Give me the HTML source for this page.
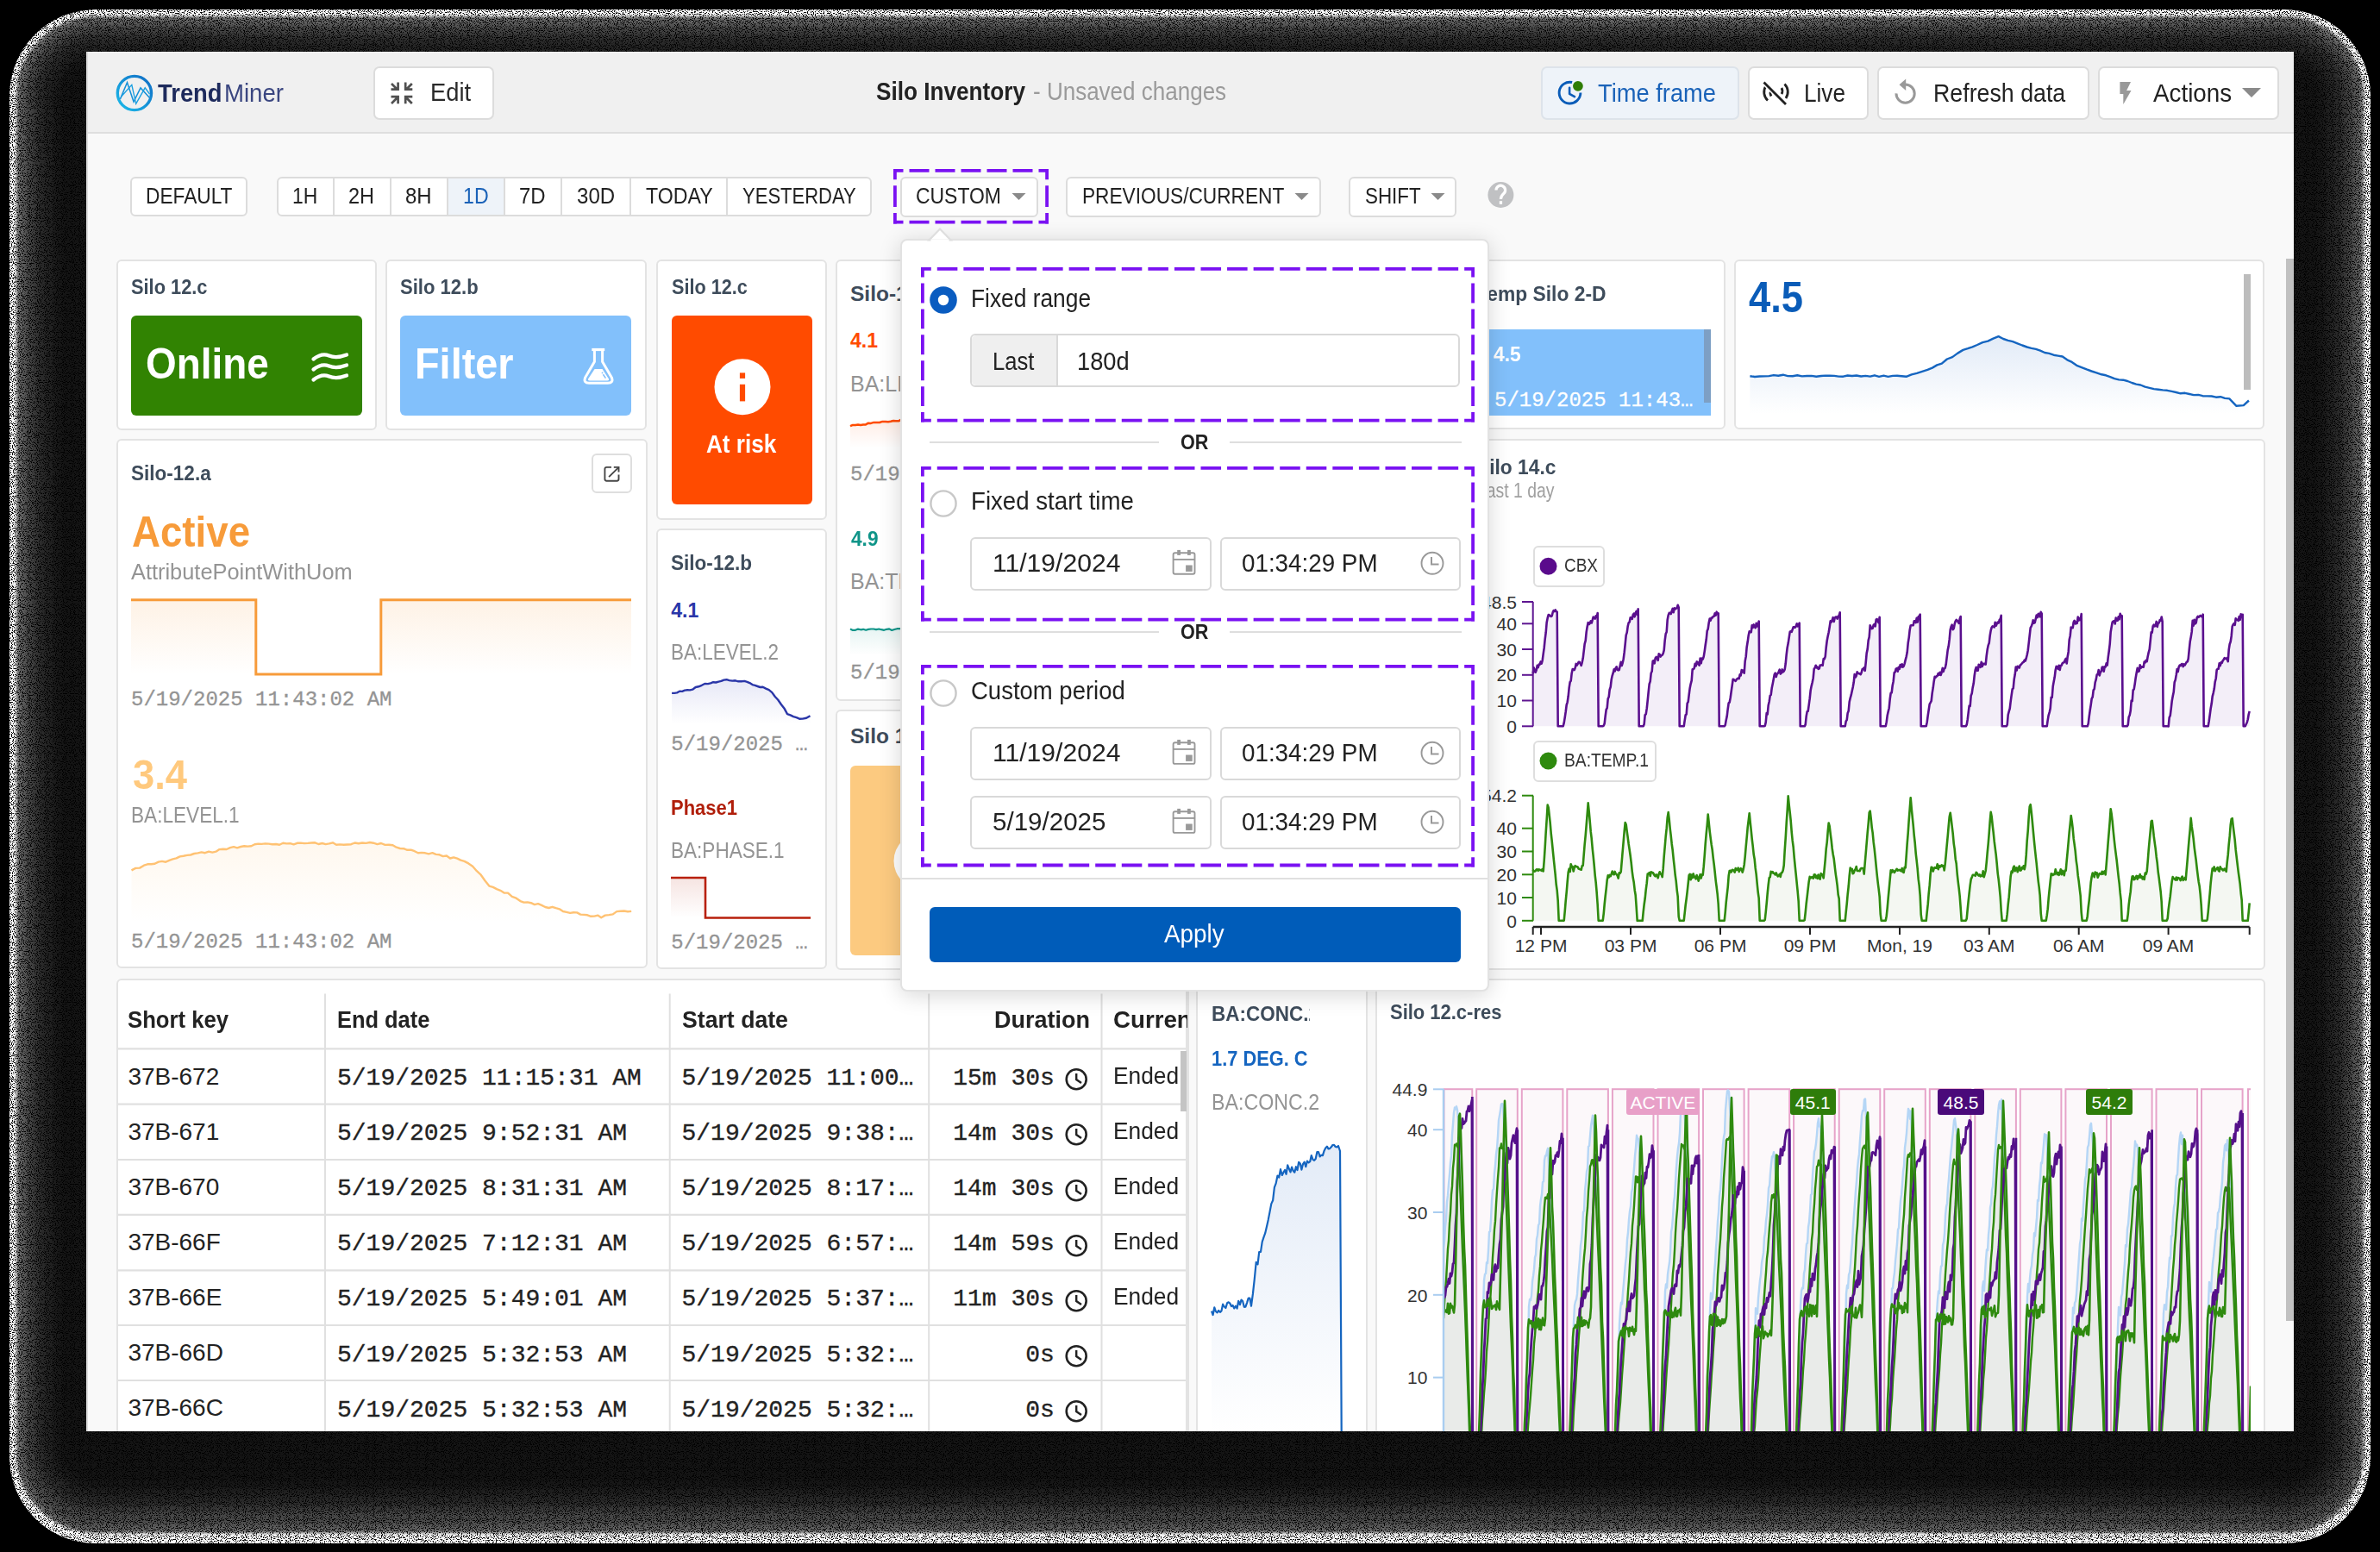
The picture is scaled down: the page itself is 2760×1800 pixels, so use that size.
<!DOCTYPE html>
<html><head><meta charset="utf-8"><title>TrendMiner - Silo Inventory</title>
<style>
html,body{margin:0;padding:0;background:#000;}
body{width:2760px;height:1800px;overflow:hidden;position:relative;font-family:"Liberation Sans",sans-serif;}
.s{position:absolute;}
.win{position:absolute;left:100px;top:60px;width:2560px;height:1600px;overflow:hidden;background:#f9f9f9;}
.t{position:absolute;line-height:1;white-space:nowrap;transform-origin:0 0;}
.b{position:absolute;}
svg.b{overflow:visible;}
</style></head><body>
<div class="s" style="left:11px;top:11px;width:2738px;height:1779px;border-radius:100px;background:rgb(250,250,250);"></div>
<div class="s" style="left:19px;top:19px;width:2722px;height:1759px;border-radius:92px;background:rgb(112,112,112);filter:blur(1.5px);"></div>
<div class="s" style="left:27px;top:27px;width:2706px;height:1744px;border-radius:84px;background:rgb(74,74,74);filter:blur(4px);"></div>
<div class="s" style="left:40px;top:40px;width:2680px;height:1710px;border-radius:71px;background:rgb(44,44,44);filter:blur(6px);"></div>
<div class="s" style="left:60px;top:60px;width:2640px;height:1670px;border-radius:51px;background:rgb(20,20,20);filter:blur(9px);"></div>
<svg class="s" style="left:0;top:0" width="2760" height="1800"><defs><filter id="dn" x="0" y="0" width="100%" height="100%" color-interpolation-filters="sRGB"><feTurbulence type="fractalNoise" baseFrequency="0.9" numOctaves="1" seed="7"/><feColorMatrix type="matrix" values="0 0 0 0 0  0 0 0 0 0  0 0 0 0 0  -14 0 0 0 6.6"/></filter></defs><rect width="2760" height="1800" filter="url(#dn)"/></svg>
<div class="win">
<div class="b" style="left:0.0px;top:0.0px;width:2560.0px;height:95.0px;background:#f0f0f0;border-bottom:2px solid #dedede;box-sizing:border-box;"></div>
<svg class="b" style="left:30.0px;top:22.0px;" width="52.0" height="52.0" viewBox="130.0 82.0 52.0 52.0">
<defs><linearGradient id="lg" x1="1" y1="0" x2="0" y2="1"><stop offset="0" stop-color="#106cc4"/><stop offset="1" stop-color="#1cbbea"/></linearGradient></defs>
<circle cx="155.9" cy="108" r="19.6" fill="none" stroke="url(#lg)" stroke-width="3.4"/>
<polyline points="139.4,114.9 147.5,95.7 155,118 163,101.9 174,114" fill="none" stroke="#1590d8" stroke-width="1.5" stroke-linejoin="miter"/>
<polyline points="140.4,112.2 152.8,98.4 157.7,120.4 168.2,101.9 173.5,109" fill="none" stroke="#1a9fe0" stroke-width="1.4" stroke-linejoin="miter"/>
</svg>
<div class="t" style="left:82.8px;top:33.3px;font-size:30.0px;color:#1d2a5c;font-weight:700;font-family:'Liberation Sans', sans-serif;transform:scaleX(0.913);">Trend</div>
<div class="t" style="left:160.0px;top:33.3px;font-size:30.0px;color:#3a4680;font-weight:400;font-family:'Liberation Sans', sans-serif;transform:scaleX(0.920);">Miner</div>
<div class="b" style="left:333.0px;top:17.0px;width:140.0px;height:62.0px;background:#fff;border:2px solid #dcdcdc;border-radius:7px;box-sizing:border-box;"></div>
<svg class="b" style="left:350.0px;top:33.0px;" width="32.0" height="30.0" viewBox="450.0 93.0 32.0 30.0"><g stroke="#505050" stroke-width="2.7" fill="none">
<path d="M454 97 L461 104 M453.5 103.6 H461.6 V95.6"/>
<path d="M477.8 97 L470.8 104 M478.3 103.6 H470.2 V95.6"/>
<path d="M454 120 L461 113 M453.5 112.2 H461.6 V120.2"/>
<path d="M477.8 120 L470.8 113 M478.3 112.2 H470.2 V120.2"/></g></svg>
<div class="t" style="left:399.0px;top:33.3px;font-size:29.0px;color:#2a2a2a;font-weight:400;font-family:'Liberation Sans', sans-serif;transform:scaleX(0.941);">Edit</div>
<div class="t" style="left:916.0px;top:31.0px;font-size:30.0px;color:#222;font-weight:700;font-family:'Liberation Sans', sans-serif;transform:scaleX(0.872);">Silo Inventory</div>
<div class="t" style="left:1098.0px;top:31.0px;font-size:30.0px;color:#9a9a9a;font-weight:400;font-family:'Liberation Sans', sans-serif;transform:scaleX(0.867);">- Unsaved changes</div>
<div class="b" style="left:1687.0px;top:17.0px;width:230.0px;height:62.0px;background:#eef3f9;border:2px solid #dde3ea;border-radius:7px;box-sizing:border-box;"></div>
<svg class="b" style="left:1705.0px;top:28.0px;" width="35.0" height="38.0" viewBox="1805.0 88.0 35.0 38.0"><path d="M1823.2 95.5 A12.4 12.4 0 1 0 1832.9 107.6" fill="none" stroke="#0a5cb8" stroke-width="2.9"/>
<path d="M1820.1 101.8 V108.8 L1826 112.2" fill="none" stroke="#0a5cb8" stroke-width="2.6" stroke-linecap="round" stroke-linejoin="round"/>
<circle cx="1829.9" cy="99.8" r="7.8" fill="#eef3f9"/><circle cx="1829.9" cy="99.8" r="5.9" fill="#2f7d04"/></svg>
<div class="t" style="left:1753.0px;top:34.2px;font-size:29.0px;color:#1a62b8;font-weight:400;font-family:'Liberation Sans', sans-serif;transform:scaleX(0.941);">Time frame</div>
<div class="b" style="left:1927.0px;top:17.0px;width:140.0px;height:62.0px;background:#fff;border:2px solid #dcdcdc;border-radius:7px;box-sizing:border-box;"></div>
<svg class="b" style="left:1940.0px;top:32.0px;" width="38.0" height="34.0" viewBox="2040.0 92.0 38.0 34.0"><g fill="none" stroke="#222" stroke-width="2.8">
<path d="M2048 99.5 A13 13 0 0 0 2050 116.5"/><path d="M2054.5 104 A7 7 0 0 0 2054 111.5"/>
<path d="M2066 102 A7 7 0 0 1 2066 109"/><path d="M2069.5 97.5 A13 13 0 0 1 2071 114"/></g>
<path d="M2045.5 95.5 L2071 121" stroke="#fff" stroke-width="6"/><path d="M2045.5 95.5 L2071 121" stroke="#222" stroke-width="2.8"/></svg>
<div class="t" style="left:1992.0px;top:34.2px;font-size:29.0px;color:#222;font-weight:400;font-family:'Liberation Sans', sans-serif;transform:scaleX(0.902);">Live</div>
<div class="b" style="left:2077.0px;top:17.0px;width:246.0px;height:62.0px;background:#fff;border:2px solid #dcdcdc;border-radius:7px;box-sizing:border-box;"></div>
<svg class="b" style="left:2093.0px;top:28.0px;" width="35.0" height="38.0" viewBox="2193.0 88.0 35.0 38.0"><path d="M2209.6 98 A10.6 10.6 0 1 1 2199 108.4" fill="none" stroke="#999" stroke-width="3"/>
<path d="M2202.5 98.2 L2210.2 91.5 L2210.2 105 Z" fill="#999"/></svg>
<div class="t" style="left:2142.4px;top:34.2px;font-size:29.0px;color:#222;font-weight:400;font-family:'Liberation Sans', sans-serif;transform:scaleX(0.923);">Refresh data</div>
<div class="b" style="left:2333.0px;top:17.0px;width:210.0px;height:62.0px;background:#fff;border:2px solid #dcdcdc;border-radius:7px;box-sizing:border-box;"></div>
<svg class="b" style="left:2352.0px;top:32.0px;" width="26.0" height="34.0" viewBox="2452.0 92.0 26.0 34.0"><path d="M2458.4 95 H2471 L2466.1 105.1 H2471.5 L2462.3 121 V108.9 H2458.4 Z" fill="#999"/></svg>
<div class="t" style="left:2397.4px;top:34.2px;font-size:29.0px;color:#222;font-weight:400;font-family:'Liberation Sans', sans-serif;transform:scaleX(0.959);">Actions</div>
<svg class="b" style="left:2498.0px;top:40.0px;" width="26.0" height="16.0" viewBox="2598.0 100.0 26.0 16.0"><path d="M2600 102 H2622 L2611 113 Z" fill="#8a8a8a"/></svg>
<div class="b" style="left:50.6px;top:144.7px;width:136.4px;height:46.3px;background:#fff;border:2px solid #dcdcdc;border-radius:6px;box-sizing:border-box;"></div>
<div class="t" style="left:68.5px;top:154.4px;font-size:26.0px;color:#222;font-weight:400;font-family:'Liberation Sans', sans-serif;transform:scaleX(0.873);">DEFAULT</div>
<div class="b" style="left:220.6px;top:144.7px;width:690.4px;height:46.3px;background:#fff;border:2px solid #dcdcdc;border-radius:6px;box-sizing:border-box;"></div>
<div class="b" style="left:420.0px;top:146.7px;width:65.0px;height:42.3px;background:#eef3f9;"></div>
<div class="b" style="left:285.8px;top:146.7px;width:2.0px;height:42.3px;background:#dcdcdc;"></div>
<div class="b" style="left:352.0px;top:146.7px;width:2.0px;height:42.3px;background:#dcdcdc;"></div>
<div class="b" style="left:418.0px;top:146.7px;width:2.0px;height:42.3px;background:#dcdcdc;"></div>
<div class="b" style="left:484.0px;top:146.7px;width:2.0px;height:42.3px;background:#dcdcdc;"></div>
<div class="b" style="left:550.0px;top:146.7px;width:2.0px;height:42.3px;background:#dcdcdc;"></div>
<div class="b" style="left:630.0px;top:146.7px;width:2.0px;height:42.3px;background:#dcdcdc;"></div>
<div class="b" style="left:742.3px;top:146.7px;width:2.0px;height:42.3px;background:#dcdcdc;"></div>
<div class="t" style="left:239.0px;top:154.4px;font-size:26.0px;color:#222;font-weight:400;font-family:'Liberation Sans', sans-serif;transform:scaleX(0.879);">1H</div>
<div class="t" style="left:304.4px;top:154.4px;font-size:26.0px;color:#222;font-weight:400;font-family:'Liberation Sans', sans-serif;transform:scaleX(0.903);">2H</div>
<div class="t" style="left:370.0px;top:154.4px;font-size:26.0px;color:#222;font-weight:400;font-family:'Liberation Sans', sans-serif;transform:scaleX(0.921);">8H</div>
<div class="t" style="left:437.4px;top:154.4px;font-size:26.0px;color:#1a62b8;font-weight:400;font-family:'Liberation Sans', sans-serif;transform:scaleX(0.891);">1D</div>
<div class="t" style="left:502.4px;top:154.4px;font-size:26.0px;color:#222;font-weight:400;font-family:'Liberation Sans', sans-serif;transform:scaleX(0.921);">7D</div>
<div class="t" style="left:568.5px;top:154.4px;font-size:26.0px;color:#222;font-weight:400;font-family:'Liberation Sans', sans-serif;transform:scaleX(0.925);">30D</div>
<div class="t" style="left:648.5px;top:154.4px;font-size:26.0px;color:#222;font-weight:400;font-family:'Liberation Sans', sans-serif;transform:scaleX(0.891);">TODAY</div>
<div class="t" style="left:760.9px;top:154.4px;font-size:26.0px;color:#222;font-weight:400;font-family:'Liberation Sans', sans-serif;transform:scaleX(0.847);">YESTERDAY</div>
<div class="b" style="left:944.0px;top:144.5px;width:160.0px;height:47.1px;background:#fff;border:2px solid #dcdcdc;border-radius:6px;box-sizing:border-box;"></div>
<div class="t" style="left:961.9px;top:154.4px;font-size:26.0px;color:#222;font-weight:400;font-family:'Liberation Sans', sans-serif;transform:scaleX(0.882);">CUSTOM</div>
<svg class="b" style="left:1072.0px;top:162.0px;" width="20.0" height="12.0" viewBox="1172.0 222.0 20.0 12.0"><path d="M1173.5 224 H1189.5 L1181.5 232 Z" fill="#8a8a8a"/></svg>
<div class="b" style="left:1136.0px;top:144.5px;width:296.0px;height:47.1px;background:#fff;border:2px solid #dcdcdc;border-radius:6px;box-sizing:border-box;"></div>
<div class="t" style="left:1154.6px;top:154.4px;font-size:26.0px;color:#222;font-weight:400;font-family:'Liberation Sans', sans-serif;transform:scaleX(0.872);">PREVIOUS/CURRENT</div>
<svg class="b" style="left:1400.0px;top:162.0px;" width="20.0" height="12.0" viewBox="1500.0 222.0 20.0 12.0"><path d="M1501.5 224 H1517.5 L1509.5 232 Z" fill="#8a8a8a"/></svg>
<div class="b" style="left:1464.0px;top:144.5px;width:125.0px;height:47.1px;background:#fff;border:2px solid #dcdcdc;border-radius:6px;box-sizing:border-box;"></div>
<div class="t" style="left:1482.8px;top:154.4px;font-size:26.0px;color:#222;font-weight:400;font-family:'Liberation Sans', sans-serif;transform:scaleX(0.861);">SHIFT</div>
<svg class="b" style="left:1558.0px;top:162.0px;" width="20.0" height="12.0" viewBox="1658.0 222.0 20.0 12.0"><path d="M1659.5 224 H1675.5 L1667.5 232 Z" fill="#8a8a8a"/></svg>
<svg class="b" style="left:1618.0px;top:144.0px;" width="44.0" height="44.0" viewBox="1718.0 204.0 44.0 44.0"><circle cx="1740.4" cy="226" r="15" fill="#c0c1c3"/><path d="M1735 220.5 A5.3 5.3 0 1 1 1743.8 224.5 Q1740.4 227.5 1740.4 231" fill="none" stroke="#fff" stroke-width="3.2"/><rect x="1738.8" y="233.2" width="3.3" height="3.6" fill="#fff"/></svg>
<div class="b" style="left:34.5px;top:240.6px;width:302.5px;height:198.4px;background:#fff;border:2px solid #e3e3e3;border-radius:6px;box-sizing:border-box;"></div>
<div class="t" style="left:51.8px;top:261.2px;font-size:24.5px;color:#3e4c5b;font-weight:700;font-family:'Liberation Sans', sans-serif;transform:scaleX(0.890);">Silo 12.c</div>
<div class="b" style="left:51.8px;top:306.0px;width:268.2px;height:115.7px;background:#318302;border-radius:6px;"></div>
<div class="t" style="left:68.8px;top:336.5px;font-size:50.0px;color:#fff;font-weight:700;font-family:'Liberation Sans', sans-serif;transform:scaleX(0.917);">Online</div>
<svg class="b" style="left:258.0px;top:345.0px;" width="50.0" height="47.0" viewBox="358.0 405.0 50.0 47.0"><g fill="none" stroke="#fff" stroke-width="4.3" stroke-linecap="round">
<path d="M363.5 416.5 Q373 409 381.5 412.5 T402 411.5"/><path d="M363.5 428.5 Q373 421 381.5 424.5 T402 423.5"/><path d="M363.5 440.5 Q373 433 381.5 436.5 T402 435.5"/></g></svg>
<div class="b" style="left:347.0px;top:240.6px;width:302.6px;height:198.4px;background:#fff;border:2px solid #e3e3e3;border-radius:6px;box-sizing:border-box;"></div>
<div class="t" style="left:364.0px;top:261.2px;font-size:24.5px;color:#3e4c5b;font-weight:700;font-family:'Liberation Sans', sans-serif;transform:scaleX(0.900);">Silo 12.b</div>
<div class="b" style="left:364.0px;top:306.0px;width:268.0px;height:115.7px;background:#82c0fb;border-radius:6px;"></div>
<div class="t" style="left:381.4px;top:336.5px;font-size:50.0px;color:#fff;font-weight:700;font-family:'Liberation Sans', sans-serif;transform:scaleX(0.937);">Filter</div>
<svg class="b" style="left:572.0px;top:340.0px;" width="44.0" height="50.0" viewBox="672.0 400.0 44.0 50.0"><path d="M686.3 405.5 H701.2" stroke="#fff" stroke-width="3.2"/>
<path d="M689.4 406 V419.5 L678.6 438 Q676.3 444.2 683 444.2 H705 Q711.7 444.2 709.4 438 L698.6 419.5 V406" fill="none" stroke="#fff" stroke-width="3" stroke-linejoin="round"/>
<path d="M689.6 428 H698.5 L705.8 439.2 Q706.6 441.4 704.3 441.4 H683.7 Q681.4 441.4 682.2 439.2 Z" fill="#fff"/>
<path d="M699.4 434.2 L702.4 438.6" stroke="#82c0fb" stroke-width="1.6"/><circle cx="698.5" cy="432.4" r="0.9" fill="#82c0fb"/></svg>
<div class="b" style="left:660.8px;top:240.6px;width:198.2px;height:302.1px;background:#fff;border:2px solid #e3e3e3;border-radius:6px;box-sizing:border-box;"></div>
<div class="t" style="left:678.5px;top:261.2px;font-size:24.5px;color:#3e4c5b;font-weight:700;font-family:'Liberation Sans', sans-serif;transform:scaleX(0.883);">Silo 12.c</div>
<div class="b" style="left:678.5px;top:306.0px;width:163.5px;height:219.0px;background:#ff4b00;border-radius:6px;"></div>
<svg class="b" style="left:726.0px;top:354.0px;" width="70.0" height="70.0" viewBox="826.0 414.0 70.0 70.0"><circle cx="861" cy="448.8" r="32.5" fill="#fff"/><rect x="857.9" y="432.4" width="6.2" height="6.5" fill="#ff4b00"/><rect x="857.9" y="445.8" width="6.2" height="19.6" fill="#ff4b00"/></svg>
<div class="t" style="left:719.3px;top:441.4px;font-size:29.0px;color:#fff;font-weight:700;font-family:'Liberation Sans', sans-serif;transform:scaleX(0.901);">At risk</div>
<div class="b" style="left:869.3px;top:240.6px;width:270.7px;height:512.2px;background:#fff;border:2px solid #e3e3e3;border-radius:6px;box-sizing:border-box;"></div>
<div class="t" style="left:886.0px;top:268.8px;font-size:24.5px;color:#3e4c5b;font-weight:700;font-family:'Liberation Sans', sans-serif;">Silo-12.c</div>
<div class="t" style="left:886.0px;top:324.1px;font-size:23.0px;color:#ff4b00;font-weight:700;font-family:'Liberation Sans', sans-serif;">4.1</div>
<div class="t" style="left:886.0px;top:372.8px;font-size:25.0px;color:#949494;font-weight:400;font-family:'Liberation Sans', sans-serif;">BA:LEVEL.3</div>
<svg class="b" style="left:886.0px;top:410.0px;" width="214.0" height="50.0" viewBox="986.0 470.0 214.0 50.0"><defs><linearGradient id="g4a" x1="0" y1="0" x2="0" y2="1"><stop offset="0" stop-color="#ff4b00" stop-opacity="0.12"/><stop offset="1" stop-color="#ff4b00" stop-opacity="0"/></linearGradient></defs><path d="M986.0 494.2 L989.0 492.9 L992.0 492.9 L995.0 492.4 L998.0 492.9 L1001.0 492.4 L1004.0 492.4 L1007.0 490.7 L1010.0 490.9 L1013.3 489.9 L1016.7 489.9 L1020.0 490.0 L1023.3 488.9 L1026.7 488.9 L1030.0 489.2 L1033.0 488.8 L1036.0 488.0 L1039.0 488.2 L1042.0 488.3 L1045.0 486.7 L1048.0 487.7 L1051.0 487.2 L1054.0 486.3 L1057.0 485.7 L1060.0 486.7 L1063.0 485.6 L1066.1 485.1 L1069.1 485.0 L1072.2 486.0 L1075.2 485.5 L1078.3 485.7 L1081.3 485.5 L1084.3 485.0 L1087.4 485.6 L1090.4 484.5 L1093.5 484.6 L1096.5 485.0 L1099.6 484.5 L1102.6 484.8 L1105.7 484.2 L1108.7 484.2 L1111.7 483.1 L1114.8 483.2 L1117.8 483.2 L1120.9 482.7 L1123.9 482.8 L1127.0 482.5 L1130.0 482.6 L1133.0 483.1 L1136.1 482.5 L1139.1 482.4 L1142.2 482.0 L1145.2 482.0 L1148.3 482.9 L1151.3 482.3 L1154.3 482.1 L1157.4 481.3 L1160.4 482.1 L1163.5 481.0 L1166.5 481.2 L1169.6 482.1 L1172.6 481.4 L1175.7 481.1 L1178.7 481.2 L1181.7 481.3 L1184.8 481.1 L1187.8 480.1 L1190.9 479.6 L1193.9 480.0 L1197.0 479.8 L1200.0 480.0 L1200.0 520.0 L986.0 520.0 Z" fill="url(#g4a)"/><path d="M986.0 494.2 L989.0 492.9 L992.0 492.9 L995.0 492.4 L998.0 492.9 L1001.0 492.4 L1004.0 492.4 L1007.0 490.7 L1010.0 490.9 L1013.3 489.9 L1016.7 489.9 L1020.0 490.0 L1023.3 488.9 L1026.7 488.9 L1030.0 489.2 L1033.0 488.8 L1036.0 488.0 L1039.0 488.2 L1042.0 488.3 L1045.0 486.7 L1048.0 487.7 L1051.0 487.2 L1054.0 486.3 L1057.0 485.7 L1060.0 486.7 L1063.0 485.6 L1066.1 485.1 L1069.1 485.0 L1072.2 486.0 L1075.2 485.5 L1078.3 485.7 L1081.3 485.5 L1084.3 485.0 L1087.4 485.6 L1090.4 484.5 L1093.5 484.6 L1096.5 485.0 L1099.6 484.5 L1102.6 484.8 L1105.7 484.2 L1108.7 484.2 L1111.7 483.1 L1114.8 483.2 L1117.8 483.2 L1120.9 482.7 L1123.9 482.8 L1127.0 482.5 L1130.0 482.6 L1133.0 483.1 L1136.1 482.5 L1139.1 482.4 L1142.2 482.0 L1145.2 482.0 L1148.3 482.9 L1151.3 482.3 L1154.3 482.1 L1157.4 481.3 L1160.4 482.1 L1163.5 481.0 L1166.5 481.2 L1169.6 482.1 L1172.6 481.4 L1175.7 481.1 L1178.7 481.2 L1181.7 481.3 L1184.8 481.1 L1187.8 480.1 L1190.9 479.6 L1193.9 480.0 L1197.0 479.8 L1200.0 480.0" fill="none" stroke="#ff4b00" stroke-width="2.5" stroke-linejoin="round"/></svg>
<div class="t" style="left:886.0px;top:479.4px;font-size:24.0px;color:#949494;font-weight:400;font-family:'Liberation Mono', monospace;-webkit-text-stroke:0.29px #949494;">5/19/2025 11:43:02 AM</div>
<div class="t" style="left:886.9px;top:553.8px;font-size:23.0px;color:#0e9488;font-weight:700;font-family:'Liberation Sans', sans-serif;transform:scaleX(0.985);">4.9</div>
<div class="t" style="left:886.0px;top:601.8px;font-size:25.0px;color:#949494;font-weight:400;font-family:'Liberation Sans', sans-serif;">BA:TEMP.3</div>
<svg class="b" style="left:886.0px;top:655.0px;" width="214.0" height="45.0" viewBox="986.0 715.0 214.0 45.0"><defs><linearGradient id="g4b" x1="0" y1="0" x2="0" y2="1"><stop offset="0" stop-color="#0e9488" stop-opacity="0.10"/><stop offset="1" stop-color="#0e9488" stop-opacity="0"/></linearGradient></defs><path d="M986.0 729.4 L989.0 730.9 L992.0 730.8 L995.0 729.6 L998.1 730.3 L1001.1 729.8 L1004.1 730.8 L1007.1 729.9 L1010.1 729.5 L1013.1 729.5 L1016.1 730.1 L1019.2 729.5 L1022.2 730.2 L1025.2 730.8 L1028.2 729.8 L1031.2 729.4 L1034.2 731.0 L1037.2 730.0 L1040.3 729.2 L1043.3 729.1 L1046.3 729.2 L1049.3 730.3 L1052.3 730.6 L1055.3 729.8 L1058.3 729.1 L1061.4 729.8 L1064.4 731.0 L1067.4 730.1 L1070.4 730.9 L1073.4 730.7 L1076.4 729.0 L1079.4 730.4 L1082.5 730.4 L1085.5 730.1 L1088.5 729.5 L1091.5 730.3 L1094.5 729.2 L1097.5 729.9 L1100.5 729.9 L1103.5 730.9 L1106.6 730.8 L1109.6 729.5 L1112.6 730.0 L1115.6 729.4 L1118.6 730.8 L1121.6 730.7 L1124.6 729.6 L1127.7 730.3 L1130.7 730.2 L1133.7 729.3 L1136.7 730.5 L1139.7 730.1 L1142.7 730.6 L1145.7 730.1 L1148.8 729.0 L1151.8 729.6 L1154.8 729.0 L1157.8 730.9 L1160.8 730.8 L1163.8 730.7 L1166.8 729.6 L1169.9 729.1 L1172.9 730.8 L1175.9 730.9 L1178.9 729.2 L1181.9 730.0 L1184.9 729.1 L1187.9 730.5 L1191.0 730.5 L1194.0 729.3 L1197.0 730.0 L1200.0 730.0 L1200.0 760.0 L986.0 760.0 Z" fill="url(#g4b)"/><path d="M986.0 729.4 L989.0 730.9 L992.0 730.8 L995.0 729.6 L998.1 730.3 L1001.1 729.8 L1004.1 730.8 L1007.1 729.9 L1010.1 729.5 L1013.1 729.5 L1016.1 730.1 L1019.2 729.5 L1022.2 730.2 L1025.2 730.8 L1028.2 729.8 L1031.2 729.4 L1034.2 731.0 L1037.2 730.0 L1040.3 729.2 L1043.3 729.1 L1046.3 729.2 L1049.3 730.3 L1052.3 730.6 L1055.3 729.8 L1058.3 729.1 L1061.4 729.8 L1064.4 731.0 L1067.4 730.1 L1070.4 730.9 L1073.4 730.7 L1076.4 729.0 L1079.4 730.4 L1082.5 730.4 L1085.5 730.1 L1088.5 729.5 L1091.5 730.3 L1094.5 729.2 L1097.5 729.9 L1100.5 729.9 L1103.5 730.9 L1106.6 730.8 L1109.6 729.5 L1112.6 730.0 L1115.6 729.4 L1118.6 730.8 L1121.6 730.7 L1124.6 729.6 L1127.7 730.3 L1130.7 730.2 L1133.7 729.3 L1136.7 730.5 L1139.7 730.1 L1142.7 730.6 L1145.7 730.1 L1148.8 729.0 L1151.8 729.6 L1154.8 729.0 L1157.8 730.9 L1160.8 730.8 L1163.8 730.7 L1166.8 729.6 L1169.9 729.1 L1172.9 730.8 L1175.9 730.9 L1178.9 729.2 L1181.9 730.0 L1184.9 729.1 L1187.9 730.5 L1191.0 730.5 L1194.0 729.3 L1197.0 730.0 L1200.0 730.0" fill="none" stroke="#0e9488" stroke-width="2.2" stroke-linejoin="round"/></svg>
<div class="t" style="left:886.0px;top:708.6px;font-size:24.0px;color:#949494;font-weight:400;font-family:'Liberation Mono', monospace;-webkit-text-stroke:0.29px #949494;">5/19/2025 11:43:02 AM</div>
<div class="b" style="left:868.8px;top:763.2px;width:271.2px;height:301.8px;background:#fff;border:2px solid #e3e3e3;border-radius:6px;box-sizing:border-box;"></div>
<div class="t" style="left:886.0px;top:782.2px;font-size:24.5px;color:#3e4c5b;font-weight:700;font-family:'Liberation Sans', sans-serif;">Silo 12.d</div>
<div class="b" style="left:886.0px;top:828.2px;width:214.0px;height:219.4px;background:#fcca80;border-radius:6px;"></div>
<svg class="b" style="left:930.0px;top:900.0px;" width="80.0" height="80.0" viewBox="1030.0 960.0 80.0 80.0"><circle cx="1069" cy="998.5" r="32.5" fill="#fff"/></svg>
<div class="b" style="left:34.5px;top:448.8px;width:616.5px;height:614.2px;background:#fff;border:2px solid #e3e3e3;border-radius:6px;box-sizing:border-box;"></div>
<div class="t" style="left:51.8px;top:477.2px;font-size:24.5px;color:#3e4c5b;font-weight:700;font-family:'Liberation Sans', sans-serif;transform:scaleX(0.920);">Silo-12.a</div>
<div class="b" style="left:585.8px;top:465.8px;width:47.1px;height:46.7px;background:#fff;border:2px solid #dedede;border-radius:6px;box-sizing:border-box;"></div>
<svg class="b" style="left:596.0px;top:476.0px;" width="28.0" height="28.0" viewBox="696.0 536.0 28.0 28.0"><g fill="none" stroke="#454545" stroke-width="1.9"><path d="M709 541.9 H703.6 Q701.4 541.9 701.4 544.1 V555.6 Q701.4 557.8 703.6 557.8 H715.3 Q717.5 557.8 717.5 555.6 V550.5"/><path d="M706.1 553.1 L716.8 542.6"/><path d="M711.8 541.9 H717.5 V547.5"/></g></svg>
<div class="t" style="left:52.5px;top:531.5px;font-size:50.0px;color:#f79b3a;font-weight:700;font-family:'Liberation Sans', sans-serif;transform:scaleX(0.913);">Active</div>
<div class="t" style="left:52.0px;top:590.8px;font-size:25.0px;color:#949494;font-weight:400;font-family:'Liberation Sans', sans-serif;transform:scaleX(1.015);">AttributePointWithUom</div>
<svg class="b" style="left:50.0px;top:630.0px;" width="585.0" height="100.0" viewBox="150.0 690.0 585.0 100.0"><defs><linearGradient id="gsa" x1="0" y1="0" x2="0" y2="1"><stop offset="0" stop-color="#f79b3a" stop-opacity="0.13"/><stop offset="1" stop-color="#f79b3a" stop-opacity="0"/></linearGradient></defs><path d="M152 695.8 H296.8 V782 H152 Z M441.8 695.8 H732 V782 H441.8 Z" fill="url(#gsa)"/><path d="M152.0 695.8 L296.8 695.8 L296.8 782.0 L441.8 782.0 L441.8 695.8 L732.0 695.8" fill="none" stroke="#f79b3a" stroke-width="3"/></svg>
<div class="t" style="left:52.0px;top:739.8px;font-size:24.0px;color:#949494;font-weight:400;font-family:'Liberation Mono', monospace;-webkit-text-stroke:0.29px #949494;">5/19/2025 11:43:02 AM</div>
<div class="t" style="left:53.5px;top:814.7px;font-size:48.0px;color:#ffc97d;font-weight:700;font-family:'Liberation Sans', sans-serif;transform:scaleX(0.944);">3.4</div>
<div class="t" style="left:52.0px;top:872.8px;font-size:25.0px;color:#949494;font-weight:400;font-family:'Liberation Sans', sans-serif;transform:scaleX(0.904);">BA:LEVEL.1</div>
<svg class="b" style="left:50.0px;top:905.0px;" width="585.0" height="105.0" viewBox="150.0 965.0 585.0 105.0"><defs><linearGradient id="gl1" x1="0" y1="0" x2="0" y2="1"><stop offset="0" stop-color="#ffc273" stop-opacity="0.12"/><stop offset="1" stop-color="#ffc273" stop-opacity="0"/></linearGradient></defs><path d="M152.5 1009.4 L157.3 1006.9 L162.1 1006.6 L166.9 1003.7 L171.1 1002.3 L175.3 1002.2 L179.5 1001.7 L183.7 999.6 L187.9 998.9 L192.2 999.7 L196.3 997.8 L200.4 996.3 L204.5 995.4 L208.6 993.4 L212.8 992.7 L216.9 991.9 L221.0 991.5 L225.2 990.0 L229.4 989.4 L233.6 988.4 L237.8 989.2 L242.1 987.6 L246.3 988.6 L250.4 987.7 L254.5 985.1 L258.6 984.7 L262.8 985.0 L266.9 983.1 L271.0 982.1 L275.1 983.3 L279.2 982.0 L283.2 981.3 L287.3 981.6 L291.4 981.2 L295.4 979.2 L299.5 978.6 L303.5 978.9 L307.6 978.4 L311.7 978.6 L315.8 979.2 L320.0 979.0 L324.1 979.8 L328.2 977.7 L332.3 978.4 L336.5 978.2 L340.6 979.4 L344.7 977.8 L348.8 977.6 L352.9 978.1 L357.1 977.9 L361.2 977.5 L365.3 977.3 L369.4 979.0 L373.6 978.0 L377.7 979.1 L381.8 978.4 L385.9 977.3 L390.0 979.7 L394.2 979.4 L398.5 979.7 L402.8 979.5 L407.2 979.2 L411.5 977.5 L415.8 978.2 L420.1 977.5 L424.5 977.9 L428.8 977.0 L433.1 977.7 L437.5 979.1 L442.0 978.0 L446.5 979.9 L451.0 979.7 L455.5 980.2 L459.7 982.7 L463.9 984.0 L468.1 984.2 L472.3 985.8 L476.5 985.6 L480.8 987.2 L484.9 989.3 L489.0 988.9 L493.1 989.3 L497.2 990.3 L501.4 989.2 L505.5 990.9 L509.6 991.3 L513.7 993.1 L517.9 992.5 L522.0 995.5 L526.1 994.4 L530.2 995.7 L534.3 997.7 L538.5 998.9 L543.3 1001.4 L548.1 1004.8 L552.9 1010.2 L557.7 1014.7 L562.5 1021.5 L567.3 1027.6 L571.7 1028.9 L576.0 1031.1 L580.3 1032.8 L584.6 1035.6 L589.0 1035.6 L593.8 1039.9 L598.6 1041.7 L603.4 1045.1 L607.5 1046.6 L611.7 1046.4 L615.8 1047.2 L619.9 1049.1 L624.0 1048.2 L628.1 1049.9 L632.3 1052.0 L636.4 1053.0 L640.5 1051.8 L644.6 1053.2 L648.8 1054.3 L652.9 1057.0 L657.0 1057.9 L661.1 1058.9 L665.1 1058.3 L669.1 1058.4 L673.2 1060.6 L677.2 1060.9 L681.2 1061.3 L685.2 1062.8 L689.2 1062.6 L693.2 1061.6 L697.2 1064.2 L701.7 1061.6 L706.2 1061.1 L710.7 1060.4 L715.2 1057.1 L719.5 1056.8 L723.7 1056.5 L728.0 1057.3 L732.2 1056.9 L732.2 1070.0 L152.5 1070.0 Z" fill="url(#gl1)"/><path d="M152.5 1009.4 L157.3 1006.9 L162.1 1006.6 L166.9 1003.7 L171.1 1002.3 L175.3 1002.2 L179.5 1001.7 L183.7 999.6 L187.9 998.9 L192.2 999.7 L196.3 997.8 L200.4 996.3 L204.5 995.4 L208.6 993.4 L212.8 992.7 L216.9 991.9 L221.0 991.5 L225.2 990.0 L229.4 989.4 L233.6 988.4 L237.8 989.2 L242.1 987.6 L246.3 988.6 L250.4 987.7 L254.5 985.1 L258.6 984.7 L262.8 985.0 L266.9 983.1 L271.0 982.1 L275.1 983.3 L279.2 982.0 L283.2 981.3 L287.3 981.6 L291.4 981.2 L295.4 979.2 L299.5 978.6 L303.5 978.9 L307.6 978.4 L311.7 978.6 L315.8 979.2 L320.0 979.0 L324.1 979.8 L328.2 977.7 L332.3 978.4 L336.5 978.2 L340.6 979.4 L344.7 977.8 L348.8 977.6 L352.9 978.1 L357.1 977.9 L361.2 977.5 L365.3 977.3 L369.4 979.0 L373.6 978.0 L377.7 979.1 L381.8 978.4 L385.9 977.3 L390.0 979.7 L394.2 979.4 L398.5 979.7 L402.8 979.5 L407.2 979.2 L411.5 977.5 L415.8 978.2 L420.1 977.5 L424.5 977.9 L428.8 977.0 L433.1 977.7 L437.5 979.1 L442.0 978.0 L446.5 979.9 L451.0 979.7 L455.5 980.2 L459.7 982.7 L463.9 984.0 L468.1 984.2 L472.3 985.8 L476.5 985.6 L480.8 987.2 L484.9 989.3 L489.0 988.9 L493.1 989.3 L497.2 990.3 L501.4 989.2 L505.5 990.9 L509.6 991.3 L513.7 993.1 L517.9 992.5 L522.0 995.5 L526.1 994.4 L530.2 995.7 L534.3 997.7 L538.5 998.9 L543.3 1001.4 L548.1 1004.8 L552.9 1010.2 L557.7 1014.7 L562.5 1021.5 L567.3 1027.6 L571.7 1028.9 L576.0 1031.1 L580.3 1032.8 L584.6 1035.6 L589.0 1035.6 L593.8 1039.9 L598.6 1041.7 L603.4 1045.1 L607.5 1046.6 L611.7 1046.4 L615.8 1047.2 L619.9 1049.1 L624.0 1048.2 L628.1 1049.9 L632.3 1052.0 L636.4 1053.0 L640.5 1051.8 L644.6 1053.2 L648.8 1054.3 L652.9 1057.0 L657.0 1057.9 L661.1 1058.9 L665.1 1058.3 L669.1 1058.4 L673.2 1060.6 L677.2 1060.9 L681.2 1061.3 L685.2 1062.8 L689.2 1062.6 L693.2 1061.6 L697.2 1064.2 L701.7 1061.6 L706.2 1061.1 L710.7 1060.4 L715.2 1057.1 L719.5 1056.8 L723.7 1056.5 L728.0 1057.3 L732.2 1056.9" fill="none" stroke="#ffc273" stroke-width="2.4" stroke-linejoin="round"/></svg>
<div class="t" style="left:52.0px;top:1021.3px;font-size:24.0px;color:#949494;font-weight:400;font-family:'Liberation Mono', monospace;-webkit-text-stroke:0.29px #949494;">5/19/2025 11:43:02 AM</div>
<div class="b" style="left:661.3px;top:553.0px;width:197.7px;height:511.0px;background:#fff;border:2px solid #e3e3e3;border-radius:6px;box-sizing:border-box;"></div>
<div class="t" style="left:678.3px;top:581.2px;font-size:24.5px;color:#3e4c5b;font-weight:700;font-family:'Liberation Sans', sans-serif;transform:scaleX(0.921);">Silo-12.b</div>
<div class="t" style="left:678.3px;top:636.5px;font-size:23.0px;color:#2a36a8;font-weight:700;font-family:'Liberation Sans', sans-serif;">4.1</div>
<div class="t" style="left:678.3px;top:684.2px;font-size:25.0px;color:#949494;font-weight:400;font-family:'Liberation Sans', sans-serif;transform:scaleX(0.899);">BA:LEVEL.2</div>
<svg class="b" style="left:678.0px;top:720.0px;" width="164.0" height="60.0" viewBox="778.0 780.0 164.0 60.0"><defs><linearGradient id="gl2" x1="0" y1="0" x2="0" y2="1"><stop offset="0" stop-color="#7a80d0" stop-opacity="0.18"/><stop offset="1" stop-color="#7a80d0" stop-opacity="0"/></linearGradient></defs><path d="M779.1 803.9 L782.1 803.9 L785.1 803.4 L788.1 801.8 L791.1 801.9 L794.1 800.6 L797.1 800.3 L800.1 800.4 L803.1 799.7 L806.7 797.0 L810.2 796.3 L813.8 794.8 L817.3 793.0 L820.9 793.1 L824.0 792.4 L827.1 791.2 L830.2 791.5 L833.3 790.6 L836.4 789.9 L839.5 788.6 L842.6 788.2 L845.7 789.1 L849.2 789.6 L852.7 789.3 L856.3 790.3 L859.8 790.2 L863.4 789.9 L866.4 790.8 L869.4 792.1 L872.5 794.1 L875.5 794.9 L878.6 796.0 L881.6 797.0 L884.6 796.7 L888.2 798.6 L891.7 800.1 L895.3 803.1 L898.8 808.0 L902.3 811.8 L905.9 817.0 L909.4 821.4 L913.0 828.1 L916.5 829.4 L920.1 831.1 L923.6 832.2 L927.1 833.7 L930.7 833.6 L935.1 832.8 L939.5 830.2 L939.5 840.0 L779.1 840.0 Z" fill="url(#gl2)"/><path d="M779.1 803.9 L782.1 803.9 L785.1 803.4 L788.1 801.8 L791.1 801.9 L794.1 800.6 L797.1 800.3 L800.1 800.4 L803.1 799.7 L806.7 797.0 L810.2 796.3 L813.8 794.8 L817.3 793.0 L820.9 793.1 L824.0 792.4 L827.1 791.2 L830.2 791.5 L833.3 790.6 L836.4 789.9 L839.5 788.6 L842.6 788.2 L845.7 789.1 L849.2 789.6 L852.7 789.3 L856.3 790.3 L859.8 790.2 L863.4 789.9 L866.4 790.8 L869.4 792.1 L872.5 794.1 L875.5 794.9 L878.6 796.0 L881.6 797.0 L884.6 796.7 L888.2 798.6 L891.7 800.1 L895.3 803.1 L898.8 808.0 L902.3 811.8 L905.9 817.0 L909.4 821.4 L913.0 828.1 L916.5 829.4 L920.1 831.1 L923.6 832.2 L927.1 833.7 L930.7 833.6 L935.1 832.8 L939.5 830.2" fill="none" stroke="#2a36a8" stroke-width="2.4" stroke-linejoin="round"/></svg>
<div class="t" style="left:678.3px;top:791.8px;font-size:24.0px;color:#949494;font-weight:400;font-family:'Liberation Mono', monospace;-webkit-text-stroke:0.29px #949494;">5/19/2025 …</div>
<div class="t" style="left:678.3px;top:864.8px;font-size:24.5px;color:#b01e0a;font-weight:700;font-family:'Liberation Sans', sans-serif;transform:scaleX(0.897);">Phase1</div>
<div class="t" style="left:678.3px;top:913.8px;font-size:25.0px;color:#949494;font-weight:400;font-family:'Liberation Sans', sans-serif;transform:scaleX(0.902);">BA:PHASE.1</div>
<svg class="b" style="left:676.0px;top:952.0px;" width="168.0" height="58.0" viewBox="776.0 1012.0 168.0 58.0"><defs><linearGradient id="gph" x1="0" y1="0" x2="0" y2="1"><stop offset="0" stop-color="#b01e0a" stop-opacity="0.12"/><stop offset="1" stop-color="#b01e0a" stop-opacity="0"/></linearGradient></defs><path d="M778 1018 H818 V1064.5 H778 Z" fill="url(#gph)"/><path d="M778 1018 H818 V1064.5 H940" fill="none" stroke="#b8200c" stroke-width="2.6"/></svg>
<div class="t" style="left:678.3px;top:1021.8px;font-size:24.0px;color:#949494;font-weight:400;font-family:'Liberation Mono', monospace;-webkit-text-stroke:0.29px #949494;">5/19/2025 …</div>
<div class="b" style="left:1600.0px;top:240.6px;width:300.6px;height:197.4px;background:#fff;border:2px solid #e3e3e3;border-radius:6px;box-sizing:border-box;"></div>
<div class="t" style="left:1612.0px;top:269.2px;font-size:24.5px;color:#3e4c5b;font-weight:700;font-family:'Liberation Sans', sans-serif;transform:scaleX(0.932);">Temp Silo 2-D</div>
<div class="b" style="left:1590.0px;top:322.0px;width:294.0px;height:99.8px;background:#82c0fb;"></div>
<div class="b" style="left:1876.0px;top:322.0px;width:8.0px;height:85.0px;background:#7d9fc4;"></div>
<div class="t" style="left:1632.0px;top:340.4px;font-size:23.0px;color:#fff;font-weight:700;font-family:'Liberation Sans', sans-serif;transform:scaleX(0.995);">4.5</div>
<div class="t" style="left:1633.0px;top:393.3px;font-size:24.0px;color:#fff;font-weight:400;font-family:'Liberation Mono', monospace;-webkit-text-stroke:0.29px #fff;">5/19/2025 11:43…</div>
<div class="b" style="left:1910.9px;top:240.6px;width:615.6px;height:197.4px;background:#fff;border:2px solid #e3e3e3;border-radius:6px;box-sizing:border-box;"></div>
<div class="t" style="left:1928.0px;top:259.5px;font-size:50.0px;color:#0a5cb8;font-weight:700;font-family:'Liberation Sans', sans-serif;transform:scaleX(0.906);">4.5</div>
<svg class="b" style="left:1926.0px;top:320.0px;" width="586.0" height="100.0" viewBox="2026.0 380.0 586.0 100.0"><defs><linearGradient id="gl3" x1="0" y1="0" x2="0" y2="1"><stop offset="0" stop-color="#6d9ad8" stop-opacity="0.20"/><stop offset="1" stop-color="#6d9ad8" stop-opacity="0"/></linearGradient></defs><path d="M2029.4 436.2 L2034.9 437.0 L2040.4 436.5 L2045.9 436.4 L2051.4 436.1 L2056.9 435.1 L2062.3 435.7 L2067.8 434.7 L2073.3 436.1 L2078.8 436.2 L2084.3 435.3 L2089.8 436.4 L2095.3 436.0 L2100.8 435.9 L2106.3 436.8 L2111.8 436.0 L2116.9 435.6 L2122.1 435.8 L2127.2 435.9 L2132.3 436.6 L2137.5 436.7 L2142.6 435.5 L2147.8 436.0 L2152.9 435.5 L2158.2 436.5 L2163.4 435.9 L2168.7 436.6 L2173.9 435.3 L2179.1 436.8 L2184.4 435.6 L2189.6 436.9 L2194.9 435.9 L2200.1 435.7 L2205.3 436.3 L2210.6 436.8 L2216.8 434.3 L2222.9 432.9 L2229.1 430.9 L2235.3 428.9 L2240.8 426.6 L2246.3 423.4 L2251.8 421.6 L2257.9 416.5 L2264.1 414.1 L2270.3 409.6 L2276.5 405.9 L2282.0 404.2 L2287.4 402.3 L2292.9 400.0 L2299.1 397.1 L2305.3 395.6 L2311.5 392.6 L2317.6 390.1 L2323.1 393.0 L2328.6 394.8 L2334.1 396.2 L2339.6 398.3 L2345.1 400.5 L2350.6 402.5 L2355.7 403.8 L2360.9 404.9 L2366.0 406.7 L2371.2 409.0 L2376.3 409.9 L2381.5 411.7 L2386.6 412.6 L2391.8 413.5 L2397.2 417.3 L2402.7 419.9 L2408.2 423.8 L2414.0 426.1 L2419.8 428.4 L2425.5 430.5 L2431.3 432.3 L2437.1 434.3 L2442.1 435.3 L2447.1 437.1 L2452.1 439.2 L2457.2 440.4 L2462.2 440.7 L2467.2 442.0 L2472.3 444.0 L2477.3 445.6 L2482.3 446.5 L2487.5 448.6 L2492.6 449.8 L2497.8 451.1 L2502.9 451.7 L2508.1 452.4 L2513.2 452.8 L2518.4 453.9 L2523.5 455.0 L2528.7 456.3 L2533.8 455.8 L2539.0 457.0 L2544.1 458.1 L2549.3 457.9 L2554.4 459.2 L2559.5 459.4 L2564.7 459.5 L2569.8 460.7 L2575.0 460.2 L2580.1 461.9 L2585.3 462.4 L2593.5 470.8 L2601.8 470.1 L2607.9 464.5 L2607.9 480.0 L2029.4 480.0 Z" fill="url(#gl3)"/><path d="M2029.4 436.2 L2034.9 437.0 L2040.4 436.5 L2045.9 436.4 L2051.4 436.1 L2056.9 435.1 L2062.3 435.7 L2067.8 434.7 L2073.3 436.1 L2078.8 436.2 L2084.3 435.3 L2089.8 436.4 L2095.3 436.0 L2100.8 435.9 L2106.3 436.8 L2111.8 436.0 L2116.9 435.6 L2122.1 435.8 L2127.2 435.9 L2132.3 436.6 L2137.5 436.7 L2142.6 435.5 L2147.8 436.0 L2152.9 435.5 L2158.2 436.5 L2163.4 435.9 L2168.7 436.6 L2173.9 435.3 L2179.1 436.8 L2184.4 435.6 L2189.6 436.9 L2194.9 435.9 L2200.1 435.7 L2205.3 436.3 L2210.6 436.8 L2216.8 434.3 L2222.9 432.9 L2229.1 430.9 L2235.3 428.9 L2240.8 426.6 L2246.3 423.4 L2251.8 421.6 L2257.9 416.5 L2264.1 414.1 L2270.3 409.6 L2276.5 405.9 L2282.0 404.2 L2287.4 402.3 L2292.9 400.0 L2299.1 397.1 L2305.3 395.6 L2311.5 392.6 L2317.6 390.1 L2323.1 393.0 L2328.6 394.8 L2334.1 396.2 L2339.6 398.3 L2345.1 400.5 L2350.6 402.5 L2355.7 403.8 L2360.9 404.9 L2366.0 406.7 L2371.2 409.0 L2376.3 409.9 L2381.5 411.7 L2386.6 412.6 L2391.8 413.5 L2397.2 417.3 L2402.7 419.9 L2408.2 423.8 L2414.0 426.1 L2419.8 428.4 L2425.5 430.5 L2431.3 432.3 L2437.1 434.3 L2442.1 435.3 L2447.1 437.1 L2452.1 439.2 L2457.2 440.4 L2462.2 440.7 L2467.2 442.0 L2472.3 444.0 L2477.3 445.6 L2482.3 446.5 L2487.5 448.6 L2492.6 449.8 L2497.8 451.1 L2502.9 451.7 L2508.1 452.4 L2513.2 452.8 L2518.4 453.9 L2523.5 455.0 L2528.7 456.3 L2533.8 455.8 L2539.0 457.0 L2544.1 458.1 L2549.3 457.9 L2554.4 459.2 L2559.5 459.4 L2564.7 459.5 L2569.8 460.7 L2575.0 460.2 L2580.1 461.9 L2585.3 462.4 L2593.5 470.8 L2601.8 470.1 L2607.9 464.5" fill="none" stroke="#1565c0" stroke-width="2.4" stroke-linejoin="round"/></svg>
<div class="b" style="left:2501.8px;top:258.0px;width:8.2px;height:133.6px;background:#bdbdbd;"></div>
<div class="b" style="left:2551.0px;top:240.0px;width:9.0px;height:1232.0px;background:#c1c1c1;"></div>
<div class="b" style="left:1600.0px;top:449.0px;width:927.0px;height:615.7px;background:#fff;border:2px solid #e3e3e3;border-radius:6px;box-sizing:border-box;"></div>
<div class="t" style="left:1612.0px;top:469.5px;font-size:24.5px;color:#3e4c5b;font-weight:700;font-family:'Liberation Sans', sans-serif;transform:scaleX(0.930);">Silo 14.c</div>
<div class="t" style="left:1613.0px;top:498.0px;font-size:23.0px;color:#a0a0a0;font-weight:400;font-family:'Liberation Sans', sans-serif;transform:scaleX(0.843);">Last 1 day</div>
<div class="b" style="left:1677.7px;top:572.8px;width:83.7px;height:47.8px;background:#fff;border:2px solid #dedede;border-radius:6px;box-sizing:border-box;"></div>
<svg class="b" style="left:1684.0px;top:586.0px;" width="22.0" height="22.0" viewBox="1784.0 646.0 22.0 22.0"><circle cx="1795.5" cy="656.7" r="10" fill="#5a0b8c"/></svg>
<div class="t" style="left:1714.0px;top:584.8px;font-size:22.0px;color:#333;font-weight:400;font-family:'Liberation Sans', sans-serif;transform:scaleX(0.862);">CBX</div>
<div class="b" style="left:1677.7px;top:798.8px;width:143.3px;height:48.2px;background:#fff;border:2px solid #dedede;border-radius:6px;box-sizing:border-box;"></div>
<svg class="b" style="left:1684.0px;top:812.0px;" width="22.0" height="22.0" viewBox="1784.0 872.0 22.0 22.0"><circle cx="1795.5" cy="882.5" r="10" fill="#2e8a0e"/></svg>
<div class="t" style="left:1714.0px;top:810.8px;font-size:22.0px;color:#333;font-weight:400;font-family:'Liberation Sans', sans-serif;transform:scaleX(0.874);">BA:TEMP.1</div>
<svg class="b" style="left:1660.0px;top:630.0px;" width="852.0" height="156.0" viewBox="1760.0 690.0 852.0 156.0"><path d="M1777.7 781.3 L1778.7 774.4 L1779.7 776.9 L1780.7 779.7 L1781.7 777.3 L1782.7 771.9 L1783.7 774.1 L1784.7 770.6 L1785.7 770.7 L1786.7 767.4 L1787.7 769.6 L1788.7 766.0 L1789.7 758.3 L1790.7 751.2 L1791.7 741.1 L1792.7 733.5 L1793.7 721.7 L1794.7 716.7 L1795.7 713.0 L1796.7 713.3 L1797.7 714.4 L1798.7 715.0 L1799.7 714.2 L1800.7 710.2 L1801.7 708.2 L1802.7 709.1 L1803.7 707.3 L1804.7 709.1 L1805.7 709.6 L1806.7 842.3 L1806.7 842.3 L1807.7 842.3 L1808.7 842.3 L1809.7 842.3 L1810.7 842.3 L1811.7 842.3 L1812.7 842.3 L1813.7 838.4 L1814.7 832.2 L1815.7 825.5 L1816.7 817.5 L1817.7 814.3 L1818.7 807.3 L1819.7 797.4 L1820.7 791.0 L1821.7 789.7 L1822.7 780.7 L1823.7 776.1 L1824.7 776.2 L1825.7 777.0 L1826.7 774.5 L1827.7 769.9 L1828.7 771.6 L1829.7 769.9 L1830.7 767.8 L1831.7 767.7 L1832.7 769.8 L1833.7 771.8 L1834.7 768.3 L1835.7 763.6 L1836.7 755.2 L1837.7 746.7 L1838.7 743.2 L1839.7 732.9 L1840.7 726.8 L1841.7 722.0 L1842.7 724.0 L1843.7 723.0 L1844.7 720.4 L1845.7 722.5 L1846.7 719.2 L1847.7 715.6 L1848.7 716.7 L1849.7 717.6 L1850.7 714.3 L1851.7 715.9 L1852.7 711.1 L1853.7 842.3 L1853.7 842.3 L1854.7 842.3 L1855.7 842.3 L1856.7 842.3 L1857.7 842.3 L1858.7 842.3 L1859.7 841.6 L1860.7 839.2 L1861.7 830.4 L1862.7 823.0 L1863.7 821.2 L1864.7 810.4 L1865.7 808.3 L1866.7 799.7 L1867.7 796.9 L1868.7 788.3 L1869.7 783.6 L1870.7 780.5 L1871.7 776.3 L1872.7 778.5 L1873.7 774.7 L1874.7 773.3 L1875.7 776.9 L1876.7 777.4 L1877.7 777.0 L1878.7 772.2 L1879.7 767.8 L1880.7 772.0 L1881.7 768.8 L1882.7 764.2 L1883.7 756.4 L1884.7 746.9 L1885.7 736.6 L1886.7 733.7 L1887.7 726.3 L1888.7 722.3 L1889.7 721.5 L1890.7 716.3 L1891.7 716.2 L1892.7 717.9 L1893.7 713.2 L1894.7 711.7 L1895.7 715.3 L1896.7 710.9 L1897.7 708.9 L1898.7 712.8 L1899.7 706.4 L1900.7 842.3 L1900.7 842.3 L1901.7 842.3 L1902.7 842.3 L1903.7 842.3 L1904.7 842.3 L1905.7 842.3 L1906.7 839.7 L1907.7 829.0 L1908.7 828.4 L1909.7 821.9 L1910.7 812.5 L1911.7 802.5 L1912.7 793.2 L1913.7 790.4 L1914.7 780.7 L1915.7 778.5 L1916.7 766.6 L1917.7 766.1 L1918.7 769.3 L1919.7 763.3 L1920.7 761.9 L1921.7 763.0 L1922.7 765.8 L1923.7 758.3 L1924.7 759.0 L1925.7 761.6 L1926.7 760.1 L1927.7 759.7 L1928.7 757.8 L1929.7 754.2 L1930.7 742.6 L1931.7 735.1 L1932.7 733.0 L1933.7 718.7 L1934.7 713.5 L1935.7 710.9 L1936.7 710.8 L1937.7 712.0 L1938.7 708.7 L1939.7 705.9 L1940.7 710.3 L1941.7 705.2 L1942.7 706.3 L1943.7 705.7 L1944.7 705.1 L1945.7 701.8 L1946.7 704.4 L1947.7 842.3 L1947.7 842.3 L1948.7 842.3 L1949.7 842.3 L1950.7 842.3 L1951.7 842.3 L1952.7 842.3 L1953.7 835.6 L1954.7 829.2 L1955.7 828.4 L1956.7 815.6 L1957.7 814.0 L1958.7 805.7 L1959.7 797.9 L1960.7 793.1 L1961.7 789.3 L1962.7 776.3 L1963.7 776.2 L1964.7 775.1 L1965.7 769.7 L1966.7 772.4 L1967.7 767.4 L1968.7 767.9 L1969.7 770.4 L1970.7 771.6 L1971.7 763.5 L1972.7 769.3 L1973.7 763.6 L1974.7 764.5 L1975.7 761.6 L1976.7 755.6 L1977.7 748.3 L1978.7 741.8 L1979.7 731.8 L1980.7 729.5 L1981.7 722.3 L1982.7 717.6 L1983.7 719.7 L1984.7 716.5 L1985.7 716.4 L1986.7 715.0 L1987.7 714.8 L1988.7 711.4 L1989.7 713.6 L1990.7 709.7 L1991.7 712.1 L1992.7 711.3 L1993.7 842.3 L1993.7 842.3 L1994.7 842.3 L1995.7 842.3 L1996.7 842.3 L1997.7 842.3 L1998.7 842.3 L1999.7 842.3 L2000.7 840.9 L2001.7 835.2 L2002.7 830.6 L2003.7 822.2 L2004.7 815.3 L2005.7 814.6 L2006.7 809.2 L2007.7 802.0 L2008.7 795.0 L2009.7 787.8 L2010.7 788.2 L2011.7 789.2 L2012.7 789.8 L2013.7 788.2 L2014.7 787.1 L2015.7 786.6 L2016.7 787.1 L2017.7 782.2 L2018.7 783.4 L2019.7 777.1 L2020.7 779.5 L2021.7 777.6 L2022.7 780.7 L2023.7 766.7 L2024.7 761.4 L2025.7 750.2 L2026.7 744.3 L2027.7 736.9 L2028.7 732.2 L2029.7 733.2 L2030.7 733.3 L2031.7 725.4 L2032.7 728.0 L2033.7 724.4 L2034.7 726.7 L2035.7 728.2 L2036.7 722.9 L2037.7 726.4 L2038.7 724.7 L2039.7 720.5 L2040.7 842.3 L2040.7 842.3 L2041.7 842.3 L2042.7 842.3 L2043.7 842.3 L2044.7 842.3 L2045.7 842.3 L2046.7 841.9 L2047.7 837.9 L2048.7 827.1 L2049.7 828.5 L2050.7 818.0 L2051.7 813.8 L2052.7 806.9 L2053.7 805.9 L2054.7 798.1 L2055.7 793.2 L2056.7 787.9 L2057.7 782.4 L2058.7 780.6 L2059.7 785.0 L2060.7 781.7 L2061.7 781.0 L2062.7 779.1 L2063.7 776.7 L2064.7 781.6 L2065.7 780.7 L2066.7 776.4 L2067.7 779.4 L2068.7 778.5 L2069.7 776.4 L2070.7 769.8 L2071.7 759.2 L2072.7 751.0 L2073.7 746.1 L2074.7 739.4 L2075.7 732.9 L2076.7 732.0 L2077.7 732.9 L2078.7 730.1 L2079.7 727.3 L2080.7 727.4 L2081.7 727.7 L2082.7 726.4 L2083.7 723.3 L2084.7 726.3 L2085.7 724.4 L2086.7 722.6 L2087.7 842.3 L2087.7 842.3 L2088.7 842.3 L2089.7 842.3 L2090.7 842.3 L2091.7 842.3 L2092.7 842.3 L2093.7 840.3 L2094.7 830.8 L2095.7 825.1 L2096.7 824.7 L2097.7 817.6 L2098.7 810.2 L2099.7 800.5 L2100.7 795.6 L2101.7 791.5 L2102.7 786.4 L2103.7 775.8 L2104.7 774.5 L2105.7 771.8 L2106.7 774.4 L2107.7 773.6 L2108.7 775.9 L2109.7 775.4 L2110.7 771.5 L2111.7 771.6 L2112.7 771.3 L2113.7 771.7 L2114.7 764.1 L2115.7 764.2 L2116.7 761.6 L2117.7 751.0 L2118.7 743.0 L2119.7 737.8 L2120.7 733.3 L2121.7 727.3 L2122.7 720.4 L2123.7 721.6 L2124.7 719.3 L2125.7 716.2 L2126.7 720.9 L2127.7 716.8 L2128.7 715.5 L2129.7 715.6 L2130.7 717.7 L2131.7 714.7 L2132.7 713.9 L2133.7 710.3 L2134.7 842.3 L2134.7 842.3 L2135.7 842.3 L2136.7 842.3 L2137.7 842.3 L2138.7 842.3 L2139.7 842.3 L2140.7 836.5 L2141.7 835.1 L2142.7 826.9 L2143.7 824.5 L2144.7 814.0 L2145.7 809.6 L2146.7 806.2 L2147.7 801.5 L2148.7 797.1 L2149.7 791.6 L2150.7 782.0 L2151.7 785.5 L2152.7 783.8 L2153.7 779.3 L2154.7 781.0 L2155.7 781.1 L2156.7 781.3 L2157.7 782.2 L2158.7 780.0 L2159.7 776.1 L2160.7 776.3 L2161.7 774.4 L2162.7 777.8 L2163.7 768.5 L2164.7 757.4 L2165.7 752.9 L2166.7 742.7 L2167.7 738.9 L2168.7 725.4 L2169.7 727.3 L2170.7 729.1 L2171.7 728.8 L2172.7 724.8 L2173.7 723.8 L2174.7 726.3 L2175.7 718.4 L2176.7 718.1 L2177.7 720.6 L2178.7 722.2 L2179.7 715.7 L2180.7 842.3 L2180.7 842.3 L2181.7 842.3 L2182.7 842.3 L2183.7 842.3 L2184.7 842.3 L2185.7 842.3 L2186.7 842.3 L2187.7 837.5 L2188.7 829.8 L2189.7 825.4 L2190.7 821.2 L2191.7 810.8 L2192.7 803.7 L2193.7 803.4 L2194.7 795.0 L2195.7 790.2 L2196.7 780.1 L2197.7 779.4 L2198.7 775.7 L2199.7 775.0 L2200.7 778.7 L2201.7 773.9 L2202.7 775.9 L2203.7 771.1 L2204.7 773.5 L2205.7 770.3 L2206.7 773.6 L2207.7 772.6 L2208.7 769.6 L2209.7 765.3 L2210.7 761.6 L2211.7 756.5 L2212.7 745.8 L2213.7 739.6 L2214.7 730.4 L2215.7 725.5 L2216.7 725.2 L2217.7 725.3 L2218.7 725.3 L2219.7 720.4 L2220.7 720.4 L2221.7 722.1 L2222.7 716.9 L2223.7 721.6 L2224.7 715.2 L2225.7 714.5 L2226.7 712.7 L2227.7 842.3 L2227.7 842.3 L2228.7 842.3 L2229.7 842.3 L2230.7 842.3 L2231.7 842.3 L2232.7 842.3 L2233.7 842.1 L2234.7 837.5 L2235.7 829.9 L2236.7 823.3 L2237.7 816.6 L2238.7 814.9 L2239.7 813.0 L2240.7 803.9 L2241.7 797.8 L2242.7 790.2 L2243.7 784.7 L2244.7 785.7 L2245.7 784.2 L2246.7 783.9 L2247.7 781.0 L2248.7 782.6 L2249.7 779.8 L2250.7 782.9 L2251.7 779.6 L2252.7 774.9 L2253.7 778.9 L2254.7 775.3 L2255.7 774.8 L2256.7 770.4 L2257.7 762.2 L2258.7 753.9 L2259.7 749.4 L2260.7 741.7 L2261.7 730.4 L2262.7 726.6 L2263.7 724.7 L2264.7 730.2 L2265.7 729.0 L2266.7 723.7 L2267.7 720.5 L2268.7 718.9 L2269.7 719.8 L2270.7 721.3 L2271.7 722.9 L2272.7 717.8 L2273.7 715.0 L2274.7 842.3 L2274.7 842.3 L2275.7 842.3 L2276.7 842.3 L2277.7 842.3 L2278.7 842.3 L2279.7 842.3 L2280.7 840.5 L2281.7 834.7 L2282.7 826.4 L2283.7 818.5 L2284.7 818.8 L2285.7 806.7 L2286.7 804.3 L2287.7 797.4 L2288.7 792.8 L2289.7 783.5 L2290.7 777.0 L2291.7 773.8 L2292.7 777.8 L2293.7 777.7 L2294.7 770.7 L2295.7 771.8 L2296.7 773.9 L2297.7 767.9 L2298.7 773.0 L2299.7 769.7 L2300.7 770.4 L2301.7 769.6 L2302.7 770.6 L2303.7 760.7 L2304.7 753.3 L2305.7 748.4 L2306.7 745.8 L2307.7 737.0 L2308.7 731.1 L2309.7 727.7 L2310.7 726.3 L2311.7 727.0 L2312.7 727.4 L2313.7 721.8 L2314.7 725.8 L2315.7 723.4 L2316.7 721.6 L2317.7 722.6 L2318.7 719.0 L2319.7 718.0 L2320.7 713.8 L2321.7 842.3 L2321.7 842.3 L2322.7 842.3 L2323.7 842.3 L2324.7 842.3 L2325.7 842.3 L2326.7 842.3 L2327.7 840.6 L2328.7 829.0 L2329.7 825.2 L2330.7 821.8 L2331.7 813.3 L2332.7 806.1 L2333.7 799.3 L2334.7 798.4 L2335.7 787.8 L2336.7 782.3 L2337.7 773.6 L2338.7 777.5 L2339.7 772.7 L2340.7 773.4 L2341.7 774.5 L2342.7 771.5 L2343.7 770.8 L2344.7 769.5 L2345.7 768.3 L2346.7 767.9 L2347.7 765.7 L2348.7 766.5 L2349.7 763.5 L2350.7 759.5 L2351.7 754.5 L2352.7 745.8 L2353.7 737.0 L2354.7 728.1 L2355.7 726.3 L2356.7 723.8 L2357.7 719.3 L2358.7 722.7 L2359.7 722.1 L2360.7 718.0 L2361.7 713.6 L2362.7 716.1 L2363.7 712.1 L2364.7 711.8 L2365.7 715.3 L2366.7 709.9 L2367.7 711.6 L2368.7 842.3 L2368.7 842.3 L2369.7 842.3 L2370.7 842.3 L2371.7 842.3 L2372.7 842.3 L2373.7 842.3 L2374.7 835.1 L2375.7 829.3 L2376.7 826.1 L2377.7 821.6 L2378.7 808.7 L2379.7 808.8 L2380.7 796.1 L2381.7 790.6 L2382.7 785.3 L2383.7 777.0 L2384.7 772.9 L2385.7 773.3 L2386.7 775.9 L2387.7 771.8 L2388.7 776.9 L2389.7 772.0 L2390.7 771.8 L2391.7 769.3 L2392.7 768.5 L2393.7 768.3 L2394.7 765.6 L2395.7 763.9 L2396.7 769.5 L2397.7 761.4 L2398.7 755.9 L2399.7 742.1 L2400.7 737.4 L2401.7 727.5 L2402.7 728.1 L2403.7 728.3 L2404.7 721.4 L2405.7 719.8 L2406.7 723.5 L2407.7 721.7 L2408.7 722.8 L2409.7 715.6 L2410.7 719.6 L2411.7 717.2 L2412.7 719.2 L2413.7 712.1 L2414.7 842.3 L2414.7 842.3 L2415.7 842.3 L2416.7 842.3 L2417.7 842.3 L2418.7 842.3 L2419.7 842.3 L2420.7 842.3 L2421.7 839.4 L2422.7 831.2 L2423.7 823.8 L2424.7 817.5 L2425.7 810.2 L2426.7 808.5 L2427.7 800.3 L2428.7 799.1 L2429.7 791.4 L2430.7 788.1 L2431.7 782.4 L2432.7 782.1 L2433.7 777.1 L2434.7 783.4 L2435.7 779.9 L2436.7 778.5 L2437.7 773.8 L2438.7 773.6 L2439.7 778.7 L2440.7 773.3 L2441.7 773.5 L2442.7 769.3 L2443.7 771.5 L2444.7 762.4 L2445.7 755.3 L2446.7 747.1 L2447.7 732.7 L2448.7 727.0 L2449.7 721.4 L2450.7 720.6 L2451.7 720.0 L2452.7 723.5 L2453.7 716.6 L2454.7 719.8 L2455.7 719.7 L2456.7 715.3 L2457.7 718.2 L2458.7 711.8 L2459.7 715.2 L2460.7 714.1 L2461.7 842.3 L2461.7 842.3 L2462.7 842.3 L2463.7 842.3 L2464.7 842.3 L2465.7 842.3 L2466.7 842.3 L2467.7 840.8 L2468.7 831.6 L2469.7 829.5 L2470.7 824.6 L2471.7 812.5 L2472.7 813.1 L2473.7 800.2 L2474.7 799.4 L2475.7 793.2 L2476.7 786.0 L2477.7 780.2 L2478.7 774.9 L2479.7 779.0 L2480.7 778.2 L2481.7 771.4 L2482.7 774.8 L2483.7 773.3 L2484.7 773.6 L2485.7 773.7 L2486.7 767.5 L2487.7 768.4 L2488.7 765.8 L2489.7 767.1 L2490.7 761.2 L2491.7 756.6 L2492.7 753.1 L2493.7 743.4 L2494.7 733.4 L2495.7 733.7 L2496.7 726.2 L2497.7 724.6 L2498.7 726.3 L2499.7 725.8 L2500.7 720.9 L2501.7 726.9 L2502.7 722.7 L2503.7 722.3 L2504.7 719.1 L2505.7 719.7 L2506.7 715.5 L2507.7 720.9 L2508.7 842.3 L2508.7 842.3 L2509.7 842.3 L2510.7 842.3 L2511.7 842.3 L2512.7 842.3 L2513.7 842.3 L2514.7 842.5 L2515.7 832.1 L2516.7 830.0 L2517.7 822.1 L2518.7 813.0 L2519.7 807.4 L2520.7 802.8 L2521.7 791.3 L2522.7 788.6 L2523.7 782.9 L2524.7 776.0 L2525.7 779.0 L2526.7 773.5 L2527.7 771.5 L2528.7 772.2 L2529.7 770.5 L2530.7 770.0 L2531.7 773.1 L2532.7 770.4 L2533.7 771.3 L2534.7 769.6 L2535.7 767.9 L2536.7 767.3 L2537.7 764.1 L2538.7 753.9 L2539.7 744.3 L2540.7 738.9 L2541.7 732.9 L2542.7 719.9 L2543.7 725.6 L2544.7 718.7 L2545.7 723.4 L2546.7 722.4 L2547.7 716.5 L2548.7 714.9 L2549.7 715.9 L2550.7 714.7 L2551.7 713.9 L2552.7 714.7 L2553.7 715.4 L2554.7 712.6 L2555.7 842.3 L2555.7 842.3 L2556.7 842.3 L2557.7 842.3 L2558.7 842.3 L2559.7 842.3 L2560.7 842.3 L2561.7 836.3 L2562.7 829.0 L2563.7 821.5 L2564.7 816.1 L2565.7 807.6 L2566.7 803.8 L2567.7 799.1 L2568.7 790.8 L2569.7 787.0 L2570.7 777.0 L2571.7 775.7 L2572.7 775.8 L2573.7 769.2 L2574.7 772.1 L2575.7 768.2 L2576.7 768.8 L2577.7 766.2 L2578.7 765.0 L2579.7 763.2 L2580.7 763.6 L2581.7 764.3 L2582.7 763.2 L2583.7 767.2 L2584.7 753.4 L2585.7 747.0 L2586.7 744.2 L2587.7 737.7 L2588.7 726.5 L2589.7 724.4 L2590.7 723.2 L2591.7 724.8 L2592.7 717.2 L2593.7 718.5 L2594.7 718.8 L2595.7 719.9 L2596.7 715.1 L2597.7 718.8 L2598.7 712.3 L2599.7 715.4 L2600.7 712.8 L2601.7 842.3 L2601.7 842.3 L2602.7 842.3 L2603.7 842.3 L2604.7 840.0 L2605.7 838.0 L2606.7 834.5 L2607.7 828.5 L2608.7 824.8 L2608.7 842.3 L1777.7 842.3 Z" fill="#f3eef8"/><path d="M1777.7 781.3 L1778.7 774.4 L1779.7 776.9 L1780.7 779.7 L1781.7 777.3 L1782.7 771.9 L1783.7 774.1 L1784.7 770.6 L1785.7 770.7 L1786.7 767.4 L1787.7 769.6 L1788.7 766.0 L1789.7 758.3 L1790.7 751.2 L1791.7 741.1 L1792.7 733.5 L1793.7 721.7 L1794.7 716.7 L1795.7 713.0 L1796.7 713.3 L1797.7 714.4 L1798.7 715.0 L1799.7 714.2 L1800.7 710.2 L1801.7 708.2 L1802.7 709.1 L1803.7 707.3 L1804.7 709.1 L1805.7 709.6 L1806.7 842.3 L1806.7 842.3 L1807.7 842.3 L1808.7 842.3 L1809.7 842.3 L1810.7 842.3 L1811.7 842.3 L1812.7 842.3 L1813.7 838.4 L1814.7 832.2 L1815.7 825.5 L1816.7 817.5 L1817.7 814.3 L1818.7 807.3 L1819.7 797.4 L1820.7 791.0 L1821.7 789.7 L1822.7 780.7 L1823.7 776.1 L1824.7 776.2 L1825.7 777.0 L1826.7 774.5 L1827.7 769.9 L1828.7 771.6 L1829.7 769.9 L1830.7 767.8 L1831.7 767.7 L1832.7 769.8 L1833.7 771.8 L1834.7 768.3 L1835.7 763.6 L1836.7 755.2 L1837.7 746.7 L1838.7 743.2 L1839.7 732.9 L1840.7 726.8 L1841.7 722.0 L1842.7 724.0 L1843.7 723.0 L1844.7 720.4 L1845.7 722.5 L1846.7 719.2 L1847.7 715.6 L1848.7 716.7 L1849.7 717.6 L1850.7 714.3 L1851.7 715.9 L1852.7 711.1 L1853.7 842.3 L1853.7 842.3 L1854.7 842.3 L1855.7 842.3 L1856.7 842.3 L1857.7 842.3 L1858.7 842.3 L1859.7 841.6 L1860.7 839.2 L1861.7 830.4 L1862.7 823.0 L1863.7 821.2 L1864.7 810.4 L1865.7 808.3 L1866.7 799.7 L1867.7 796.9 L1868.7 788.3 L1869.7 783.6 L1870.7 780.5 L1871.7 776.3 L1872.7 778.5 L1873.7 774.7 L1874.7 773.3 L1875.7 776.9 L1876.7 777.4 L1877.7 777.0 L1878.7 772.2 L1879.7 767.8 L1880.7 772.0 L1881.7 768.8 L1882.7 764.2 L1883.7 756.4 L1884.7 746.9 L1885.7 736.6 L1886.7 733.7 L1887.7 726.3 L1888.7 722.3 L1889.7 721.5 L1890.7 716.3 L1891.7 716.2 L1892.7 717.9 L1893.7 713.2 L1894.7 711.7 L1895.7 715.3 L1896.7 710.9 L1897.7 708.9 L1898.7 712.8 L1899.7 706.4 L1900.7 842.3 L1900.7 842.3 L1901.7 842.3 L1902.7 842.3 L1903.7 842.3 L1904.7 842.3 L1905.7 842.3 L1906.7 839.7 L1907.7 829.0 L1908.7 828.4 L1909.7 821.9 L1910.7 812.5 L1911.7 802.5 L1912.7 793.2 L1913.7 790.4 L1914.7 780.7 L1915.7 778.5 L1916.7 766.6 L1917.7 766.1 L1918.7 769.3 L1919.7 763.3 L1920.7 761.9 L1921.7 763.0 L1922.7 765.8 L1923.7 758.3 L1924.7 759.0 L1925.7 761.6 L1926.7 760.1 L1927.7 759.7 L1928.7 757.8 L1929.7 754.2 L1930.7 742.6 L1931.7 735.1 L1932.7 733.0 L1933.7 718.7 L1934.7 713.5 L1935.7 710.9 L1936.7 710.8 L1937.7 712.0 L1938.7 708.7 L1939.7 705.9 L1940.7 710.3 L1941.7 705.2 L1942.7 706.3 L1943.7 705.7 L1944.7 705.1 L1945.7 701.8 L1946.7 704.4 L1947.7 842.3 L1947.7 842.3 L1948.7 842.3 L1949.7 842.3 L1950.7 842.3 L1951.7 842.3 L1952.7 842.3 L1953.7 835.6 L1954.7 829.2 L1955.7 828.4 L1956.7 815.6 L1957.7 814.0 L1958.7 805.7 L1959.7 797.9 L1960.7 793.1 L1961.7 789.3 L1962.7 776.3 L1963.7 776.2 L1964.7 775.1 L1965.7 769.7 L1966.7 772.4 L1967.7 767.4 L1968.7 767.9 L1969.7 770.4 L1970.7 771.6 L1971.7 763.5 L1972.7 769.3 L1973.7 763.6 L1974.7 764.5 L1975.7 761.6 L1976.7 755.6 L1977.7 748.3 L1978.7 741.8 L1979.7 731.8 L1980.7 729.5 L1981.7 722.3 L1982.7 717.6 L1983.7 719.7 L1984.7 716.5 L1985.7 716.4 L1986.7 715.0 L1987.7 714.8 L1988.7 711.4 L1989.7 713.6 L1990.7 709.7 L1991.7 712.1 L1992.7 711.3 L1993.7 842.3 L1993.7 842.3 L1994.7 842.3 L1995.7 842.3 L1996.7 842.3 L1997.7 842.3 L1998.7 842.3 L1999.7 842.3 L2000.7 840.9 L2001.7 835.2 L2002.7 830.6 L2003.7 822.2 L2004.7 815.3 L2005.7 814.6 L2006.7 809.2 L2007.7 802.0 L2008.7 795.0 L2009.7 787.8 L2010.7 788.2 L2011.7 789.2 L2012.7 789.8 L2013.7 788.2 L2014.7 787.1 L2015.7 786.6 L2016.7 787.1 L2017.7 782.2 L2018.7 783.4 L2019.7 777.1 L2020.7 779.5 L2021.7 777.6 L2022.7 780.7 L2023.7 766.7 L2024.7 761.4 L2025.7 750.2 L2026.7 744.3 L2027.7 736.9 L2028.7 732.2 L2029.7 733.2 L2030.7 733.3 L2031.7 725.4 L2032.7 728.0 L2033.7 724.4 L2034.7 726.7 L2035.7 728.2 L2036.7 722.9 L2037.7 726.4 L2038.7 724.7 L2039.7 720.5 L2040.7 842.3 L2040.7 842.3 L2041.7 842.3 L2042.7 842.3 L2043.7 842.3 L2044.7 842.3 L2045.7 842.3 L2046.7 841.9 L2047.7 837.9 L2048.7 827.1 L2049.7 828.5 L2050.7 818.0 L2051.7 813.8 L2052.7 806.9 L2053.7 805.9 L2054.7 798.1 L2055.7 793.2 L2056.7 787.9 L2057.7 782.4 L2058.7 780.6 L2059.7 785.0 L2060.7 781.7 L2061.7 781.0 L2062.7 779.1 L2063.7 776.7 L2064.7 781.6 L2065.7 780.7 L2066.7 776.4 L2067.7 779.4 L2068.7 778.5 L2069.7 776.4 L2070.7 769.8 L2071.7 759.2 L2072.7 751.0 L2073.7 746.1 L2074.7 739.4 L2075.7 732.9 L2076.7 732.0 L2077.7 732.9 L2078.7 730.1 L2079.7 727.3 L2080.7 727.4 L2081.7 727.7 L2082.7 726.4 L2083.7 723.3 L2084.7 726.3 L2085.7 724.4 L2086.7 722.6 L2087.7 842.3 L2087.7 842.3 L2088.7 842.3 L2089.7 842.3 L2090.7 842.3 L2091.7 842.3 L2092.7 842.3 L2093.7 840.3 L2094.7 830.8 L2095.7 825.1 L2096.7 824.7 L2097.7 817.6 L2098.7 810.2 L2099.7 800.5 L2100.7 795.6 L2101.7 791.5 L2102.7 786.4 L2103.7 775.8 L2104.7 774.5 L2105.7 771.8 L2106.7 774.4 L2107.7 773.6 L2108.7 775.9 L2109.7 775.4 L2110.7 771.5 L2111.7 771.6 L2112.7 771.3 L2113.7 771.7 L2114.7 764.1 L2115.7 764.2 L2116.7 761.6 L2117.7 751.0 L2118.7 743.0 L2119.7 737.8 L2120.7 733.3 L2121.7 727.3 L2122.7 720.4 L2123.7 721.6 L2124.7 719.3 L2125.7 716.2 L2126.7 720.9 L2127.7 716.8 L2128.7 715.5 L2129.7 715.6 L2130.7 717.7 L2131.7 714.7 L2132.7 713.9 L2133.7 710.3 L2134.7 842.3 L2134.7 842.3 L2135.7 842.3 L2136.7 842.3 L2137.7 842.3 L2138.7 842.3 L2139.7 842.3 L2140.7 836.5 L2141.7 835.1 L2142.7 826.9 L2143.7 824.5 L2144.7 814.0 L2145.7 809.6 L2146.7 806.2 L2147.7 801.5 L2148.7 797.1 L2149.7 791.6 L2150.7 782.0 L2151.7 785.5 L2152.7 783.8 L2153.7 779.3 L2154.7 781.0 L2155.7 781.1 L2156.7 781.3 L2157.7 782.2 L2158.7 780.0 L2159.7 776.1 L2160.7 776.3 L2161.7 774.4 L2162.7 777.8 L2163.7 768.5 L2164.7 757.4 L2165.7 752.9 L2166.7 742.7 L2167.7 738.9 L2168.7 725.4 L2169.7 727.3 L2170.7 729.1 L2171.7 728.8 L2172.7 724.8 L2173.7 723.8 L2174.7 726.3 L2175.7 718.4 L2176.7 718.1 L2177.7 720.6 L2178.7 722.2 L2179.7 715.7 L2180.7 842.3 L2180.7 842.3 L2181.7 842.3 L2182.7 842.3 L2183.7 842.3 L2184.7 842.3 L2185.7 842.3 L2186.7 842.3 L2187.7 837.5 L2188.7 829.8 L2189.7 825.4 L2190.7 821.2 L2191.7 810.8 L2192.7 803.7 L2193.7 803.4 L2194.7 795.0 L2195.7 790.2 L2196.7 780.1 L2197.7 779.4 L2198.7 775.7 L2199.7 775.0 L2200.7 778.7 L2201.7 773.9 L2202.7 775.9 L2203.7 771.1 L2204.7 773.5 L2205.7 770.3 L2206.7 773.6 L2207.7 772.6 L2208.7 769.6 L2209.7 765.3 L2210.7 761.6 L2211.7 756.5 L2212.7 745.8 L2213.7 739.6 L2214.7 730.4 L2215.7 725.5 L2216.7 725.2 L2217.7 725.3 L2218.7 725.3 L2219.7 720.4 L2220.7 720.4 L2221.7 722.1 L2222.7 716.9 L2223.7 721.6 L2224.7 715.2 L2225.7 714.5 L2226.7 712.7 L2227.7 842.3 L2227.7 842.3 L2228.7 842.3 L2229.7 842.3 L2230.7 842.3 L2231.7 842.3 L2232.7 842.3 L2233.7 842.1 L2234.7 837.5 L2235.7 829.9 L2236.7 823.3 L2237.7 816.6 L2238.7 814.9 L2239.7 813.0 L2240.7 803.9 L2241.7 797.8 L2242.7 790.2 L2243.7 784.7 L2244.7 785.7 L2245.7 784.2 L2246.7 783.9 L2247.7 781.0 L2248.7 782.6 L2249.7 779.8 L2250.7 782.9 L2251.7 779.6 L2252.7 774.9 L2253.7 778.9 L2254.7 775.3 L2255.7 774.8 L2256.7 770.4 L2257.7 762.2 L2258.7 753.9 L2259.7 749.4 L2260.7 741.7 L2261.7 730.4 L2262.7 726.6 L2263.7 724.7 L2264.7 730.2 L2265.7 729.0 L2266.7 723.7 L2267.7 720.5 L2268.7 718.9 L2269.7 719.8 L2270.7 721.3 L2271.7 722.9 L2272.7 717.8 L2273.7 715.0 L2274.7 842.3 L2274.7 842.3 L2275.7 842.3 L2276.7 842.3 L2277.7 842.3 L2278.7 842.3 L2279.7 842.3 L2280.7 840.5 L2281.7 834.7 L2282.7 826.4 L2283.7 818.5 L2284.7 818.8 L2285.7 806.7 L2286.7 804.3 L2287.7 797.4 L2288.7 792.8 L2289.7 783.5 L2290.7 777.0 L2291.7 773.8 L2292.7 777.8 L2293.7 777.7 L2294.7 770.7 L2295.7 771.8 L2296.7 773.9 L2297.7 767.9 L2298.7 773.0 L2299.7 769.7 L2300.7 770.4 L2301.7 769.6 L2302.7 770.6 L2303.7 760.7 L2304.7 753.3 L2305.7 748.4 L2306.7 745.8 L2307.7 737.0 L2308.7 731.1 L2309.7 727.7 L2310.7 726.3 L2311.7 727.0 L2312.7 727.4 L2313.7 721.8 L2314.7 725.8 L2315.7 723.4 L2316.7 721.6 L2317.7 722.6 L2318.7 719.0 L2319.7 718.0 L2320.7 713.8 L2321.7 842.3 L2321.7 842.3 L2322.7 842.3 L2323.7 842.3 L2324.7 842.3 L2325.7 842.3 L2326.7 842.3 L2327.7 840.6 L2328.7 829.0 L2329.7 825.2 L2330.7 821.8 L2331.7 813.3 L2332.7 806.1 L2333.7 799.3 L2334.7 798.4 L2335.7 787.8 L2336.7 782.3 L2337.7 773.6 L2338.7 777.5 L2339.7 772.7 L2340.7 773.4 L2341.7 774.5 L2342.7 771.5 L2343.7 770.8 L2344.7 769.5 L2345.7 768.3 L2346.7 767.9 L2347.7 765.7 L2348.7 766.5 L2349.7 763.5 L2350.7 759.5 L2351.7 754.5 L2352.7 745.8 L2353.7 737.0 L2354.7 728.1 L2355.7 726.3 L2356.7 723.8 L2357.7 719.3 L2358.7 722.7 L2359.7 722.1 L2360.7 718.0 L2361.7 713.6 L2362.7 716.1 L2363.7 712.1 L2364.7 711.8 L2365.7 715.3 L2366.7 709.9 L2367.7 711.6 L2368.7 842.3 L2368.7 842.3 L2369.7 842.3 L2370.7 842.3 L2371.7 842.3 L2372.7 842.3 L2373.7 842.3 L2374.7 835.1 L2375.7 829.3 L2376.7 826.1 L2377.7 821.6 L2378.7 808.7 L2379.7 808.8 L2380.7 796.1 L2381.7 790.6 L2382.7 785.3 L2383.7 777.0 L2384.7 772.9 L2385.7 773.3 L2386.7 775.9 L2387.7 771.8 L2388.7 776.9 L2389.7 772.0 L2390.7 771.8 L2391.7 769.3 L2392.7 768.5 L2393.7 768.3 L2394.7 765.6 L2395.7 763.9 L2396.7 769.5 L2397.7 761.4 L2398.7 755.9 L2399.7 742.1 L2400.7 737.4 L2401.7 727.5 L2402.7 728.1 L2403.7 728.3 L2404.7 721.4 L2405.7 719.8 L2406.7 723.5 L2407.7 721.7 L2408.7 722.8 L2409.7 715.6 L2410.7 719.6 L2411.7 717.2 L2412.7 719.2 L2413.7 712.1 L2414.7 842.3 L2414.7 842.3 L2415.7 842.3 L2416.7 842.3 L2417.7 842.3 L2418.7 842.3 L2419.7 842.3 L2420.7 842.3 L2421.7 839.4 L2422.7 831.2 L2423.7 823.8 L2424.7 817.5 L2425.7 810.2 L2426.7 808.5 L2427.7 800.3 L2428.7 799.1 L2429.7 791.4 L2430.7 788.1 L2431.7 782.4 L2432.7 782.1 L2433.7 777.1 L2434.7 783.4 L2435.7 779.9 L2436.7 778.5 L2437.7 773.8 L2438.7 773.6 L2439.7 778.7 L2440.7 773.3 L2441.7 773.5 L2442.7 769.3 L2443.7 771.5 L2444.7 762.4 L2445.7 755.3 L2446.7 747.1 L2447.7 732.7 L2448.7 727.0 L2449.7 721.4 L2450.7 720.6 L2451.7 720.0 L2452.7 723.5 L2453.7 716.6 L2454.7 719.8 L2455.7 719.7 L2456.7 715.3 L2457.7 718.2 L2458.7 711.8 L2459.7 715.2 L2460.7 714.1 L2461.7 842.3 L2461.7 842.3 L2462.7 842.3 L2463.7 842.3 L2464.7 842.3 L2465.7 842.3 L2466.7 842.3 L2467.7 840.8 L2468.7 831.6 L2469.7 829.5 L2470.7 824.6 L2471.7 812.5 L2472.7 813.1 L2473.7 800.2 L2474.7 799.4 L2475.7 793.2 L2476.7 786.0 L2477.7 780.2 L2478.7 774.9 L2479.7 779.0 L2480.7 778.2 L2481.7 771.4 L2482.7 774.8 L2483.7 773.3 L2484.7 773.6 L2485.7 773.7 L2486.7 767.5 L2487.7 768.4 L2488.7 765.8 L2489.7 767.1 L2490.7 761.2 L2491.7 756.6 L2492.7 753.1 L2493.7 743.4 L2494.7 733.4 L2495.7 733.7 L2496.7 726.2 L2497.7 724.6 L2498.7 726.3 L2499.7 725.8 L2500.7 720.9 L2501.7 726.9 L2502.7 722.7 L2503.7 722.3 L2504.7 719.1 L2505.7 719.7 L2506.7 715.5 L2507.7 720.9 L2508.7 842.3 L2508.7 842.3 L2509.7 842.3 L2510.7 842.3 L2511.7 842.3 L2512.7 842.3 L2513.7 842.3 L2514.7 842.5 L2515.7 832.1 L2516.7 830.0 L2517.7 822.1 L2518.7 813.0 L2519.7 807.4 L2520.7 802.8 L2521.7 791.3 L2522.7 788.6 L2523.7 782.9 L2524.7 776.0 L2525.7 779.0 L2526.7 773.5 L2527.7 771.5 L2528.7 772.2 L2529.7 770.5 L2530.7 770.0 L2531.7 773.1 L2532.7 770.4 L2533.7 771.3 L2534.7 769.6 L2535.7 767.9 L2536.7 767.3 L2537.7 764.1 L2538.7 753.9 L2539.7 744.3 L2540.7 738.9 L2541.7 732.9 L2542.7 719.9 L2543.7 725.6 L2544.7 718.7 L2545.7 723.4 L2546.7 722.4 L2547.7 716.5 L2548.7 714.9 L2549.7 715.9 L2550.7 714.7 L2551.7 713.9 L2552.7 714.7 L2553.7 715.4 L2554.7 712.6 L2555.7 842.3 L2555.7 842.3 L2556.7 842.3 L2557.7 842.3 L2558.7 842.3 L2559.7 842.3 L2560.7 842.3 L2561.7 836.3 L2562.7 829.0 L2563.7 821.5 L2564.7 816.1 L2565.7 807.6 L2566.7 803.8 L2567.7 799.1 L2568.7 790.8 L2569.7 787.0 L2570.7 777.0 L2571.7 775.7 L2572.7 775.8 L2573.7 769.2 L2574.7 772.1 L2575.7 768.2 L2576.7 768.8 L2577.7 766.2 L2578.7 765.0 L2579.7 763.2 L2580.7 763.6 L2581.7 764.3 L2582.7 763.2 L2583.7 767.2 L2584.7 753.4 L2585.7 747.0 L2586.7 744.2 L2587.7 737.7 L2588.7 726.5 L2589.7 724.4 L2590.7 723.2 L2591.7 724.8 L2592.7 717.2 L2593.7 718.5 L2594.7 718.8 L2595.7 719.9 L2596.7 715.1 L2597.7 718.8 L2598.7 712.3 L2599.7 715.4 L2600.7 712.8 L2601.7 842.3 L2601.7 842.3 L2602.7 842.3 L2603.7 842.3 L2604.7 840.0 L2605.7 838.0 L2606.7 834.5 L2607.7 828.5 L2608.7 824.8" fill="none" stroke="#5a0f8e" stroke-width="2.6" stroke-linejoin="round"/><path d="M1777.7 698 V842.3" stroke="#5e1591" stroke-width="2"/><path d="M1765 698.0 H1778" stroke="#5e1591" stroke-width="2"/><path d="M1765 723.3 H1778" stroke="#5e1591" stroke-width="2"/><path d="M1765 753.0 H1778" stroke="#5e1591" stroke-width="2"/><path d="M1765 782.8 H1778" stroke="#5e1591" stroke-width="2"/><path d="M1765 812.5 H1778" stroke="#5e1591" stroke-width="2"/><path d="M1765 842.3 H1778" stroke="#5e1591" stroke-width="2"/></svg>
<div class="t" style="left:1618.1px;top:627.7px;font-size:21.0px;color:#333;font-weight:400;font-family:'Liberation Sans', sans-serif;">48.5</div>
<div class="t" style="left:1635.6px;top:652.9px;font-size:21.0px;color:#333;font-weight:400;font-family:'Liberation Sans', sans-serif;">40</div>
<div class="t" style="left:1635.6px;top:682.7px;font-size:21.0px;color:#333;font-weight:400;font-family:'Liberation Sans', sans-serif;">30</div>
<div class="t" style="left:1635.6px;top:712.4px;font-size:21.0px;color:#333;font-weight:400;font-family:'Liberation Sans', sans-serif;">20</div>
<div class="t" style="left:1635.6px;top:742.2px;font-size:21.0px;color:#333;font-weight:400;font-family:'Liberation Sans', sans-serif;">10</div>
<div class="t" style="left:1647.3px;top:771.9px;font-size:21.0px;color:#333;font-weight:400;font-family:'Liberation Sans', sans-serif;">0</div>
<svg class="b" style="left:1660.0px;top:855.0px;" width="852.0" height="173.0" viewBox="1760.0 915.0 852.0 173.0"><path d="M1777.7 1008.7 L1778.7 1010.5 L1779.7 1010.6 L1780.7 1010.2 L1781.7 1008.5 L1782.7 1008.3 L1783.7 1009.8 L1784.7 1008.3 L1785.7 1009.0 L1786.7 1009.1 L1787.7 1009.8 L1788.7 1008.0 L1789.7 1010.4 L1790.7 998.0 L1791.7 982.7 L1792.7 965.3 L1793.7 950.1 L1794.7 933.6 L1795.7 936.7 L1796.7 945.3 L1797.7 954.4 L1798.7 966.5 L1799.7 975.3 L1800.7 985.5 L1801.7 995.7 L1802.7 1005.1 L1803.7 1014.7 L1804.7 1025.8 L1805.7 1032.9 L1806.7 1044.9 L1807.7 1067.8 L1808.7 1067.8 L1809.7 1067.8 L1810.7 1067.8 L1811.7 1067.8 L1812.7 1067.8 L1813.7 1067.7 L1814.7 1057.1 L1815.7 1044.9 L1816.7 1034.7 L1817.7 1022.4 L1818.7 1011.5 L1819.7 1007.6 L1820.7 1011.0 L1821.7 1002.2 L1822.7 1005.5 L1823.7 1005.2 L1824.7 1010.5 L1825.7 1006.2 L1826.7 1004.2 L1827.7 1005.1 L1828.7 1005.0 L1829.7 1005.6 L1830.7 1007.6 L1831.7 1007.9 L1832.7 1008.3 L1833.7 1008.7 L1834.7 1004.2 L1835.7 1004.0 L1836.7 991.3 L1837.7 979.0 L1838.7 968.8 L1839.7 956.7 L1840.7 944.2 L1841.7 931.4 L1842.7 941.2 L1843.7 952.0 L1844.7 964.2 L1845.7 972.3 L1846.7 983.8 L1847.7 993.2 L1848.7 1003.5 L1849.7 1015.1 L1850.7 1023.7 L1851.7 1035.4 L1852.7 1049.5 L1853.7 1067.8 L1854.7 1067.8 L1855.7 1067.8 L1856.7 1067.8 L1857.7 1067.8 L1858.7 1067.8 L1859.7 1059.8 L1860.7 1048.6 L1861.7 1039.2 L1862.7 1030.7 L1863.7 1020.7 L1864.7 1015.4 L1865.7 1017.4 L1866.7 1014.9 L1867.7 1016.2 L1868.7 1013.7 L1869.7 1010.6 L1870.7 1013.5 L1871.7 1014.3 L1872.7 1010.9 L1873.7 1013.4 L1874.7 1014.0 L1875.7 1015.7 L1876.7 1018.6 L1877.7 1012.3 L1878.7 1012.9 L1879.7 1011.1 L1880.7 999.4 L1881.7 987.3 L1882.7 975.9 L1883.7 964.2 L1884.7 954.1 L1885.7 956.2 L1886.7 964.1 L1887.7 971.2 L1888.7 979.0 L1889.7 985.6 L1890.7 992.5 L1891.7 1000.6 L1892.7 1010.3 L1893.7 1017.8 L1894.7 1023.2 L1895.7 1032.2 L1896.7 1038.2 L1897.7 1052.4 L1898.7 1067.8 L1899.7 1067.8 L1900.7 1067.8 L1901.7 1067.8 L1902.7 1067.8 L1903.7 1067.8 L1904.7 1067.8 L1905.7 1057.6 L1906.7 1048.7 L1907.7 1041.8 L1908.7 1031.8 L1909.7 1024.4 L1910.7 1013.5 L1911.7 1013.4 L1912.7 1012.0 L1913.7 1015.9 L1914.7 1011.2 L1915.7 1011.9 L1916.7 1012.0 L1917.7 1013.5 L1918.7 1015.3 L1919.7 1016.3 L1920.7 1014.4 L1921.7 1015.4 L1922.7 1018.2 L1923.7 1013.5 L1924.7 1011.3 L1925.7 1013.5 L1926.7 1014.3 L1927.7 1017.1 L1928.7 1007.4 L1929.7 993.2 L1930.7 981.8 L1931.7 970.0 L1932.7 960.7 L1933.7 948.1 L1934.7 942.1 L1935.7 950.1 L1936.7 960.8 L1937.7 969.1 L1938.7 978.7 L1939.7 986.0 L1940.7 996.2 L1941.7 1004.9 L1942.7 1014.8 L1943.7 1021.9 L1944.7 1032.3 L1945.7 1039.9 L1946.7 1063.0 L1947.7 1067.8 L1948.7 1067.8 L1949.7 1067.8 L1950.7 1067.8 L1951.7 1067.8 L1952.7 1067.8 L1953.7 1058.8 L1954.7 1049.5 L1955.7 1042.3 L1956.7 1033.8 L1957.7 1024.3 L1958.7 1015.0 L1959.7 1013.8 L1960.7 1020.2 L1961.7 1014.6 L1962.7 1018.1 L1963.7 1013.4 L1964.7 1017.3 L1965.7 1016.9 L1966.7 1019.4 L1967.7 1015.1 L1968.7 1017.8 L1969.7 1021.7 L1970.7 1017.9 L1971.7 1014.2 L1972.7 1018.4 L1973.7 1014.2 L1974.7 1014.8 L1975.7 1005.2 L1976.7 992.6 L1977.7 978.6 L1978.7 967.0 L1979.7 957.1 L1980.7 944.6 L1981.7 953.8 L1982.7 963.8 L1983.7 971.8 L1984.7 979.4 L1985.7 985.5 L1986.7 994.8 L1987.7 1002.5 L1988.7 1011.5 L1989.7 1021.3 L1990.7 1029.0 L1991.7 1037.2 L1992.7 1048.5 L1993.7 1067.8 L1994.7 1067.8 L1995.7 1067.8 L1996.7 1067.8 L1997.7 1067.8 L1998.7 1067.8 L1999.7 1067.8 L2000.7 1058.4 L2001.7 1046.7 L2002.7 1037.7 L2003.7 1028.8 L2004.7 1015.5 L2005.7 1010.1 L2006.7 1009.8 L2007.7 1011.5 L2008.7 1009.1 L2009.7 1008.8 L2010.7 1009.8 L2011.7 1011.6 L2012.7 1007.0 L2013.7 1009.0 L2014.7 1008.6 L2015.7 1006.7 L2016.7 1010.9 L2017.7 1009.0 L2018.7 1007.1 L2019.7 1008.0 L2020.7 1011.7 L2021.7 1008.1 L2022.7 1002.9 L2023.7 993.3 L2024.7 981.6 L2025.7 971.1 L2026.7 959.7 L2027.7 951.7 L2028.7 943.2 L2029.7 953.3 L2030.7 962.9 L2031.7 972.8 L2032.7 981.2 L2033.7 990.8 L2034.7 996.4 L2035.7 1006.9 L2036.7 1014.1 L2037.7 1024.8 L2038.7 1034.8 L2039.7 1041.9 L2040.7 1067.8 L2041.7 1067.8 L2042.7 1067.8 L2043.7 1067.8 L2044.7 1067.8 L2045.7 1067.8 L2046.7 1066.8 L2047.7 1058.1 L2048.7 1047.7 L2049.7 1036.2 L2050.7 1026.1 L2051.7 1018.2 L2052.7 1017.2 L2053.7 1010.8 L2054.7 1012.1 L2055.7 1011.2 L2056.7 1012.7 L2057.7 1013.0 L2058.7 1014.4 L2059.7 1012.4 L2060.7 1014.6 L2061.7 1016.4 L2062.7 1015.1 L2063.7 1014.0 L2064.7 1016.9 L2065.7 1012.4 L2066.7 1011.9 L2067.7 1009.5 L2068.7 1003.8 L2069.7 986.2 L2070.7 971.8 L2071.7 954.7 L2072.7 939.8 L2073.7 923.3 L2074.7 933.7 L2075.7 942.2 L2076.7 951.8 L2077.7 964.8 L2078.7 974.9 L2079.7 982.5 L2080.7 994.3 L2081.7 1004.5 L2082.7 1014.1 L2083.7 1024.2 L2084.7 1034.1 L2085.7 1045.4 L2086.7 1067.8 L2087.7 1067.8 L2088.7 1067.8 L2089.7 1067.8 L2090.7 1067.8 L2091.7 1067.8 L2092.7 1067.1 L2093.7 1058.5 L2094.7 1048.0 L2095.7 1039.7 L2096.7 1030.9 L2097.7 1022.4 L2098.7 1016.9 L2099.7 1018.5 L2100.7 1017.4 L2101.7 1017.4 L2102.7 1018.7 L2103.7 1014.6 L2104.7 1014.3 L2105.7 1018.0 L2106.7 1015.8 L2107.7 1018.8 L2108.7 1014.5 L2109.7 1018.7 L2110.7 1019.6 L2111.7 1013.1 L2112.7 1014.0 L2113.7 1015.0 L2114.7 1018.3 L2115.7 1007.7 L2116.7 997.4 L2117.7 984.5 L2118.7 976.8 L2119.7 964.3 L2120.7 954.5 L2121.7 958.3 L2122.7 966.9 L2123.7 974.3 L2124.7 984.0 L2125.7 990.8 L2126.7 995.9 L2127.7 1004.7 L2128.7 1013.1 L2129.7 1019.8 L2130.7 1027.3 L2131.7 1037.8 L2132.7 1042.4 L2133.7 1067.8 L2134.7 1067.8 L2135.7 1067.8 L2136.7 1067.8 L2137.7 1067.8 L2138.7 1067.8 L2139.7 1067.8 L2140.7 1057.9 L2141.7 1048.3 L2142.7 1037.0 L2143.7 1028.0 L2144.7 1015.6 L2145.7 1006.6 L2146.7 1009.2 L2147.7 1007.8 L2148.7 1013.2 L2149.7 1012.4 L2150.7 1009.3 L2151.7 1008.2 L2152.7 1005.1 L2153.7 1010.0 L2154.7 1010.0 L2155.7 1010.0 L2156.7 1010.1 L2157.7 1007.4 L2158.7 1007.1 L2159.7 1006.9 L2160.7 1007.3 L2161.7 1013.6 L2162.7 1001.1 L2163.7 989.7 L2164.7 977.7 L2165.7 965.5 L2166.7 955.1 L2167.7 942.5 L2168.7 940.7 L2169.7 949.3 L2170.7 959.6 L2171.7 966.1 L2172.7 976.9 L2173.7 984.7 L2174.7 994.2 L2175.7 1004.7 L2176.7 1014.6 L2177.7 1023.7 L2178.7 1031.3 L2179.7 1040.1 L2180.7 1060.0 L2181.7 1067.8 L2182.7 1067.8 L2183.7 1067.8 L2184.7 1067.8 L2185.7 1067.8 L2186.7 1067.8 L2187.7 1062.4 L2188.7 1053.1 L2189.7 1041.3 L2190.7 1030.9 L2191.7 1020.0 L2192.7 1009.3 L2193.7 1011.8 L2194.7 1009.2 L2195.7 1010.0 L2196.7 1012.0 L2197.7 1010.7 L2198.7 1009.1 L2199.7 1007.8 L2200.7 1009.7 L2201.7 1009.1 L2202.7 1008.9 L2203.7 1009.6 L2204.7 1010.3 L2205.7 1007.1 L2206.7 1011.3 L2207.7 1011.8 L2208.7 1005.9 L2209.7 1006.4 L2210.7 992.7 L2211.7 978.1 L2212.7 966.2 L2213.7 951.0 L2214.7 938.1 L2215.7 925.2 L2216.7 937.0 L2217.7 947.2 L2218.7 956.8 L2219.7 968.5 L2220.7 977.5 L2221.7 989.6 L2222.7 998.3 L2223.7 1007.6 L2224.7 1019.7 L2225.7 1027.3 L2226.7 1038.8 L2227.7 1060.6 L2228.7 1067.8 L2229.7 1067.8 L2230.7 1067.8 L2231.7 1067.8 L2232.7 1067.8 L2233.7 1067.8 L2234.7 1057.9 L2235.7 1048.9 L2236.7 1036.2 L2237.7 1026.7 L2238.7 1013.2 L2239.7 1005.7 L2240.7 1006.2 L2241.7 1010.5 L2242.7 1007.4 L2243.7 1006.1 L2244.7 1006.8 L2245.7 1006.8 L2246.7 1002.2 L2247.7 1008.1 L2248.7 1004.0 L2249.7 1005.6 L2250.7 1004.7 L2251.7 1003.3 L2252.7 1004.6 L2253.7 1004.1 L2254.7 1009.4 L2255.7 1002.1 L2256.7 991.6 L2257.7 980.4 L2258.7 969.9 L2259.7 958.1 L2260.7 947.4 L2261.7 942.8 L2262.7 949.9 L2263.7 958.7 L2264.7 966.7 L2265.7 978.1 L2266.7 984.9 L2267.7 996.2 L2268.7 1001.5 L2269.7 1013.5 L2270.7 1022.6 L2271.7 1030.3 L2272.7 1039.7 L2273.7 1053.2 L2274.7 1067.8 L2275.7 1067.8 L2276.7 1067.8 L2277.7 1067.8 L2278.7 1067.8 L2279.7 1067.8 L2280.7 1065.4 L2281.7 1054.7 L2282.7 1044.7 L2283.7 1035.5 L2284.7 1026.6 L2285.7 1019.7 L2286.7 1017.7 L2287.7 1014.8 L2288.7 1014.8 L2289.7 1014.8 L2290.7 1015.8 L2291.7 1011.7 L2292.7 1012.6 L2293.7 1014.7 L2294.7 1015.7 L2295.7 1014.3 L2296.7 1016.4 L2297.7 1015.4 L2298.7 1016.0 L2299.7 1010.4 L2300.7 1017.1 L2301.7 1013.6 L2302.7 1010.0 L2303.7 1000.4 L2304.7 988.8 L2305.7 978.6 L2306.7 966.4 L2307.7 952.7 L2308.7 941.9 L2309.7 947.2 L2310.7 957.1 L2311.7 965.5 L2312.7 975.7 L2313.7 983.7 L2314.7 991.4 L2315.7 1001.5 L2316.7 1012.8 L2317.7 1020.2 L2318.7 1029.5 L2319.7 1040.0 L2320.7 1056.2 L2321.7 1067.8 L2322.7 1067.8 L2323.7 1067.8 L2324.7 1067.8 L2325.7 1067.8 L2326.7 1067.8 L2327.7 1060.2 L2328.7 1049.0 L2329.7 1040.4 L2330.7 1028.2 L2331.7 1016.2 L2332.7 1010.5 L2333.7 1011.9 L2334.7 1006.5 L2335.7 1004.7 L2336.7 1010.2 L2337.7 1006.6 L2338.7 1006.4 L2339.7 1011.3 L2340.7 1007.8 L2341.7 1004.6 L2342.7 1009.6 L2343.7 1009.4 L2344.7 1006.1 L2345.7 1007.3 L2346.7 1004.3 L2347.7 1008.3 L2348.7 1003.6 L2349.7 991.7 L2350.7 974.8 L2351.7 963.8 L2352.7 947.6 L2353.7 935.6 L2354.7 933.2 L2355.7 941.3 L2356.7 951.3 L2357.7 962.4 L2358.7 973.2 L2359.7 983.2 L2360.7 992.7 L2361.7 1001.3 L2362.7 1011.8 L2363.7 1021.8 L2364.7 1029.4 L2365.7 1038.9 L2366.7 1059.1 L2367.7 1067.8 L2368.7 1067.8 L2369.7 1067.8 L2370.7 1067.8 L2371.7 1067.8 L2372.7 1067.8 L2373.7 1061.9 L2374.7 1054.2 L2375.7 1041.7 L2376.7 1031.7 L2377.7 1022.1 L2378.7 1013.4 L2379.7 1013.6 L2380.7 1015.0 L2381.7 1013.7 L2382.7 1014.1 L2383.7 1008.3 L2384.7 1012.0 L2385.7 1014.1 L2386.7 1012.0 L2387.7 1014.8 L2388.7 1012.2 L2389.7 1008.3 L2390.7 1014.2 L2391.7 1009.7 L2392.7 1011.9 L2393.7 1015.2 L2394.7 1009.6 L2395.7 1009.6 L2396.7 998.2 L2397.7 987.6 L2398.7 976.5 L2399.7 965.2 L2400.7 956.0 L2401.7 946.0 L2402.7 952.7 L2403.7 960.8 L2404.7 972.4 L2405.7 979.6 L2406.7 987.2 L2407.7 998.1 L2408.7 1004.9 L2409.7 1015.4 L2410.7 1022.1 L2411.7 1030.9 L2412.7 1039.2 L2413.7 1058.2 L2414.7 1067.8 L2415.7 1067.8 L2416.7 1067.8 L2417.7 1067.8 L2418.7 1067.8 L2419.7 1067.8 L2420.7 1062.9 L2421.7 1052.5 L2422.7 1044.4 L2423.7 1034.4 L2424.7 1023.3 L2425.7 1016.8 L2426.7 1012.5 L2427.7 1014.3 L2428.7 1017.2 L2429.7 1011.5 L2430.7 1013.7 L2431.7 1012.4 L2432.7 1017.8 L2433.7 1015.2 L2434.7 1013.1 L2435.7 1013.2 L2436.7 1013.8 L2437.7 1010.8 L2438.7 1013.6 L2439.7 1011.5 L2440.7 1010.4 L2441.7 1014.4 L2442.7 1002.4 L2443.7 989.9 L2444.7 976.6 L2445.7 964.8 L2446.7 952.5 L2447.7 938.2 L2448.7 944.3 L2449.7 952.6 L2450.7 963.5 L2451.7 973.4 L2452.7 982.4 L2453.7 990.4 L2454.7 998.0 L2455.7 1007.5 L2456.7 1016.6 L2457.7 1024.5 L2458.7 1035.7 L2459.7 1044.5 L2460.7 1067.8 L2461.7 1067.8 L2462.7 1067.8 L2463.7 1067.8 L2464.7 1067.8 L2465.7 1067.8 L2466.7 1067.8 L2467.7 1060.6 L2468.7 1049.2 L2469.7 1041.1 L2470.7 1034.4 L2471.7 1022.9 L2472.7 1016.5 L2473.7 1016.3 L2474.7 1020.3 L2475.7 1019.6 L2476.7 1017.3 L2477.7 1015.8 L2478.7 1019.7 L2479.7 1016.3 L2480.7 1017.7 L2481.7 1014.0 L2482.7 1017.7 L2483.7 1016.5 L2484.7 1019.5 L2485.7 1017.0 L2486.7 1019.9 L2487.7 1012.6 L2488.7 1013.8 L2489.7 1010.4 L2490.7 998.8 L2491.7 985.7 L2492.7 974.6 L2493.7 964.3 L2494.7 952.6 L2495.7 951.8 L2496.7 959.9 L2497.7 969.4 L2498.7 977.1 L2499.7 984.1 L2500.7 993.7 L2501.7 1000.8 L2502.7 1011.3 L2503.7 1018.3 L2504.7 1026.4 L2505.7 1034.5 L2506.7 1046.2 L2507.7 1067.8 L2508.7 1067.8 L2509.7 1067.8 L2510.7 1067.8 L2511.7 1067.8 L2512.7 1067.8 L2513.7 1065.2 L2514.7 1054.6 L2515.7 1047.2 L2516.7 1040.0 L2517.7 1030.7 L2518.7 1022.0 L2519.7 1017.1 L2520.7 1018.9 L2521.7 1019.3 L2522.7 1020.5 L2523.7 1017.6 L2524.7 1020.6 L2525.7 1018.0 L2526.7 1018.4 L2527.7 1019.0 L2528.7 1021.1 L2529.7 1018.1 L2530.7 1016.5 L2531.7 1020.9 L2532.7 1020.0 L2533.7 1018.2 L2534.7 1020.3 L2535.7 1008.6 L2536.7 997.2 L2537.7 984.4 L2538.7 972.7 L2539.7 962.4 L2540.7 948.9 L2541.7 958.7 L2542.7 965.2 L2543.7 972.8 L2544.7 982.8 L2545.7 990.5 L2546.7 997.8 L2547.7 1007.0 L2548.7 1015.2 L2549.7 1022.7 L2550.7 1028.1 L2551.7 1037.3 L2552.7 1049.8 L2553.7 1067.8 L2554.7 1067.8 L2555.7 1067.8 L2556.7 1067.8 L2557.7 1067.8 L2558.7 1067.8 L2559.7 1066.6 L2560.7 1057.6 L2561.7 1046.6 L2562.7 1036.0 L2563.7 1024.0 L2564.7 1014.9 L2565.7 1007.2 L2566.7 1009.3 L2567.7 1005.4 L2568.7 1010.2 L2569.7 1008.3 L2570.7 1007.5 L2571.7 1006.1 L2572.7 1009.6 L2573.7 1010.6 L2574.7 1005.4 L2575.7 1007.5 L2576.7 1007.7 L2577.7 1009.4 L2578.7 1009.3 L2579.7 1007.5 L2580.7 1008.2 L2581.7 1010.8 L2582.7 1000.1 L2583.7 991.7 L2584.7 979.4 L2585.7 969.9 L2586.7 956.8 L2587.7 950.0 L2588.7 949.1 L2589.7 958.1 L2590.7 966.1 L2591.7 974.2 L2592.7 985.7 L2593.7 994.2 L2594.7 1002.5 L2595.7 1010.8 L2596.7 1018.0 L2597.7 1025.4 L2598.7 1036.0 L2599.7 1044.0 L2600.7 1067.8 L2601.7 1067.8 L2602.7 1067.8 L2603.7 1067.8 L2604.7 1067.8 L2605.7 1067.8 L2606.7 1067.8 L2607.7 1058.0 L2608.7 1047.4 L2608.7 1067.8 L1777.7 1067.8 Z" fill="#f4f7f2"/><path d="M1777.7 1008.7 L1778.7 1010.5 L1779.7 1010.6 L1780.7 1010.2 L1781.7 1008.5 L1782.7 1008.3 L1783.7 1009.8 L1784.7 1008.3 L1785.7 1009.0 L1786.7 1009.1 L1787.7 1009.8 L1788.7 1008.0 L1789.7 1010.4 L1790.7 998.0 L1791.7 982.7 L1792.7 965.3 L1793.7 950.1 L1794.7 933.6 L1795.7 936.7 L1796.7 945.3 L1797.7 954.4 L1798.7 966.5 L1799.7 975.3 L1800.7 985.5 L1801.7 995.7 L1802.7 1005.1 L1803.7 1014.7 L1804.7 1025.8 L1805.7 1032.9 L1806.7 1044.9 L1807.7 1067.8 L1808.7 1067.8 L1809.7 1067.8 L1810.7 1067.8 L1811.7 1067.8 L1812.7 1067.8 L1813.7 1067.7 L1814.7 1057.1 L1815.7 1044.9 L1816.7 1034.7 L1817.7 1022.4 L1818.7 1011.5 L1819.7 1007.6 L1820.7 1011.0 L1821.7 1002.2 L1822.7 1005.5 L1823.7 1005.2 L1824.7 1010.5 L1825.7 1006.2 L1826.7 1004.2 L1827.7 1005.1 L1828.7 1005.0 L1829.7 1005.6 L1830.7 1007.6 L1831.7 1007.9 L1832.7 1008.3 L1833.7 1008.7 L1834.7 1004.2 L1835.7 1004.0 L1836.7 991.3 L1837.7 979.0 L1838.7 968.8 L1839.7 956.7 L1840.7 944.2 L1841.7 931.4 L1842.7 941.2 L1843.7 952.0 L1844.7 964.2 L1845.7 972.3 L1846.7 983.8 L1847.7 993.2 L1848.7 1003.5 L1849.7 1015.1 L1850.7 1023.7 L1851.7 1035.4 L1852.7 1049.5 L1853.7 1067.8 L1854.7 1067.8 L1855.7 1067.8 L1856.7 1067.8 L1857.7 1067.8 L1858.7 1067.8 L1859.7 1059.8 L1860.7 1048.6 L1861.7 1039.2 L1862.7 1030.7 L1863.7 1020.7 L1864.7 1015.4 L1865.7 1017.4 L1866.7 1014.9 L1867.7 1016.2 L1868.7 1013.7 L1869.7 1010.6 L1870.7 1013.5 L1871.7 1014.3 L1872.7 1010.9 L1873.7 1013.4 L1874.7 1014.0 L1875.7 1015.7 L1876.7 1018.6 L1877.7 1012.3 L1878.7 1012.9 L1879.7 1011.1 L1880.7 999.4 L1881.7 987.3 L1882.7 975.9 L1883.7 964.2 L1884.7 954.1 L1885.7 956.2 L1886.7 964.1 L1887.7 971.2 L1888.7 979.0 L1889.7 985.6 L1890.7 992.5 L1891.7 1000.6 L1892.7 1010.3 L1893.7 1017.8 L1894.7 1023.2 L1895.7 1032.2 L1896.7 1038.2 L1897.7 1052.4 L1898.7 1067.8 L1899.7 1067.8 L1900.7 1067.8 L1901.7 1067.8 L1902.7 1067.8 L1903.7 1067.8 L1904.7 1067.8 L1905.7 1057.6 L1906.7 1048.7 L1907.7 1041.8 L1908.7 1031.8 L1909.7 1024.4 L1910.7 1013.5 L1911.7 1013.4 L1912.7 1012.0 L1913.7 1015.9 L1914.7 1011.2 L1915.7 1011.9 L1916.7 1012.0 L1917.7 1013.5 L1918.7 1015.3 L1919.7 1016.3 L1920.7 1014.4 L1921.7 1015.4 L1922.7 1018.2 L1923.7 1013.5 L1924.7 1011.3 L1925.7 1013.5 L1926.7 1014.3 L1927.7 1017.1 L1928.7 1007.4 L1929.7 993.2 L1930.7 981.8 L1931.7 970.0 L1932.7 960.7 L1933.7 948.1 L1934.7 942.1 L1935.7 950.1 L1936.7 960.8 L1937.7 969.1 L1938.7 978.7 L1939.7 986.0 L1940.7 996.2 L1941.7 1004.9 L1942.7 1014.8 L1943.7 1021.9 L1944.7 1032.3 L1945.7 1039.9 L1946.7 1063.0 L1947.7 1067.8 L1948.7 1067.8 L1949.7 1067.8 L1950.7 1067.8 L1951.7 1067.8 L1952.7 1067.8 L1953.7 1058.8 L1954.7 1049.5 L1955.7 1042.3 L1956.7 1033.8 L1957.7 1024.3 L1958.7 1015.0 L1959.7 1013.8 L1960.7 1020.2 L1961.7 1014.6 L1962.7 1018.1 L1963.7 1013.4 L1964.7 1017.3 L1965.7 1016.9 L1966.7 1019.4 L1967.7 1015.1 L1968.7 1017.8 L1969.7 1021.7 L1970.7 1017.9 L1971.7 1014.2 L1972.7 1018.4 L1973.7 1014.2 L1974.7 1014.8 L1975.7 1005.2 L1976.7 992.6 L1977.7 978.6 L1978.7 967.0 L1979.7 957.1 L1980.7 944.6 L1981.7 953.8 L1982.7 963.8 L1983.7 971.8 L1984.7 979.4 L1985.7 985.5 L1986.7 994.8 L1987.7 1002.5 L1988.7 1011.5 L1989.7 1021.3 L1990.7 1029.0 L1991.7 1037.2 L1992.7 1048.5 L1993.7 1067.8 L1994.7 1067.8 L1995.7 1067.8 L1996.7 1067.8 L1997.7 1067.8 L1998.7 1067.8 L1999.7 1067.8 L2000.7 1058.4 L2001.7 1046.7 L2002.7 1037.7 L2003.7 1028.8 L2004.7 1015.5 L2005.7 1010.1 L2006.7 1009.8 L2007.7 1011.5 L2008.7 1009.1 L2009.7 1008.8 L2010.7 1009.8 L2011.7 1011.6 L2012.7 1007.0 L2013.7 1009.0 L2014.7 1008.6 L2015.7 1006.7 L2016.7 1010.9 L2017.7 1009.0 L2018.7 1007.1 L2019.7 1008.0 L2020.7 1011.7 L2021.7 1008.1 L2022.7 1002.9 L2023.7 993.3 L2024.7 981.6 L2025.7 971.1 L2026.7 959.7 L2027.7 951.7 L2028.7 943.2 L2029.7 953.3 L2030.7 962.9 L2031.7 972.8 L2032.7 981.2 L2033.7 990.8 L2034.7 996.4 L2035.7 1006.9 L2036.7 1014.1 L2037.7 1024.8 L2038.7 1034.8 L2039.7 1041.9 L2040.7 1067.8 L2041.7 1067.8 L2042.7 1067.8 L2043.7 1067.8 L2044.7 1067.8 L2045.7 1067.8 L2046.7 1066.8 L2047.7 1058.1 L2048.7 1047.7 L2049.7 1036.2 L2050.7 1026.1 L2051.7 1018.2 L2052.7 1017.2 L2053.7 1010.8 L2054.7 1012.1 L2055.7 1011.2 L2056.7 1012.7 L2057.7 1013.0 L2058.7 1014.4 L2059.7 1012.4 L2060.7 1014.6 L2061.7 1016.4 L2062.7 1015.1 L2063.7 1014.0 L2064.7 1016.9 L2065.7 1012.4 L2066.7 1011.9 L2067.7 1009.5 L2068.7 1003.8 L2069.7 986.2 L2070.7 971.8 L2071.7 954.7 L2072.7 939.8 L2073.7 923.3 L2074.7 933.7 L2075.7 942.2 L2076.7 951.8 L2077.7 964.8 L2078.7 974.9 L2079.7 982.5 L2080.7 994.3 L2081.7 1004.5 L2082.7 1014.1 L2083.7 1024.2 L2084.7 1034.1 L2085.7 1045.4 L2086.7 1067.8 L2087.7 1067.8 L2088.7 1067.8 L2089.7 1067.8 L2090.7 1067.8 L2091.7 1067.8 L2092.7 1067.1 L2093.7 1058.5 L2094.7 1048.0 L2095.7 1039.7 L2096.7 1030.9 L2097.7 1022.4 L2098.7 1016.9 L2099.7 1018.5 L2100.7 1017.4 L2101.7 1017.4 L2102.7 1018.7 L2103.7 1014.6 L2104.7 1014.3 L2105.7 1018.0 L2106.7 1015.8 L2107.7 1018.8 L2108.7 1014.5 L2109.7 1018.7 L2110.7 1019.6 L2111.7 1013.1 L2112.7 1014.0 L2113.7 1015.0 L2114.7 1018.3 L2115.7 1007.7 L2116.7 997.4 L2117.7 984.5 L2118.7 976.8 L2119.7 964.3 L2120.7 954.5 L2121.7 958.3 L2122.7 966.9 L2123.7 974.3 L2124.7 984.0 L2125.7 990.8 L2126.7 995.9 L2127.7 1004.7 L2128.7 1013.1 L2129.7 1019.8 L2130.7 1027.3 L2131.7 1037.8 L2132.7 1042.4 L2133.7 1067.8 L2134.7 1067.8 L2135.7 1067.8 L2136.7 1067.8 L2137.7 1067.8 L2138.7 1067.8 L2139.7 1067.8 L2140.7 1057.9 L2141.7 1048.3 L2142.7 1037.0 L2143.7 1028.0 L2144.7 1015.6 L2145.7 1006.6 L2146.7 1009.2 L2147.7 1007.8 L2148.7 1013.2 L2149.7 1012.4 L2150.7 1009.3 L2151.7 1008.2 L2152.7 1005.1 L2153.7 1010.0 L2154.7 1010.0 L2155.7 1010.0 L2156.7 1010.1 L2157.7 1007.4 L2158.7 1007.1 L2159.7 1006.9 L2160.7 1007.3 L2161.7 1013.6 L2162.7 1001.1 L2163.7 989.7 L2164.7 977.7 L2165.7 965.5 L2166.7 955.1 L2167.7 942.5 L2168.7 940.7 L2169.7 949.3 L2170.7 959.6 L2171.7 966.1 L2172.7 976.9 L2173.7 984.7 L2174.7 994.2 L2175.7 1004.7 L2176.7 1014.6 L2177.7 1023.7 L2178.7 1031.3 L2179.7 1040.1 L2180.7 1060.0 L2181.7 1067.8 L2182.7 1067.8 L2183.7 1067.8 L2184.7 1067.8 L2185.7 1067.8 L2186.7 1067.8 L2187.7 1062.4 L2188.7 1053.1 L2189.7 1041.3 L2190.7 1030.9 L2191.7 1020.0 L2192.7 1009.3 L2193.7 1011.8 L2194.7 1009.2 L2195.7 1010.0 L2196.7 1012.0 L2197.7 1010.7 L2198.7 1009.1 L2199.7 1007.8 L2200.7 1009.7 L2201.7 1009.1 L2202.7 1008.9 L2203.7 1009.6 L2204.7 1010.3 L2205.7 1007.1 L2206.7 1011.3 L2207.7 1011.8 L2208.7 1005.9 L2209.7 1006.4 L2210.7 992.7 L2211.7 978.1 L2212.7 966.2 L2213.7 951.0 L2214.7 938.1 L2215.7 925.2 L2216.7 937.0 L2217.7 947.2 L2218.7 956.8 L2219.7 968.5 L2220.7 977.5 L2221.7 989.6 L2222.7 998.3 L2223.7 1007.6 L2224.7 1019.7 L2225.7 1027.3 L2226.7 1038.8 L2227.7 1060.6 L2228.7 1067.8 L2229.7 1067.8 L2230.7 1067.8 L2231.7 1067.8 L2232.7 1067.8 L2233.7 1067.8 L2234.7 1057.9 L2235.7 1048.9 L2236.7 1036.2 L2237.7 1026.7 L2238.7 1013.2 L2239.7 1005.7 L2240.7 1006.2 L2241.7 1010.5 L2242.7 1007.4 L2243.7 1006.1 L2244.7 1006.8 L2245.7 1006.8 L2246.7 1002.2 L2247.7 1008.1 L2248.7 1004.0 L2249.7 1005.6 L2250.7 1004.7 L2251.7 1003.3 L2252.7 1004.6 L2253.7 1004.1 L2254.7 1009.4 L2255.7 1002.1 L2256.7 991.6 L2257.7 980.4 L2258.7 969.9 L2259.7 958.1 L2260.7 947.4 L2261.7 942.8 L2262.7 949.9 L2263.7 958.7 L2264.7 966.7 L2265.7 978.1 L2266.7 984.9 L2267.7 996.2 L2268.7 1001.5 L2269.7 1013.5 L2270.7 1022.6 L2271.7 1030.3 L2272.7 1039.7 L2273.7 1053.2 L2274.7 1067.8 L2275.7 1067.8 L2276.7 1067.8 L2277.7 1067.8 L2278.7 1067.8 L2279.7 1067.8 L2280.7 1065.4 L2281.7 1054.7 L2282.7 1044.7 L2283.7 1035.5 L2284.7 1026.6 L2285.7 1019.7 L2286.7 1017.7 L2287.7 1014.8 L2288.7 1014.8 L2289.7 1014.8 L2290.7 1015.8 L2291.7 1011.7 L2292.7 1012.6 L2293.7 1014.7 L2294.7 1015.7 L2295.7 1014.3 L2296.7 1016.4 L2297.7 1015.4 L2298.7 1016.0 L2299.7 1010.4 L2300.7 1017.1 L2301.7 1013.6 L2302.7 1010.0 L2303.7 1000.4 L2304.7 988.8 L2305.7 978.6 L2306.7 966.4 L2307.7 952.7 L2308.7 941.9 L2309.7 947.2 L2310.7 957.1 L2311.7 965.5 L2312.7 975.7 L2313.7 983.7 L2314.7 991.4 L2315.7 1001.5 L2316.7 1012.8 L2317.7 1020.2 L2318.7 1029.5 L2319.7 1040.0 L2320.7 1056.2 L2321.7 1067.8 L2322.7 1067.8 L2323.7 1067.8 L2324.7 1067.8 L2325.7 1067.8 L2326.7 1067.8 L2327.7 1060.2 L2328.7 1049.0 L2329.7 1040.4 L2330.7 1028.2 L2331.7 1016.2 L2332.7 1010.5 L2333.7 1011.9 L2334.7 1006.5 L2335.7 1004.7 L2336.7 1010.2 L2337.7 1006.6 L2338.7 1006.4 L2339.7 1011.3 L2340.7 1007.8 L2341.7 1004.6 L2342.7 1009.6 L2343.7 1009.4 L2344.7 1006.1 L2345.7 1007.3 L2346.7 1004.3 L2347.7 1008.3 L2348.7 1003.6 L2349.7 991.7 L2350.7 974.8 L2351.7 963.8 L2352.7 947.6 L2353.7 935.6 L2354.7 933.2 L2355.7 941.3 L2356.7 951.3 L2357.7 962.4 L2358.7 973.2 L2359.7 983.2 L2360.7 992.7 L2361.7 1001.3 L2362.7 1011.8 L2363.7 1021.8 L2364.7 1029.4 L2365.7 1038.9 L2366.7 1059.1 L2367.7 1067.8 L2368.7 1067.8 L2369.7 1067.8 L2370.7 1067.8 L2371.7 1067.8 L2372.7 1067.8 L2373.7 1061.9 L2374.7 1054.2 L2375.7 1041.7 L2376.7 1031.7 L2377.7 1022.1 L2378.7 1013.4 L2379.7 1013.6 L2380.7 1015.0 L2381.7 1013.7 L2382.7 1014.1 L2383.7 1008.3 L2384.7 1012.0 L2385.7 1014.1 L2386.7 1012.0 L2387.7 1014.8 L2388.7 1012.2 L2389.7 1008.3 L2390.7 1014.2 L2391.7 1009.7 L2392.7 1011.9 L2393.7 1015.2 L2394.7 1009.6 L2395.7 1009.6 L2396.7 998.2 L2397.7 987.6 L2398.7 976.5 L2399.7 965.2 L2400.7 956.0 L2401.7 946.0 L2402.7 952.7 L2403.7 960.8 L2404.7 972.4 L2405.7 979.6 L2406.7 987.2 L2407.7 998.1 L2408.7 1004.9 L2409.7 1015.4 L2410.7 1022.1 L2411.7 1030.9 L2412.7 1039.2 L2413.7 1058.2 L2414.7 1067.8 L2415.7 1067.8 L2416.7 1067.8 L2417.7 1067.8 L2418.7 1067.8 L2419.7 1067.8 L2420.7 1062.9 L2421.7 1052.5 L2422.7 1044.4 L2423.7 1034.4 L2424.7 1023.3 L2425.7 1016.8 L2426.7 1012.5 L2427.7 1014.3 L2428.7 1017.2 L2429.7 1011.5 L2430.7 1013.7 L2431.7 1012.4 L2432.7 1017.8 L2433.7 1015.2 L2434.7 1013.1 L2435.7 1013.2 L2436.7 1013.8 L2437.7 1010.8 L2438.7 1013.6 L2439.7 1011.5 L2440.7 1010.4 L2441.7 1014.4 L2442.7 1002.4 L2443.7 989.9 L2444.7 976.6 L2445.7 964.8 L2446.7 952.5 L2447.7 938.2 L2448.7 944.3 L2449.7 952.6 L2450.7 963.5 L2451.7 973.4 L2452.7 982.4 L2453.7 990.4 L2454.7 998.0 L2455.7 1007.5 L2456.7 1016.6 L2457.7 1024.5 L2458.7 1035.7 L2459.7 1044.5 L2460.7 1067.8 L2461.7 1067.8 L2462.7 1067.8 L2463.7 1067.8 L2464.7 1067.8 L2465.7 1067.8 L2466.7 1067.8 L2467.7 1060.6 L2468.7 1049.2 L2469.7 1041.1 L2470.7 1034.4 L2471.7 1022.9 L2472.7 1016.5 L2473.7 1016.3 L2474.7 1020.3 L2475.7 1019.6 L2476.7 1017.3 L2477.7 1015.8 L2478.7 1019.7 L2479.7 1016.3 L2480.7 1017.7 L2481.7 1014.0 L2482.7 1017.7 L2483.7 1016.5 L2484.7 1019.5 L2485.7 1017.0 L2486.7 1019.9 L2487.7 1012.6 L2488.7 1013.8 L2489.7 1010.4 L2490.7 998.8 L2491.7 985.7 L2492.7 974.6 L2493.7 964.3 L2494.7 952.6 L2495.7 951.8 L2496.7 959.9 L2497.7 969.4 L2498.7 977.1 L2499.7 984.1 L2500.7 993.7 L2501.7 1000.8 L2502.7 1011.3 L2503.7 1018.3 L2504.7 1026.4 L2505.7 1034.5 L2506.7 1046.2 L2507.7 1067.8 L2508.7 1067.8 L2509.7 1067.8 L2510.7 1067.8 L2511.7 1067.8 L2512.7 1067.8 L2513.7 1065.2 L2514.7 1054.6 L2515.7 1047.2 L2516.7 1040.0 L2517.7 1030.7 L2518.7 1022.0 L2519.7 1017.1 L2520.7 1018.9 L2521.7 1019.3 L2522.7 1020.5 L2523.7 1017.6 L2524.7 1020.6 L2525.7 1018.0 L2526.7 1018.4 L2527.7 1019.0 L2528.7 1021.1 L2529.7 1018.1 L2530.7 1016.5 L2531.7 1020.9 L2532.7 1020.0 L2533.7 1018.2 L2534.7 1020.3 L2535.7 1008.6 L2536.7 997.2 L2537.7 984.4 L2538.7 972.7 L2539.7 962.4 L2540.7 948.9 L2541.7 958.7 L2542.7 965.2 L2543.7 972.8 L2544.7 982.8 L2545.7 990.5 L2546.7 997.8 L2547.7 1007.0 L2548.7 1015.2 L2549.7 1022.7 L2550.7 1028.1 L2551.7 1037.3 L2552.7 1049.8 L2553.7 1067.8 L2554.7 1067.8 L2555.7 1067.8 L2556.7 1067.8 L2557.7 1067.8 L2558.7 1067.8 L2559.7 1066.6 L2560.7 1057.6 L2561.7 1046.6 L2562.7 1036.0 L2563.7 1024.0 L2564.7 1014.9 L2565.7 1007.2 L2566.7 1009.3 L2567.7 1005.4 L2568.7 1010.2 L2569.7 1008.3 L2570.7 1007.5 L2571.7 1006.1 L2572.7 1009.6 L2573.7 1010.6 L2574.7 1005.4 L2575.7 1007.5 L2576.7 1007.7 L2577.7 1009.4 L2578.7 1009.3 L2579.7 1007.5 L2580.7 1008.2 L2581.7 1010.8 L2582.7 1000.1 L2583.7 991.7 L2584.7 979.4 L2585.7 969.9 L2586.7 956.8 L2587.7 950.0 L2588.7 949.1 L2589.7 958.1 L2590.7 966.1 L2591.7 974.2 L2592.7 985.7 L2593.7 994.2 L2594.7 1002.5 L2595.7 1010.8 L2596.7 1018.0 L2597.7 1025.4 L2598.7 1036.0 L2599.7 1044.0 L2600.7 1067.8 L2601.7 1067.8 L2602.7 1067.8 L2603.7 1067.8 L2604.7 1067.8 L2605.7 1067.8 L2606.7 1067.8 L2607.7 1058.0 L2608.7 1047.4" fill="none" stroke="#2e8a0e" stroke-width="2.6" stroke-linejoin="round"/><path d="M1777.7 922.7 V1067.8" stroke="#2e8a0e" stroke-width="2"/><path d="M1765 922.7 H1778" stroke="#2e8a0e" stroke-width="2"/><path d="M1765 960.7 H1778" stroke="#2e8a0e" stroke-width="2"/><path d="M1765 987.5 H1778" stroke="#2e8a0e" stroke-width="2"/><path d="M1765 1014.3 H1778" stroke="#2e8a0e" stroke-width="2"/><path d="M1765 1041.0 H1778" stroke="#2e8a0e" stroke-width="2"/><path d="M1765 1067.8 H1778" stroke="#2e8a0e" stroke-width="2"/><path d="M1777.7 1075 H2608.7" stroke="#222" stroke-width="2.4"/><path d="M1777.7 1075 V1084" stroke="#222" stroke-width="2"/><path d="M1787.0 1075 V1084" stroke="#222" stroke-width="2"/><path d="M1891.0 1075 V1084" stroke="#222" stroke-width="2"/><path d="M1995.0 1075 V1084" stroke="#222" stroke-width="2"/><path d="M2099.0 1075 V1084" stroke="#222" stroke-width="2"/><path d="M2203.0 1075 V1084" stroke="#222" stroke-width="2"/><path d="M2306.8 1075 V1084" stroke="#222" stroke-width="2"/><path d="M2410.7 1075 V1084" stroke="#222" stroke-width="2"/><path d="M2514.6 1075 V1084" stroke="#222" stroke-width="2"/><path d="M2608.7 1075 V1084" stroke="#222" stroke-width="2"/></svg>
<div class="t" style="left:1618.1px;top:852.4px;font-size:21.0px;color:#333;font-weight:400;font-family:'Liberation Sans', sans-serif;">54.2</div>
<div class="t" style="left:1635.6px;top:890.4px;font-size:21.0px;color:#333;font-weight:400;font-family:'Liberation Sans', sans-serif;">40</div>
<div class="t" style="left:1635.6px;top:917.1px;font-size:21.0px;color:#333;font-weight:400;font-family:'Liberation Sans', sans-serif;">30</div>
<div class="t" style="left:1635.6px;top:943.9px;font-size:21.0px;color:#333;font-weight:400;font-family:'Liberation Sans', sans-serif;">20</div>
<div class="t" style="left:1635.6px;top:970.7px;font-size:21.0px;color:#333;font-weight:400;font-family:'Liberation Sans', sans-serif;">10</div>
<div class="t" style="left:1647.3px;top:997.5px;font-size:21.0px;color:#333;font-weight:400;font-family:'Liberation Sans', sans-serif;">0</div>
<div class="t" style="left:1656.7px;top:1026.2px;font-size:21.0px;color:#333;font-weight:400;font-family:'Liberation Sans', sans-serif;">12 PM</div>
<div class="t" style="left:1760.7px;top:1026.2px;font-size:21.0px;color:#333;font-weight:400;font-family:'Liberation Sans', sans-serif;">03 PM</div>
<div class="t" style="left:1864.7px;top:1026.2px;font-size:21.0px;color:#333;font-weight:400;font-family:'Liberation Sans', sans-serif;">06 PM</div>
<div class="t" style="left:1968.7px;top:1026.2px;font-size:21.0px;color:#333;font-weight:400;font-family:'Liberation Sans', sans-serif;">09 PM</div>
<div class="t" style="left:2065.1px;top:1026.2px;font-size:21.0px;color:#333;font-weight:400;font-family:'Liberation Sans', sans-serif;">Mon, 19</div>
<div class="t" style="left:2177.0px;top:1026.2px;font-size:21.0px;color:#333;font-weight:400;font-family:'Liberation Sans', sans-serif;">03 AM</div>
<div class="t" style="left:2280.9px;top:1026.2px;font-size:21.0px;color:#333;font-weight:400;font-family:'Liberation Sans', sans-serif;">06 AM</div>
<div class="t" style="left:2384.8px;top:1026.2px;font-size:21.0px;color:#333;font-weight:400;font-family:'Liberation Sans', sans-serif;">09 AM</div>
<div class="b" style="left:35.2px;top:1075.2px;width:1241.5px;height:564.8px;background:#fff;border:2px solid #e3e3e3;border-radius:6px;box-sizing:border-box;"></div>
<svg class="b" style="left:35.0px;top:1075.0px;" width="1242.0" height="525.0" viewBox="135.0 1135.0 1242.0 525.0"><path d="M377.0 1152.6 V1700" stroke="#e0e0e0" stroke-width="2"/><path d="M776.7 1152.6 V1700" stroke="#e0e0e0" stroke-width="2"/><path d="M1077.2 1152.6 V1700" stroke="#e0e0e0" stroke-width="2"/><path d="M1277.5 1152.6 V1700" stroke="#e0e0e0" stroke-width="2"/><path d="M137 1216.4 H1375" stroke="#e0e0e0" stroke-width="2.2"/><path d="M137 1280.6 H1375" stroke="#e0e0e0" stroke-width="2.2"/><path d="M137 1345.0 H1375" stroke="#e0e0e0" stroke-width="2.2"/><path d="M137 1408.8 H1375" stroke="#e0e0e0" stroke-width="2.2"/><path d="M137 1473.4 H1375" stroke="#e0e0e0" stroke-width="2.2"/><path d="M137 1537.0 H1375" stroke="#e0e0e0" stroke-width="2.2"/><path d="M137 1601.0 H1375" stroke="#e0e0e0" stroke-width="2.2"/></svg>
<div class="t" style="left:48.4px;top:1108.8px;font-size:28.0px;color:#222;font-weight:700;font-family:'Liberation Sans', sans-serif;transform:scaleX(0.917);">Short key</div>
<div class="t" style="left:291.3px;top:1108.8px;font-size:28.0px;color:#222;font-weight:700;font-family:'Liberation Sans', sans-serif;transform:scaleX(0.908);">End date</div>
<div class="t" style="left:690.5px;top:1108.8px;font-size:28.0px;color:#222;font-weight:700;font-family:'Liberation Sans', sans-serif;transform:scaleX(0.952);">Start date</div>
<div class="t" style="left:1052.5px;top:1108.8px;font-size:28.0px;color:#222;font-weight:700;font-family:'Liberation Sans', sans-serif;transform:scaleX(0.964);">Duration</div>
<div class="t" style="left:1190.8px;top:1108.8px;font-size:28.0px;color:#222;font-weight:700;font-family:'Liberation Sans', sans-serif;transform:scaleX(0.989);">Current</div>
<div class="b" style="left:1278.7px;top:1080.0px;width:9.3px;height:74.0px;background:#f9f9f9;"></div>
<div class="b" style="left:1276.7px;top:1075.0px;width:2.0px;height:525.0px;background:#e3e3e3;"></div>
<div class="b" style="left:1269.0px;top:1158.6px;width:7.0px;height:70.9px;background:#c4c4c4;"></div>
<div class="t" style="left:48.4px;top:1174.5px;font-size:28.0px;color:#222;font-weight:400;font-family:'Liberation Sans', sans-serif;">37B-672</div>
<div class="t" style="left:291.0px;top:1177.0px;font-size:28.0px;color:#222;font-weight:400;font-family:'Liberation Mono', monospace;-webkit-text-stroke:0.34px #222;">5/19/2025 11:15:31 AM</div>
<div class="t" style="left:690.5px;top:1177.0px;font-size:28.0px;color:#222;font-weight:400;font-family:'Liberation Mono', monospace;-webkit-text-stroke:0.34px #222;">5/19/2025 11:00…</div>
<div class="t" style="left:1005.2px;top:1177.0px;font-size:28.0px;color:#222;font-weight:400;font-family:'Liberation Mono', monospace;-webkit-text-stroke:0.34px #222;">15m 30s</div>
<svg class="b" style="left:1133.0px;top:1178.3px;" width="31.0" height="30.0" viewBox="1233.0 1238.3 31.0 30.0"><circle cx="1248.2" cy="1252.0" r="11.5" fill="none" stroke="#222" stroke-width="2.6"/><path d="M1248.2 1245.3 V1252.3 L1254 1256.3" fill="none" stroke="#222" stroke-width="2.4"/></svg>
<div class="t" style="left:1190.8px;top:1173.5px;font-size:28.0px;color:#222;font-weight:400;font-family:'Liberation Sans', sans-serif;transform:scaleX(0.939);">Ended</div>
<div class="t" style="left:48.4px;top:1238.6px;font-size:28.0px;color:#222;font-weight:400;font-family:'Liberation Sans', sans-serif;">37B-671</div>
<div class="t" style="left:291.0px;top:1241.1px;font-size:28.0px;color:#222;font-weight:400;font-family:'Liberation Mono', monospace;-webkit-text-stroke:0.34px #222;">5/19/2025 9:52:31 AM</div>
<div class="t" style="left:690.5px;top:1241.1px;font-size:28.0px;color:#222;font-weight:400;font-family:'Liberation Mono', monospace;-webkit-text-stroke:0.34px #222;">5/19/2025 9:38:…</div>
<div class="t" style="left:1005.2px;top:1241.1px;font-size:28.0px;color:#222;font-weight:400;font-family:'Liberation Mono', monospace;-webkit-text-stroke:0.34px #222;">14m 30s</div>
<svg class="b" style="left:1133.0px;top:1242.4px;" width="31.0" height="30.0" viewBox="1233.0 1302.4 31.0 30.0"><circle cx="1248.2" cy="1316.1" r="11.5" fill="none" stroke="#222" stroke-width="2.6"/><path d="M1248.2 1309.4 V1316.4 L1254 1320.4" fill="none" stroke="#222" stroke-width="2.4"/></svg>
<div class="t" style="left:1190.8px;top:1237.6px;font-size:28.0px;color:#222;font-weight:400;font-family:'Liberation Sans', sans-serif;transform:scaleX(0.939);">Ended</div>
<div class="t" style="left:48.4px;top:1302.7px;font-size:28.0px;color:#222;font-weight:400;font-family:'Liberation Sans', sans-serif;">37B-670</div>
<div class="t" style="left:291.0px;top:1305.2px;font-size:28.0px;color:#222;font-weight:400;font-family:'Liberation Mono', monospace;-webkit-text-stroke:0.34px #222;">5/19/2025 8:31:31 AM</div>
<div class="t" style="left:690.5px;top:1305.2px;font-size:28.0px;color:#222;font-weight:400;font-family:'Liberation Mono', monospace;-webkit-text-stroke:0.34px #222;">5/19/2025 8:17:…</div>
<div class="t" style="left:1005.2px;top:1305.2px;font-size:28.0px;color:#222;font-weight:400;font-family:'Liberation Mono', monospace;-webkit-text-stroke:0.34px #222;">14m 30s</div>
<svg class="b" style="left:1133.0px;top:1306.5px;" width="31.0" height="30.0" viewBox="1233.0 1366.5 31.0 30.0"><circle cx="1248.2" cy="1380.2" r="11.5" fill="none" stroke="#222" stroke-width="2.6"/><path d="M1248.2 1373.5 V1380.5 L1254 1384.5" fill="none" stroke="#222" stroke-width="2.4"/></svg>
<div class="t" style="left:1190.8px;top:1301.7px;font-size:28.0px;color:#222;font-weight:400;font-family:'Liberation Sans', sans-serif;transform:scaleX(0.939);">Ended</div>
<div class="t" style="left:48.4px;top:1366.8px;font-size:28.0px;color:#222;font-weight:400;font-family:'Liberation Sans', sans-serif;">37B-66F</div>
<div class="t" style="left:291.0px;top:1369.3px;font-size:28.0px;color:#222;font-weight:400;font-family:'Liberation Mono', monospace;-webkit-text-stroke:0.34px #222;">5/19/2025 7:12:31 AM</div>
<div class="t" style="left:690.5px;top:1369.3px;font-size:28.0px;color:#222;font-weight:400;font-family:'Liberation Mono', monospace;-webkit-text-stroke:0.34px #222;">5/19/2025 6:57:…</div>
<div class="t" style="left:1005.2px;top:1369.3px;font-size:28.0px;color:#222;font-weight:400;font-family:'Liberation Mono', monospace;-webkit-text-stroke:0.34px #222;">14m 59s</div>
<svg class="b" style="left:1133.0px;top:1370.6px;" width="31.0" height="30.0" viewBox="1233.0 1430.6 31.0 30.0"><circle cx="1248.2" cy="1444.3" r="11.5" fill="none" stroke="#222" stroke-width="2.6"/><path d="M1248.2 1437.6 V1444.6 L1254 1448.6" fill="none" stroke="#222" stroke-width="2.4"/></svg>
<div class="t" style="left:1190.8px;top:1365.8px;font-size:28.0px;color:#222;font-weight:400;font-family:'Liberation Sans', sans-serif;transform:scaleX(0.939);">Ended</div>
<div class="t" style="left:48.4px;top:1430.9px;font-size:28.0px;color:#222;font-weight:400;font-family:'Liberation Sans', sans-serif;">37B-66E</div>
<div class="t" style="left:291.0px;top:1433.4px;font-size:28.0px;color:#222;font-weight:400;font-family:'Liberation Mono', monospace;-webkit-text-stroke:0.34px #222;">5/19/2025 5:49:01 AM</div>
<div class="t" style="left:690.5px;top:1433.4px;font-size:28.0px;color:#222;font-weight:400;font-family:'Liberation Mono', monospace;-webkit-text-stroke:0.34px #222;">5/19/2025 5:37:…</div>
<div class="t" style="left:1005.2px;top:1433.4px;font-size:28.0px;color:#222;font-weight:400;font-family:'Liberation Mono', monospace;-webkit-text-stroke:0.34px #222;">11m 30s</div>
<svg class="b" style="left:1133.0px;top:1434.7px;" width="31.0" height="30.0" viewBox="1233.0 1494.7 31.0 30.0"><circle cx="1248.2" cy="1508.4" r="11.5" fill="none" stroke="#222" stroke-width="2.6"/><path d="M1248.2 1501.7 V1508.7 L1254 1512.7" fill="none" stroke="#222" stroke-width="2.4"/></svg>
<div class="t" style="left:1190.8px;top:1429.9px;font-size:28.0px;color:#222;font-weight:400;font-family:'Liberation Sans', sans-serif;transform:scaleX(0.939);">Ended</div>
<div class="t" style="left:48.4px;top:1495.0px;font-size:28.0px;color:#222;font-weight:400;font-family:'Liberation Sans', sans-serif;">37B-66D</div>
<div class="t" style="left:291.0px;top:1497.5px;font-size:28.0px;color:#222;font-weight:400;font-family:'Liberation Mono', monospace;-webkit-text-stroke:0.34px #222;">5/19/2025 5:32:53 AM</div>
<div class="t" style="left:690.5px;top:1497.5px;font-size:28.0px;color:#222;font-weight:400;font-family:'Liberation Mono', monospace;-webkit-text-stroke:0.34px #222;">5/19/2025 5:32:…</div>
<div class="t" style="left:1089.2px;top:1497.5px;font-size:28.0px;color:#222;font-weight:400;font-family:'Liberation Mono', monospace;-webkit-text-stroke:0.34px #222;">0s</div>
<svg class="b" style="left:1133.0px;top:1498.8px;" width="31.0" height="30.0" viewBox="1233.0 1558.8 31.0 30.0"><circle cx="1248.2" cy="1572.5" r="11.5" fill="none" stroke="#222" stroke-width="2.6"/><path d="M1248.2 1565.8 V1572.8 L1254 1576.8" fill="none" stroke="#222" stroke-width="2.4"/></svg>
<div class="t" style="left:48.4px;top:1559.1px;font-size:28.0px;color:#222;font-weight:400;font-family:'Liberation Sans', sans-serif;">37B-66C</div>
<div class="t" style="left:291.0px;top:1561.6px;font-size:28.0px;color:#222;font-weight:400;font-family:'Liberation Mono', monospace;-webkit-text-stroke:0.34px #222;">5/19/2025 5:32:53 AM</div>
<div class="t" style="left:690.5px;top:1561.6px;font-size:28.0px;color:#222;font-weight:400;font-family:'Liberation Mono', monospace;-webkit-text-stroke:0.34px #222;">5/19/2025 5:32:…</div>
<div class="t" style="left:1089.2px;top:1561.6px;font-size:28.0px;color:#222;font-weight:400;font-family:'Liberation Mono', monospace;-webkit-text-stroke:0.34px #222;">0s</div>
<svg class="b" style="left:1133.0px;top:1562.9px;" width="31.0" height="30.0" viewBox="1233.0 1622.9 31.0 30.0"><circle cx="1248.2" cy="1636.6" r="11.5" fill="none" stroke="#222" stroke-width="2.6"/><path d="M1248.2 1629.9 V1636.9 L1254 1640.9" fill="none" stroke="#222" stroke-width="2.4"/></svg>
<div class="b" style="left:1269.7px;top:1158.6px;width:6.3px;height:70.9px;background:#c4c4c4;"></div>
<div class="b" style="left:1287.3px;top:1075.0px;width:198.7px;height:565.0px;background:#fff;border:2px solid #e3e3e3;border-radius:6px;box-sizing:border-box;"></div>
<div class="t" style="left:1305.4px;top:1103.7px;font-size:24.5px;color:#3e4c5b;font-weight:700;font-family:'Liberation Sans', sans-serif;transform:scaleX(0.918);">BA:CONC.2</div>
<div class="b" style="left:1419.0px;top:1090.0px;width:65.0px;height:50.0px;background:#fff;"></div>
<div class="t" style="left:1305.4px;top:1156.2px;font-size:24.5px;color:#1565c0;font-weight:700;font-family:'Liberation Sans', sans-serif;transform:scaleX(0.891);">1.7 DEG. C</div>
<div class="t" style="left:1305.4px;top:1206.0px;font-size:25.0px;color:#949494;font-weight:400;font-family:'Liberation Sans', sans-serif;transform:scaleX(0.929);">BA:CONC.2</div>
<svg class="b" style="left:1303.0px;top:1260.0px;" width="157.0" height="342.0" viewBox="1403.0 1320.0 157.0 342.0"><defs><linearGradient id="gcc" x1="0" y1="0" x2="0" y2="1"><stop offset="0" stop-color="#8fb0e0" stop-opacity="0.25"/><stop offset="1" stop-color="#8fb0e0" stop-opacity="0"/></linearGradient></defs><path d="M1405.0 1520.7 L1406.6 1525.0 L1408.3 1516.3 L1409.9 1521.0 L1411.6 1522.4 L1413.2 1519.9 L1414.9 1521.8 L1416.5 1520.4 L1418.1 1512.7 L1419.8 1515.5 L1421.4 1517.0 L1423.1 1511.2 L1424.7 1510.3 L1426.4 1511.7 L1428.0 1515.0 L1429.6 1513.9 L1431.3 1517.4 L1432.9 1514.7 L1434.6 1517.5 L1436.2 1508.8 L1437.9 1513.2 L1439.5 1507.5 L1441.1 1509.0 L1442.8 1515.8 L1444.4 1515.7 L1446.1 1510.8 L1447.7 1505.7 L1449.4 1505.7 L1451.0 1514.7 L1452.9 1500.7 L1454.8 1483.4 L1456.7 1463.9 L1458.5 1466.3 L1460.2 1452.2 L1462.0 1451.9 L1463.7 1440.4 L1465.5 1434.8 L1467.2 1430.2 L1469.0 1422.6 L1470.7 1414.9 L1472.5 1405.6 L1474.3 1396.1 L1476.1 1392.3 L1477.9 1377.1 L1479.7 1372.4 L1481.5 1363.5 L1483.2 1365.6 L1485.0 1356.2 L1486.8 1363.0 L1488.4 1359.7 L1490.0 1357.0 L1491.6 1361.8 L1493.2 1351.4 L1494.8 1355.3 L1496.5 1359.4 L1498.1 1353.6 L1499.7 1357.9 L1501.3 1359.7 L1502.9 1353.2 L1504.5 1357.0 L1506.1 1347.9 L1507.8 1349.6 L1509.4 1356.6 L1511.0 1350.1 L1512.7 1347.7 L1514.3 1353.2 L1515.9 1346.6 L1517.6 1348.4 L1519.2 1347.2 L1520.8 1340.0 L1522.5 1344.9 L1524.1 1345.9 L1525.7 1344.0 L1527.4 1336.1 L1529.0 1336.0 L1530.6 1341.4 L1532.3 1339.7 L1533.9 1340.1 L1535.6 1334.7 L1537.2 1331.6 L1538.9 1329.7 L1540.5 1332.3 L1542.1 1332.1 L1543.8 1330.3 L1545.4 1328.0 L1547.1 1327.9 L1548.7 1330.0 L1550.4 1330.4 L1552.0 1329.0 L1554.0 1335.0 L1555.7 1662.0 L1555.7 1662.0 L1405.0 1662.0 Z" fill="url(#gcc)"/><path d="M1405.0 1520.7 L1406.6 1525.0 L1408.3 1516.3 L1409.9 1521.0 L1411.6 1522.4 L1413.2 1519.9 L1414.9 1521.8 L1416.5 1520.4 L1418.1 1512.7 L1419.8 1515.5 L1421.4 1517.0 L1423.1 1511.2 L1424.7 1510.3 L1426.4 1511.7 L1428.0 1515.0 L1429.6 1513.9 L1431.3 1517.4 L1432.9 1514.7 L1434.6 1517.5 L1436.2 1508.8 L1437.9 1513.2 L1439.5 1507.5 L1441.1 1509.0 L1442.8 1515.8 L1444.4 1515.7 L1446.1 1510.8 L1447.7 1505.7 L1449.4 1505.7 L1451.0 1514.7 L1452.9 1500.7 L1454.8 1483.4 L1456.7 1463.9 L1458.5 1466.3 L1460.2 1452.2 L1462.0 1451.9 L1463.7 1440.4 L1465.5 1434.8 L1467.2 1430.2 L1469.0 1422.6 L1470.7 1414.9 L1472.5 1405.6 L1474.3 1396.1 L1476.1 1392.3 L1477.9 1377.1 L1479.7 1372.4 L1481.5 1363.5 L1483.2 1365.6 L1485.0 1356.2 L1486.8 1363.0 L1488.4 1359.7 L1490.0 1357.0 L1491.6 1361.8 L1493.2 1351.4 L1494.8 1355.3 L1496.5 1359.4 L1498.1 1353.6 L1499.7 1357.9 L1501.3 1359.7 L1502.9 1353.2 L1504.5 1357.0 L1506.1 1347.9 L1507.8 1349.6 L1509.4 1356.6 L1511.0 1350.1 L1512.7 1347.7 L1514.3 1353.2 L1515.9 1346.6 L1517.6 1348.4 L1519.2 1347.2 L1520.8 1340.0 L1522.5 1344.9 L1524.1 1345.9 L1525.7 1344.0 L1527.4 1336.1 L1529.0 1336.0 L1530.6 1341.4 L1532.3 1339.7 L1533.9 1340.1 L1535.6 1334.7 L1537.2 1331.6 L1538.9 1329.7 L1540.5 1332.3 L1542.1 1332.1 L1543.8 1330.3 L1545.4 1328.0 L1547.1 1327.9 L1548.7 1330.0 L1550.4 1330.4 L1552.0 1329.0 L1554.0 1335.0 L1555.7 1662.0" fill="none" stroke="#1565c0" stroke-width="2.2" stroke-linejoin="round"/></svg>
<div class="b" style="left:1495.3px;top:1074.6px;width:1031.7px;height:565.4px;background:#fff;border:2px solid #e3e3e3;border-radius:6px;box-sizing:border-box;"></div>
<div class="t" style="left:1512.4px;top:1102.2px;font-size:24.5px;color:#3e4c5b;font-weight:700;font-family:'Liberation Sans', sans-serif;transform:scaleX(0.896);">Silo 12.c-res</div>
<svg class="b" style="left:1555.0px;top:1195.0px;" width="960.0" height="405.0" viewBox="1655.0 1255.0 960.0 405.0"><defs><clipPath id="crc"><rect x="1674" y="1200" width="936" height="500"/></clipPath></defs><g clip-path="url(#crc)"><rect x="1674.5" y="1263.2" width="32.8" height="500" fill="#fcf8fa" stroke="#e6a3c9" stroke-width="2"/><rect x="1712.2" y="1263.2" width="47.6" height="500" fill="#fcf8fa" stroke="#e6a3c9" stroke-width="2"/><rect x="1764.8" y="1263.2" width="47.6" height="500" fill="#fcf8fa" stroke="#e6a3c9" stroke-width="2"/><rect x="1817.3" y="1263.2" width="47.6" height="500" fill="#fcf8fa" stroke="#e6a3c9" stroke-width="2"/><rect x="1869.9" y="1263.2" width="47.6" height="500" fill="#fcf8fa" stroke="#e6a3c9" stroke-width="2"/><rect x="1922.5" y="1263.2" width="47.6" height="500" fill="#fcf8fa" stroke="#e6a3c9" stroke-width="2"/><rect x="1975.0" y="1263.2" width="47.6" height="500" fill="#fcf8fa" stroke="#e6a3c9" stroke-width="2"/><rect x="2027.6" y="1263.2" width="47.6" height="500" fill="#fcf8fa" stroke="#e6a3c9" stroke-width="2"/><rect x="2080.1" y="1263.2" width="47.6" height="500" fill="#fcf8fa" stroke="#e6a3c9" stroke-width="2"/><rect x="2132.7" y="1263.2" width="47.6" height="500" fill="#fcf8fa" stroke="#e6a3c9" stroke-width="2"/><rect x="2185.2" y="1263.2" width="47.6" height="500" fill="#fcf8fa" stroke="#e6a3c9" stroke-width="2"/><rect x="2237.8" y="1263.2" width="47.6" height="500" fill="#fcf8fa" stroke="#e6a3c9" stroke-width="2"/><rect x="2290.3" y="1263.2" width="47.6" height="500" fill="#fcf8fa" stroke="#e6a3c9" stroke-width="2"/><rect x="2342.8" y="1263.2" width="47.6" height="500" fill="#fcf8fa" stroke="#e6a3c9" stroke-width="2"/><rect x="2395.4" y="1263.2" width="47.6" height="500" fill="#fcf8fa" stroke="#e6a3c9" stroke-width="2"/><rect x="2448.0" y="1263.2" width="47.6" height="500" fill="#fcf8fa" stroke="#e6a3c9" stroke-width="2"/><rect x="2500.5" y="1263.2" width="47.6" height="500" fill="#fcf8fa" stroke="#e6a3c9" stroke-width="2"/><rect x="2553.0" y="1263.2" width="47.6" height="500" fill="#fcf8fa" stroke="#e6a3c9" stroke-width="2"/><rect x="2607" y="1263.2" width="40" height="500" fill="#fcf8fa" stroke="#e6a3c9" stroke-width="2"/><path d="M1674.0 1516.2 L1675.0 1514.4 L1676.0 1498.8 L1677.0 1483.1 L1678.0 1467.4 L1679.0 1451.7 L1680.0 1436.1 L1681.0 1420.4 L1682.0 1404.7 L1683.0 1389.0 L1684.0 1373.3 L1685.0 1357.7 L1686.0 1342.0 L1687.0 1329.4 L1688.0 1329.4 L1689.0 1329.4 L1690.0 1329.4 L1691.0 1329.4 L1692.0 1341.5 L1693.0 1367.6 L1694.0 1393.8 L1695.0 1419.9 L1696.0 1446.0 L1697.0 1472.2 L1698.0 1498.3 L1699.0 1524.4 L1700.0 1550.6 L1701.0 1576.7 L1702.0 1602.8 L1703.0 1628.9 L1704.0 1655.1 L1705.0 1681.2 L1706.0 1693.4 L1707.0 1693.4 L1708.0 1683.2 L1709.0 1695.9 L1710.0 1708.7 L1711.0 1721.5 L1712.0 1734.2 L1713.0 1726.9 L1714.0 1694.5 L1715.0 1662.1 L1716.0 1629.6 L1717.0 1597.2 L1718.0 1564.8 L1719.0 1532.4 L1720.0 1511.4 L1721.0 1511.4 L1722.0 1511.4 L1723.0 1511.4 L1724.0 1511.4 L1725.0 1511.4 L1726.0 1511.4 L1727.0 1511.4 L1728.0 1507.4 L1729.0 1491.7 L1730.0 1476.0 L1731.0 1460.4 L1732.0 1444.7 L1733.0 1429.0 L1734.0 1413.3 L1735.0 1397.6 L1736.0 1382.0 L1737.0 1366.3 L1738.0 1350.6 L1739.0 1334.9 L1740.0 1329.4 L1741.0 1329.4 L1742.0 1329.4 L1743.0 1329.4 L1744.0 1329.4 L1745.0 1353.3 L1746.0 1379.4 L1747.0 1405.5 L1748.0 1431.7 L1749.0 1457.8 L1750.0 1483.9 L1751.0 1510.0 L1752.0 1536.2 L1753.0 1562.3 L1754.0 1588.4 L1755.0 1614.6 L1756.0 1640.7 L1757.0 1666.8 L1758.0 1693.0 L1759.0 1693.4 L1760.0 1676.2 L1761.0 1688.9 L1762.0 1701.7 L1763.0 1714.4 L1764.0 1727.2 L1765.0 1740.0 L1766.0 1715.3 L1767.0 1686.3 L1768.0 1657.2 L1769.0 1628.2 L1770.0 1599.2 L1771.0 1570.1 L1772.0 1541.1 L1773.0 1535.3 L1774.0 1535.3 L1775.0 1535.3 L1776.0 1535.3 L1777.0 1535.3 L1778.0 1535.3 L1779.0 1535.3 L1780.0 1535.3 L1781.0 1534.0 L1782.0 1520.5 L1783.0 1507.0 L1784.0 1493.5 L1785.0 1480.0 L1786.0 1466.5 L1787.0 1453.0 L1788.0 1439.5 L1789.0 1426.0 L1790.0 1412.5 L1791.0 1399.1 L1792.0 1386.8 L1793.0 1386.8 L1794.0 1386.8 L1795.0 1386.8 L1796.0 1386.8 L1797.0 1395.0 L1798.0 1417.5 L1799.0 1440.0 L1800.0 1462.5 L1801.0 1485.0 L1802.0 1507.5 L1803.0 1530.0 L1804.0 1552.4 L1805.0 1574.9 L1806.0 1597.4 L1807.0 1619.9 L1808.0 1642.4 L1809.0 1664.9 L1810.0 1687.3 L1811.0 1693.4 L1812.0 1693.4 L1813.0 1681.9 L1814.0 1694.7 L1815.0 1707.4 L1816.0 1720.2 L1817.0 1732.9 L1818.0 1731.3 L1819.0 1702.3 L1820.0 1673.2 L1821.0 1644.2 L1822.0 1615.1 L1823.0 1586.1 L1824.0 1557.1 L1825.0 1535.3 L1826.0 1535.3 L1827.0 1535.3 L1828.0 1535.3 L1829.0 1535.3 L1830.0 1535.3 L1831.0 1535.3 L1832.0 1534.7 L1833.0 1519.8 L1834.0 1504.8 L1835.0 1489.9 L1836.0 1474.9 L1837.0 1460.0 L1838.0 1445.0 L1839.0 1430.1 L1840.0 1415.1 L1841.0 1400.2 L1842.0 1385.2 L1843.0 1370.3 L1844.0 1355.3 L1845.0 1348.5 L1846.0 1348.5 L1847.0 1348.5 L1848.0 1348.5 L1849.0 1348.5 L1850.0 1368.8 L1851.0 1393.7 L1852.0 1418.7 L1853.0 1443.6 L1854.0 1468.5 L1855.0 1493.4 L1856.0 1518.3 L1857.0 1543.2 L1858.0 1568.1 L1859.0 1593.1 L1860.0 1618.0 L1861.0 1642.9 L1862.0 1667.8 L1863.0 1692.7 L1864.0 1693.4 L1865.0 1674.9 L1866.0 1687.6 L1867.0 1700.4 L1868.0 1713.2 L1869.0 1725.9 L1870.0 1738.7 L1871.0 1719.3 L1872.0 1691.6 L1873.0 1663.9 L1874.0 1636.2 L1875.0 1608.6 L1876.0 1580.9 L1877.0 1553.2 L1878.0 1544.9 L1879.0 1544.9 L1880.0 1544.9 L1881.0 1544.9 L1882.0 1544.9 L1883.0 1544.9 L1884.0 1544.9 L1885.0 1538.4 L1886.0 1524.2 L1887.0 1510.0 L1888.0 1495.7 L1889.0 1481.5 L1890.0 1467.3 L1891.0 1453.1 L1892.0 1438.9 L1893.0 1424.6 L1894.0 1410.4 L1895.0 1396.2 L1896.0 1382.0 L1897.0 1367.8 L1898.0 1367.7 L1899.0 1367.7 L1900.0 1367.7 L1901.0 1367.7 L1902.0 1374.0 L1903.0 1397.7 L1904.0 1421.4 L1905.0 1445.1 L1906.0 1468.8 L1907.0 1492.5 L1908.0 1516.2 L1909.0 1539.9 L1910.0 1563.6 L1911.0 1587.3 L1912.0 1611.0 L1913.0 1634.7 L1914.0 1658.4 L1915.0 1682.1 L1916.0 1693.4 L1917.0 1693.4 L1918.0 1680.6 L1919.0 1693.4 L1920.0 1706.1 L1921.0 1718.9 L1922.0 1731.7 L1923.0 1733.7 L1924.0 1702.6 L1925.0 1671.6 L1926.0 1640.5 L1927.0 1609.5 L1928.0 1578.4 L1929.0 1547.3 L1930.0 1521.0 L1931.0 1521.0 L1932.0 1521.0 L1933.0 1521.0 L1934.0 1521.0 L1935.0 1521.0 L1936.0 1521.0 L1937.0 1521.0 L1938.0 1510.5 L1939.0 1494.8 L1940.0 1479.2 L1941.0 1463.5 L1942.0 1447.8 L1943.0 1432.1 L1944.0 1416.5 L1945.0 1400.8 L1946.0 1385.1 L1947.0 1369.4 L1948.0 1353.7 L1949.0 1338.1 L1950.0 1329.4 L1951.0 1329.4 L1952.0 1329.4 L1953.0 1329.4 L1954.0 1329.4 L1955.0 1348.0 L1956.0 1374.2 L1957.0 1400.3 L1958.0 1426.4 L1959.0 1452.6 L1960.0 1478.7 L1961.0 1504.8 L1962.0 1531.0 L1963.0 1557.1 L1964.0 1583.2 L1965.0 1609.3 L1966.0 1635.5 L1967.0 1661.6 L1968.0 1687.7 L1969.0 1693.4 L1970.0 1693.4 L1971.0 1686.4 L1972.0 1699.1 L1973.0 1711.9 L1974.0 1724.6 L1975.0 1737.4 L1976.0 1720.7 L1977.0 1690.9 L1978.0 1661.2 L1979.0 1631.5 L1980.0 1601.8 L1981.0 1572.1 L1982.0 1542.4 L1983.0 1530.5 L1984.0 1530.5 L1985.0 1530.5 L1986.0 1530.5 L1987.0 1530.5 L1988.0 1530.5 L1989.0 1530.0 L1990.0 1514.0 L1991.0 1497.9 L1992.0 1481.9 L1993.0 1465.9 L1994.0 1449.8 L1995.0 1433.8 L1996.0 1417.7 L1997.0 1401.7 L1998.0 1385.6 L1999.0 1369.6 L2000.0 1353.6 L2001.0 1337.5 L2002.0 1321.5 L2003.0 1319.8 L2004.0 1319.8 L2005.0 1319.8 L2006.0 1319.8 L2007.0 1324.2 L2008.0 1350.9 L2009.0 1377.7 L2010.0 1404.4 L2011.0 1431.1 L2012.0 1457.9 L2013.0 1484.6 L2014.0 1511.4 L2015.0 1538.1 L2016.0 1564.8 L2017.0 1591.6 L2018.0 1618.3 L2019.0 1645.0 L2020.0 1671.8 L2021.0 1693.4 L2022.0 1693.4 L2023.0 1679.3 L2024.0 1692.1 L2025.0 1704.9 L2026.0 1717.6 L2027.0 1730.4 L2028.0 1737.3 L2029.0 1709.6 L2030.0 1681.9 L2031.0 1654.2 L2032.0 1626.6 L2033.0 1598.9 L2034.0 1571.2 L2035.0 1544.9 L2036.0 1544.9 L2037.0 1544.9 L2038.0 1544.9 L2039.0 1544.9 L2040.0 1544.9 L2041.0 1544.9 L2042.0 1544.9 L2043.0 1544.1 L2044.0 1530.6 L2045.0 1517.1 L2046.0 1503.6 L2047.0 1490.1 L2048.0 1476.6 L2049.0 1463.1 L2050.0 1449.6 L2051.0 1436.2 L2052.0 1422.7 L2053.0 1409.2 L2054.0 1395.7 L2055.0 1386.8 L2056.0 1386.8 L2057.0 1386.8 L2058.0 1386.8 L2059.0 1386.8 L2060.0 1400.7 L2061.0 1423.2 L2062.0 1445.6 L2063.0 1468.1 L2064.0 1490.6 L2065.0 1513.1 L2066.0 1535.6 L2067.0 1558.1 L2068.0 1580.5 L2069.0 1603.0 L2070.0 1625.5 L2071.0 1648.0 L2072.0 1670.5 L2073.0 1693.0 L2074.0 1693.4 L2075.0 1693.4 L2076.0 1685.1 L2077.0 1697.8 L2078.0 1710.6 L2079.0 1723.4 L2080.0 1736.1 L2081.0 1722.8 L2082.0 1691.8 L2083.0 1660.7 L2084.0 1629.6 L2085.0 1598.6 L2086.0 1567.5 L2087.0 1536.5 L2088.0 1521.0 L2089.0 1521.0 L2090.0 1521.0 L2091.0 1521.0 L2092.0 1521.0 L2093.0 1521.0 L2094.0 1521.0 L2095.0 1521.0 L2096.0 1516.0 L2097.0 1501.1 L2098.0 1486.1 L2099.0 1471.2 L2100.0 1456.2 L2101.0 1441.3 L2102.0 1426.3 L2103.0 1411.4 L2104.0 1396.4 L2105.0 1381.5 L2106.0 1366.5 L2107.0 1351.6 L2108.0 1348.5 L2109.0 1348.5 L2110.0 1348.5 L2111.0 1348.5 L2112.0 1350.1 L2113.0 1375.1 L2114.0 1400.0 L2115.0 1424.9 L2116.0 1449.8 L2117.0 1474.7 L2118.0 1499.6 L2119.0 1524.5 L2120.0 1549.5 L2121.0 1574.4 L2122.0 1599.3 L2123.0 1624.2 L2124.0 1649.1 L2125.0 1674.0 L2126.0 1693.4 L2127.0 1693.4 L2128.0 1678.1 L2129.0 1690.8 L2130.0 1703.6 L2131.0 1716.4 L2132.0 1729.1 L2133.0 1739.9 L2134.0 1708.8 L2135.0 1677.8 L2136.0 1646.7 L2137.0 1615.7 L2138.0 1584.6 L2139.0 1553.5 L2140.0 1522.5 L2141.0 1521.0 L2142.0 1521.0 L2143.0 1521.0 L2144.0 1521.0 L2145.0 1521.0 L2146.0 1521.0 L2147.0 1521.0 L2148.0 1513.7 L2149.0 1498.0 L2150.0 1482.3 L2151.0 1466.6 L2152.0 1451.0 L2153.0 1435.3 L2154.0 1419.6 L2155.0 1403.9 L2156.0 1388.2 L2157.0 1372.6 L2158.0 1356.9 L2159.0 1341.2 L2160.0 1329.4 L2161.0 1329.4 L2162.0 1329.4 L2163.0 1329.4 L2164.0 1329.4 L2165.0 1342.8 L2166.0 1368.9 L2167.0 1395.1 L2168.0 1421.2 L2169.0 1447.3 L2170.0 1473.5 L2171.0 1499.6 L2172.0 1525.7 L2173.0 1551.9 L2174.0 1578.0 L2175.0 1604.1 L2176.0 1630.2 L2177.0 1656.4 L2178.0 1682.5 L2179.0 1693.4 L2180.0 1693.4 L2181.0 1683.8 L2182.0 1696.6 L2183.0 1709.3 L2184.0 1722.1 L2185.0 1734.9 L2186.0 1725.6 L2187.0 1693.9 L2188.0 1662.1 L2189.0 1630.4 L2190.0 1598.7 L2191.0 1566.9 L2192.0 1535.2 L2193.0 1516.2 L2194.0 1516.2 L2195.0 1516.2 L2196.0 1516.2 L2197.0 1516.2 L2198.0 1516.2 L2199.0 1516.2 L2200.0 1516.2 L2201.0 1512.1 L2202.0 1496.8 L2203.0 1481.4 L2204.0 1466.1 L2205.0 1450.8 L2206.0 1435.5 L2207.0 1420.2 L2208.0 1404.9 L2209.0 1389.6 L2210.0 1374.2 L2211.0 1358.9 L2212.0 1343.6 L2213.0 1338.9 L2214.0 1338.9 L2215.0 1338.9 L2216.0 1338.9 L2217.0 1338.9 L2218.0 1363.6 L2219.0 1389.1 L2220.0 1414.6 L2221.0 1440.1 L2222.0 1465.7 L2223.0 1491.2 L2224.0 1516.7 L2225.0 1542.2 L2226.0 1567.7 L2227.0 1593.3 L2228.0 1618.8 L2229.0 1644.3 L2230.0 1669.8 L2231.0 1693.4 L2232.0 1693.4 L2233.0 1676.8 L2234.0 1689.6 L2235.0 1702.3 L2236.0 1715.1 L2237.0 1727.8 L2238.0 1740.6 L2239.0 1713.2 L2240.0 1683.5 L2241.0 1653.8 L2242.0 1624.1 L2243.0 1594.4 L2244.0 1564.7 L2245.0 1535.0 L2246.0 1530.5 L2247.0 1530.5 L2248.0 1530.5 L2249.0 1530.5 L2250.0 1530.5 L2251.0 1530.5 L2252.0 1530.5 L2253.0 1525.7 L2254.0 1510.8 L2255.0 1495.8 L2256.0 1480.9 L2257.0 1466.0 L2258.0 1451.0 L2259.0 1436.1 L2260.0 1421.1 L2261.0 1406.2 L2262.0 1391.2 L2263.0 1376.3 L2264.0 1361.3 L2265.0 1348.5 L2266.0 1348.5 L2267.0 1348.5 L2268.0 1348.5 L2269.0 1348.5 L2270.0 1358.9 L2271.0 1383.8 L2272.0 1408.7 L2273.0 1433.6 L2274.0 1458.5 L2275.0 1483.4 L2276.0 1508.3 L2277.0 1533.3 L2278.0 1558.2 L2279.0 1583.1 L2280.0 1608.0 L2281.0 1632.9 L2282.0 1657.8 L2283.0 1682.8 L2284.0 1693.4 L2285.0 1693.4 L2286.0 1682.5 L2287.0 1695.3 L2288.0 1708.1 L2289.0 1720.8 L2290.0 1733.6 L2291.0 1729.0 L2292.0 1698.0 L2293.0 1666.9 L2294.0 1635.9 L2295.0 1604.8 L2296.0 1573.7 L2297.0 1542.7 L2298.0 1521.0 L2299.0 1521.0 L2300.0 1521.0 L2301.0 1521.0 L2302.0 1521.0 L2303.0 1521.0 L2304.0 1521.0 L2305.0 1521.0 L2306.0 1508.2 L2307.0 1492.5 L2308.0 1476.8 L2309.0 1461.1 L2310.0 1445.5 L2311.0 1429.8 L2312.0 1414.1 L2313.0 1398.4 L2314.0 1382.8 L2315.0 1367.1 L2316.0 1351.4 L2317.0 1335.7 L2318.0 1329.4 L2319.0 1329.4 L2320.0 1329.4 L2321.0 1329.4 L2322.0 1329.4 L2323.0 1352.0 L2324.0 1378.1 L2325.0 1404.2 L2326.0 1430.4 L2327.0 1456.5 L2328.0 1482.6 L2329.0 1508.7 L2330.0 1534.9 L2331.0 1561.0 L2332.0 1587.1 L2333.0 1613.3 L2334.0 1639.4 L2335.0 1665.5 L2336.0 1691.7 L2337.0 1693.4 L2338.0 1675.5 L2339.0 1688.3 L2340.0 1701.0 L2341.0 1713.8 L2342.0 1726.6 L2343.0 1739.3 L2344.0 1715.1 L2345.0 1684.0 L2346.0 1652.9 L2347.0 1621.9 L2348.0 1590.8 L2349.0 1559.8 L2350.0 1528.7 L2351.0 1521.0 L2352.0 1521.0 L2353.0 1521.0 L2354.0 1521.0 L2355.0 1521.0 L2356.0 1521.0 L2357.0 1521.0 L2358.0 1521.0 L2359.0 1521.0 L2360.0 1509.2 L2361.0 1495.0 L2362.0 1480.8 L2363.0 1466.6 L2364.0 1452.4 L2365.0 1438.1 L2366.0 1423.9 L2367.0 1409.7 L2368.0 1395.5 L2369.0 1381.3 L2370.0 1367.7 L2371.0 1367.7 L2372.0 1367.7 L2373.0 1367.7 L2374.0 1367.7 L2375.0 1375.1 L2376.0 1398.8 L2377.0 1422.5 L2378.0 1446.2 L2379.0 1469.9 L2380.0 1493.6 L2381.0 1517.3 L2382.0 1541.0 L2383.0 1564.7 L2384.0 1588.4 L2385.0 1612.1 L2386.0 1635.8 L2387.0 1659.5 L2388.0 1683.2 L2389.0 1693.4 L2390.0 1693.4 L2391.0 1681.3 L2392.0 1694.0 L2393.0 1706.8 L2394.0 1719.5 L2395.0 1732.3 L2396.0 1733.1 L2397.0 1705.5 L2398.0 1677.8 L2399.0 1650.1 L2400.0 1622.4 L2401.0 1594.7 L2402.0 1567.0 L2403.0 1544.9 L2404.0 1544.9 L2405.0 1544.9 L2406.0 1544.9 L2407.0 1544.9 L2408.0 1544.9 L2409.0 1544.9 L2410.0 1540.5 L2411.0 1525.9 L2412.0 1511.3 L2413.0 1496.7 L2414.0 1482.1 L2415.0 1467.6 L2416.0 1453.0 L2417.0 1438.4 L2418.0 1423.8 L2419.0 1409.2 L2420.0 1394.6 L2421.0 1380.1 L2422.0 1365.5 L2423.0 1358.1 L2424.0 1358.1 L2425.0 1358.1 L2426.0 1358.1 L2427.0 1358.1 L2428.0 1376.7 L2429.0 1401.0 L2430.0 1425.3 L2431.0 1449.6 L2432.0 1473.9 L2433.0 1498.2 L2434.0 1522.5 L2435.0 1546.8 L2436.0 1571.2 L2437.0 1595.5 L2438.0 1619.8 L2439.0 1644.1 L2440.0 1668.4 L2441.0 1692.7 L2442.0 1693.4 L2443.0 1674.2 L2444.0 1687.0 L2445.0 1699.8 L2446.0 1712.5 L2447.0 1725.3 L2448.0 1738.0 L2449.0 1721.2 L2450.0 1694.2 L2451.0 1667.2 L2452.0 1640.2 L2453.0 1613.1 L2454.0 1586.1 L2455.0 1559.1 L2456.0 1549.7 L2457.0 1549.7 L2458.0 1549.7 L2459.0 1549.7 L2460.0 1549.7 L2461.0 1549.7 L2462.0 1549.7 L2463.0 1544.3 L2464.0 1530.4 L2465.0 1516.6 L2466.0 1502.7 L2467.0 1488.9 L2468.0 1475.0 L2469.0 1461.2 L2470.0 1447.3 L2471.0 1433.4 L2472.0 1419.6 L2473.0 1405.7 L2474.0 1391.9 L2475.0 1378.0 L2476.0 1377.3 L2477.0 1377.3 L2478.0 1377.3 L2479.0 1377.3 L2480.0 1382.2 L2481.0 1405.3 L2482.0 1428.4 L2483.0 1451.5 L2484.0 1474.6 L2485.0 1497.7 L2486.0 1520.8 L2487.0 1543.9 L2488.0 1567.0 L2489.0 1590.0 L2490.0 1613.1 L2491.0 1636.2 L2492.0 1659.3 L2493.0 1682.4 L2494.0 1693.4 L2495.0 1693.4 L2496.0 1680.0 L2497.0 1692.7 L2498.0 1705.5 L2499.0 1718.3 L2500.0 1731.0 L2501.0 1736.0 L2502.0 1709.0 L2503.0 1682.0 L2504.0 1655.0 L2505.0 1628.0 L2506.0 1601.0 L2507.0 1574.0 L2508.0 1549.7 L2509.0 1549.7 L2510.0 1549.7 L2511.0 1549.7 L2512.0 1549.7 L2513.0 1549.7 L2514.0 1549.7 L2515.0 1546.9 L2516.0 1532.7 L2517.0 1518.5 L2518.0 1504.3 L2519.0 1490.0 L2520.0 1475.8 L2521.0 1461.6 L2522.0 1447.4 L2523.0 1433.2 L2524.0 1418.9 L2525.0 1404.7 L2526.0 1390.5 L2527.0 1376.3 L2528.0 1367.7 L2529.0 1367.7 L2530.0 1367.7 L2531.0 1367.7 L2532.0 1367.7 L2533.0 1383.4 L2534.0 1407.1 L2535.0 1430.8 L2536.0 1454.5 L2537.0 1478.2 L2538.0 1501.9 L2539.0 1525.6 L2540.0 1549.3 L2541.0 1573.0 L2542.0 1596.7 L2543.0 1620.4 L2544.0 1644.1 L2545.0 1667.8 L2546.0 1691.5 L2547.0 1693.4 L2548.0 1693.4 L2549.0 1685.7 L2550.0 1698.5 L2551.0 1711.2 L2552.0 1724.0 L2553.0 1736.8 L2554.0 1721.3 L2555.0 1690.2 L2556.0 1659.1 L2557.0 1628.1 L2558.0 1597.0 L2559.0 1566.0 L2560.0 1534.9 L2561.0 1521.0 L2562.0 1521.0 L2563.0 1521.0 L2564.0 1521.0 L2565.0 1521.0 L2566.0 1521.0 L2567.0 1521.0 L2568.0 1521.0 L2569.0 1521.0 L2570.0 1518.0 L2571.0 1504.1 L2572.0 1490.3 L2573.0 1476.4 L2574.0 1462.5 L2575.0 1448.7 L2576.0 1434.8 L2577.0 1421.0 L2578.0 1407.1 L2579.0 1393.3 L2580.0 1379.4 L2581.0 1377.3 L2582.0 1377.3 L2583.0 1377.3 L2584.0 1377.3 L2585.0 1379.9 L2586.0 1403.0 L2587.0 1426.1 L2588.0 1449.2 L2589.0 1472.3 L2590.0 1495.4 L2591.0 1518.5 L2592.0 1541.6 L2593.0 1564.6 L2594.0 1587.7 L2595.0 1610.8 L2596.0 1633.9 L2597.0 1657.0 L2598.0 1680.1 L2599.0 1693.4 L2600.0 1693.4 L2601.0 1678.7 L2602.0 1691.5 L2603.0 1704.2 L2604.0 1717.0 L2605.0 1729.8 L2606.0 1738.3 L2607.0 1707.3 L2608.0 1676.2 L2609.0 1645.2 L2610.0 1614.1 L2610 1700 L1674 1700 Z" fill="#e2e4e2"/><path d="M1674.0 1444.7 L1675.0 1432.5 L1676.0 1420.2 L1677.0 1408.0 L1678.0 1395.8 L1679.0 1383.5 L1680.0 1371.3 L1681.0 1359.0 L1682.0 1346.8 L1683.0 1334.5 L1684.0 1322.3 L1685.0 1310.0 L1686.0 1297.8 L1687.0 1285.5 L1688.0 1281.5 L1689.0 1281.5 L1690.0 1281.5 L1691.0 1295.6 L1692.0 1322.9 L1693.0 1350.3 L1694.0 1377.6 L1695.0 1405.0 L1696.0 1432.3 L1697.0 1459.6 L1698.0 1487.0 L1699.0 1514.3 L1700.0 1541.7 L1701.0 1569.0 L1702.0 1596.4 L1703.0 1623.7 L1704.0 1651.1 L1705.0 1678.4 L1706.0 1705.8 L1707.0 1733.1 L1708.0 1741.3 L1709.0 1741.3 L1710.0 1741.3 L1711.0 1741.3 L1712.0 1741.3 L1713.0 1741.3 L1714.0 1726.9 L1715.0 1692.3 L1716.0 1657.1 L1717.0 1622.0 L1718.0 1586.8 L1719.0 1551.7 L1720.0 1516.5 L1721.0 1482.6 L1722.0 1482.6 L1723.0 1482.6 L1724.0 1471.5 L1725.0 1459.5 L1726.0 1447.5 L1727.0 1435.6 L1728.0 1423.6 L1729.0 1411.6 L1730.0 1399.7 L1731.0 1387.7 L1732.0 1375.7 L1733.0 1363.8 L1734.0 1351.8 L1735.0 1339.9 L1736.0 1327.9 L1737.0 1315.9 L1738.0 1304.0 L1739.0 1292.0 L1740.0 1281.5 L1741.0 1281.5 L1742.0 1281.5 L1743.0 1281.5 L1744.0 1307.9 L1745.0 1335.2 L1746.0 1362.6 L1747.0 1389.9 L1748.0 1417.3 L1749.0 1444.6 L1750.0 1471.9 L1751.0 1499.3 L1752.0 1526.6 L1753.0 1554.0 L1754.0 1581.3 L1755.0 1608.7 L1756.0 1636.0 L1757.0 1663.4 L1758.0 1690.7 L1759.0 1718.1 L1760.0 1741.3 L1761.0 1741.3 L1762.0 1741.3 L1763.0 1741.3 L1764.0 1741.3 L1765.0 1741.3 L1766.0 1736.3 L1767.0 1714.4 L1768.0 1682.5 L1769.0 1650.6 L1770.0 1618.7 L1771.0 1586.8 L1772.0 1554.9 L1773.0 1523.0 L1774.0 1506.6 L1775.0 1506.6 L1776.0 1502.8 L1777.0 1492.8 L1778.0 1482.8 L1779.0 1472.8 L1780.0 1462.9 L1781.0 1452.9 L1782.0 1442.9 L1783.0 1433.0 L1784.0 1423.0 L1785.0 1413.0 L1786.0 1403.1 L1787.0 1393.1 L1788.0 1383.1 L1789.0 1373.1 L1790.0 1363.2 L1791.0 1353.2 L1792.0 1343.2 L1793.0 1338.9 L1794.0 1338.9 L1795.0 1338.9 L1796.0 1348.9 L1797.0 1372.8 L1798.0 1396.7 L1799.0 1420.7 L1800.0 1444.6 L1801.0 1468.5 L1802.0 1492.5 L1803.0 1516.4 L1804.0 1540.3 L1805.0 1564.2 L1806.0 1588.2 L1807.0 1612.1 L1808.0 1636.0 L1809.0 1659.9 L1810.0 1683.9 L1811.0 1707.8 L1812.0 1731.7 L1813.0 1741.3 L1814.0 1741.3 L1815.0 1741.3 L1816.0 1741.3 L1817.0 1741.3 L1818.0 1741.3 L1819.0 1729.0 L1820.0 1700.0 L1821.0 1668.1 L1822.0 1636.2 L1823.0 1604.3 L1824.0 1572.4 L1825.0 1540.5 L1826.0 1508.6 L1827.0 1506.6 L1828.0 1506.6 L1829.0 1496.4 L1830.0 1484.1 L1831.0 1471.9 L1832.0 1459.6 L1833.0 1447.4 L1834.0 1435.1 L1835.0 1422.9 L1836.0 1410.6 L1837.0 1398.4 L1838.0 1386.1 L1839.0 1373.9 L1840.0 1361.6 L1841.0 1349.4 L1842.0 1337.1 L1843.0 1324.9 L1844.0 1312.6 L1845.0 1300.6 L1846.0 1300.6 L1847.0 1300.6 L1848.0 1300.6 L1849.0 1323.3 L1850.0 1349.5 L1851.0 1375.7 L1852.0 1401.9 L1853.0 1428.1 L1854.0 1454.3 L1855.0 1480.6 L1856.0 1506.8 L1857.0 1533.0 L1858.0 1559.2 L1859.0 1585.4 L1860.0 1611.6 L1861.0 1637.8 L1862.0 1664.0 L1863.0 1690.2 L1864.0 1716.4 L1865.0 1741.3 L1866.0 1741.3 L1867.0 1741.3 L1868.0 1741.3 L1869.0 1741.3 L1870.0 1741.3 L1871.0 1737.5 L1872.0 1718.5 L1873.0 1687.9 L1874.0 1657.3 L1875.0 1626.7 L1876.0 1596.1 L1877.0 1565.5 L1878.0 1534.9 L1879.0 1516.2 L1880.0 1516.2 L1881.0 1512.8 L1882.0 1501.2 L1883.0 1489.5 L1884.0 1477.8 L1885.0 1466.1 L1886.0 1454.4 L1887.0 1442.8 L1888.0 1431.1 L1889.0 1419.4 L1890.0 1407.7 L1891.0 1396.1 L1892.0 1384.4 L1893.0 1372.7 L1894.0 1361.0 L1895.0 1349.3 L1896.0 1337.7 L1897.0 1326.0 L1898.0 1319.8 L1899.0 1319.8 L1900.0 1319.8 L1901.0 1327.7 L1902.0 1352.8 L1903.0 1377.8 L1904.0 1402.9 L1905.0 1428.0 L1906.0 1453.0 L1907.0 1478.1 L1908.0 1503.2 L1909.0 1528.2 L1910.0 1553.3 L1911.0 1578.4 L1912.0 1603.4 L1913.0 1628.5 L1914.0 1653.6 L1915.0 1678.6 L1916.0 1703.7 L1917.0 1728.8 L1918.0 1741.3 L1919.0 1741.3 L1920.0 1741.3 L1921.0 1741.3 L1922.0 1741.3 L1923.0 1741.3 L1924.0 1730.0 L1925.0 1700.9 L1926.0 1667.0 L1927.0 1633.2 L1928.0 1599.3 L1929.0 1565.5 L1930.0 1531.6 L1931.0 1497.7 L1932.0 1492.2 L1933.0 1492.2 L1934.0 1483.0 L1935.0 1470.5 L1936.0 1457.9 L1937.0 1445.4 L1938.0 1432.9 L1939.0 1420.3 L1940.0 1407.8 L1941.0 1395.3 L1942.0 1382.7 L1943.0 1370.2 L1944.0 1357.7 L1945.0 1345.1 L1946.0 1332.6 L1947.0 1320.1 L1948.0 1307.5 L1949.0 1295.0 L1950.0 1282.5 L1951.0 1281.5 L1952.0 1281.5 L1953.0 1281.5 L1954.0 1302.4 L1955.0 1329.8 L1956.0 1357.1 L1957.0 1384.4 L1958.0 1411.8 L1959.0 1439.1 L1960.0 1466.5 L1961.0 1493.8 L1962.0 1521.2 L1963.0 1548.5 L1964.0 1575.9 L1965.0 1603.2 L1966.0 1630.6 L1967.0 1657.9 L1968.0 1685.2 L1969.0 1712.6 L1970.0 1739.9 L1971.0 1741.3 L1972.0 1741.3 L1973.0 1741.3 L1974.0 1741.3 L1975.0 1741.3 L1976.0 1738.6 L1977.0 1720.3 L1978.0 1687.8 L1979.0 1655.2 L1980.0 1622.7 L1981.0 1590.1 L1982.0 1557.6 L1983.0 1525.0 L1984.0 1501.8 L1985.0 1501.8 L1986.0 1499.3 L1987.0 1485.6 L1988.0 1471.9 L1989.0 1458.3 L1990.0 1444.6 L1991.0 1430.9 L1992.0 1417.2 L1993.0 1403.6 L1994.0 1389.9 L1995.0 1376.2 L1996.0 1362.5 L1997.0 1348.9 L1998.0 1335.2 L1999.0 1321.5 L2000.0 1307.9 L2001.0 1294.2 L2002.0 1280.5 L2003.0 1271.9 L2004.0 1271.9 L2005.0 1271.9 L2006.0 1277.9 L2007.0 1305.8 L2008.0 1333.7 L2009.0 1361.7 L2010.0 1389.6 L2011.0 1417.5 L2012.0 1445.4 L2013.0 1473.3 L2014.0 1501.2 L2015.0 1529.1 L2016.0 1557.1 L2017.0 1585.0 L2018.0 1612.9 L2019.0 1640.8 L2020.0 1668.7 L2021.0 1696.6 L2022.0 1724.6 L2023.0 1741.3 L2024.0 1741.3 L2025.0 1741.3 L2026.0 1741.3 L2027.0 1741.3 L2028.0 1741.3 L2029.0 1732.9 L2030.0 1707.8 L2031.0 1677.2 L2032.0 1646.6 L2033.0 1616.0 L2034.0 1585.4 L2035.0 1554.8 L2036.0 1524.2 L2037.0 1516.2 L2038.0 1516.2 L2039.0 1509.5 L2040.0 1498.9 L2041.0 1488.4 L2042.0 1477.9 L2043.0 1467.3 L2044.0 1456.8 L2045.0 1446.2 L2046.0 1435.7 L2047.0 1425.2 L2048.0 1414.6 L2049.0 1404.1 L2050.0 1393.5 L2051.0 1383.0 L2052.0 1372.5 L2053.0 1361.9 L2054.0 1351.4 L2055.0 1340.8 L2056.0 1338.9 L2057.0 1338.9 L2058.0 1338.9 L2059.0 1354.9 L2060.0 1378.8 L2061.0 1402.7 L2062.0 1426.7 L2063.0 1450.6 L2064.0 1474.5 L2065.0 1498.4 L2066.0 1522.4 L2067.0 1546.3 L2068.0 1570.2 L2069.0 1594.1 L2070.0 1618.1 L2071.0 1642.0 L2072.0 1665.9 L2073.0 1689.9 L2074.0 1713.8 L2075.0 1737.7 L2076.0 1741.3 L2077.0 1741.3 L2078.0 1741.3 L2079.0 1741.3 L2080.0 1741.3 L2081.0 1740.3 L2082.0 1722.9 L2083.0 1689.0 L2084.0 1655.2 L2085.0 1621.3 L2086.0 1587.5 L2087.0 1553.6 L2088.0 1519.7 L2089.0 1492.2 L2090.0 1492.2 L2091.0 1491.3 L2092.0 1479.9 L2093.0 1468.5 L2094.0 1457.1 L2095.0 1445.7 L2096.0 1434.3 L2097.0 1422.9 L2098.0 1411.5 L2099.0 1400.1 L2100.0 1388.7 L2101.0 1377.3 L2102.0 1365.9 L2103.0 1354.5 L2104.0 1343.1 L2105.0 1331.7 L2106.0 1320.3 L2107.0 1308.9 L2108.0 1300.6 L2109.0 1300.6 L2110.0 1300.6 L2111.0 1303.7 L2112.0 1329.9 L2113.0 1356.1 L2114.0 1382.3 L2115.0 1408.5 L2116.0 1434.7 L2117.0 1460.9 L2118.0 1487.1 L2119.0 1513.3 L2120.0 1539.5 L2121.0 1565.7 L2122.0 1591.9 L2123.0 1618.1 L2124.0 1644.3 L2125.0 1670.5 L2126.0 1696.7 L2127.0 1723.0 L2128.0 1741.3 L2129.0 1741.3 L2130.0 1741.3 L2131.0 1741.3 L2132.0 1741.3 L2133.0 1741.3 L2134.0 1733.2 L2135.0 1707.6 L2136.0 1673.8 L2137.0 1639.9 L2138.0 1606.1 L2139.0 1572.2 L2140.0 1538.4 L2141.0 1504.5 L2142.0 1492.2 L2143.0 1492.2 L2144.0 1485.5 L2145.0 1473.0 L2146.0 1460.4 L2147.0 1447.9 L2148.0 1435.4 L2149.0 1422.8 L2150.0 1410.3 L2151.0 1397.8 L2152.0 1385.2 L2153.0 1372.7 L2154.0 1360.2 L2155.0 1347.6 L2156.0 1335.1 L2157.0 1322.6 L2158.0 1310.0 L2159.0 1297.5 L2160.0 1285.0 L2161.0 1281.5 L2162.0 1281.5 L2163.0 1281.5 L2164.0 1296.9 L2165.0 1324.3 L2166.0 1351.6 L2167.0 1379.0 L2168.0 1406.3 L2169.0 1433.7 L2170.0 1461.0 L2171.0 1488.4 L2172.0 1515.7 L2173.0 1543.0 L2174.0 1570.4 L2175.0 1597.7 L2176.0 1625.1 L2177.0 1652.4 L2178.0 1679.8 L2179.0 1707.1 L2180.0 1734.5 L2181.0 1741.3 L2182.0 1741.3 L2183.0 1741.3 L2184.0 1741.3 L2185.0 1741.3 L2186.0 1741.3 L2187.0 1726.0 L2188.0 1691.5 L2189.0 1657.0 L2190.0 1622.5 L2191.0 1587.9 L2192.0 1553.4 L2193.0 1518.9 L2194.0 1487.4 L2195.0 1487.4 L2196.0 1487.4 L2197.0 1475.9 L2198.0 1464.2 L2199.0 1452.6 L2200.0 1440.9 L2201.0 1429.2 L2202.0 1417.5 L2203.0 1405.9 L2204.0 1394.2 L2205.0 1382.5 L2206.0 1370.8 L2207.0 1359.1 L2208.0 1347.5 L2209.0 1335.8 L2210.0 1324.1 L2211.0 1312.4 L2212.0 1300.7 L2213.0 1291.0 L2214.0 1291.0 L2215.0 1291.0 L2216.0 1291.5 L2217.0 1318.2 L2218.0 1345.0 L2219.0 1371.8 L2220.0 1398.6 L2221.0 1425.3 L2222.0 1452.1 L2223.0 1478.9 L2224.0 1505.7 L2225.0 1532.4 L2226.0 1559.2 L2227.0 1586.0 L2228.0 1612.8 L2229.0 1639.6 L2230.0 1666.3 L2231.0 1693.1 L2232.0 1719.9 L2233.0 1741.3 L2234.0 1741.3 L2235.0 1741.3 L2236.0 1741.3 L2237.0 1741.3 L2238.0 1741.3 L2239.0 1735.0 L2240.0 1712.2 L2241.0 1679.6 L2242.0 1647.1 L2243.0 1614.5 L2244.0 1582.0 L2245.0 1549.4 L2246.0 1516.9 L2247.0 1501.8 L2248.0 1501.8 L2249.0 1496.6 L2250.0 1484.6 L2251.0 1472.7 L2252.0 1460.7 L2253.0 1448.7 L2254.0 1436.8 L2255.0 1424.8 L2256.0 1412.9 L2257.0 1400.9 L2258.0 1388.9 L2259.0 1377.0 L2260.0 1365.0 L2261.0 1353.0 L2262.0 1341.1 L2263.0 1329.1 L2264.0 1317.1 L2265.0 1305.2 L2266.0 1300.6 L2267.0 1300.6 L2268.0 1300.6 L2269.0 1312.8 L2270.0 1339.0 L2271.0 1365.2 L2272.0 1391.4 L2273.0 1417.7 L2274.0 1443.9 L2275.0 1470.1 L2276.0 1496.3 L2277.0 1522.5 L2278.0 1548.7 L2279.0 1574.9 L2280.0 1601.1 L2281.0 1627.3 L2282.0 1653.5 L2283.0 1679.7 L2284.0 1705.9 L2285.0 1732.1 L2286.0 1741.3 L2287.0 1741.3 L2288.0 1741.3 L2289.0 1741.3 L2290.0 1741.3 L2291.0 1741.3 L2292.0 1727.7 L2293.0 1695.8 L2294.0 1661.9 L2295.0 1628.1 L2296.0 1594.2 L2297.0 1560.4 L2298.0 1526.5 L2299.0 1492.7 L2300.0 1492.2 L2301.0 1492.2 L2302.0 1481.1 L2303.0 1468.6 L2304.0 1456.1 L2305.0 1443.5 L2306.0 1431.0 L2307.0 1418.5 L2308.0 1405.9 L2309.0 1393.4 L2310.0 1380.9 L2311.0 1368.3 L2312.0 1355.8 L2313.0 1343.3 L2314.0 1330.7 L2315.0 1318.2 L2316.0 1305.7 L2317.0 1293.1 L2318.0 1281.5 L2319.0 1281.5 L2320.0 1281.5 L2321.0 1281.5 L2322.0 1306.5 L2323.0 1333.9 L2324.0 1361.2 L2325.0 1388.5 L2326.0 1415.9 L2327.0 1443.2 L2328.0 1470.6 L2329.0 1497.9 L2330.0 1525.3 L2331.0 1552.6 L2332.0 1580.0 L2333.0 1607.3 L2334.0 1634.7 L2335.0 1662.0 L2336.0 1689.3 L2337.0 1716.7 L2338.0 1741.3 L2339.0 1741.3 L2340.0 1741.3 L2341.0 1741.3 L2342.0 1741.3 L2343.0 1741.3 L2344.0 1736.8 L2345.0 1714.4 L2346.0 1680.6 L2347.0 1646.7 L2348.0 1612.8 L2349.0 1579.0 L2350.0 1545.1 L2351.0 1511.3 L2352.0 1492.2 L2353.0 1492.2 L2354.0 1488.8 L2355.0 1478.5 L2356.0 1468.3 L2357.0 1458.0 L2358.0 1447.8 L2359.0 1437.5 L2360.0 1427.3 L2361.0 1417.0 L2362.0 1406.7 L2363.0 1396.5 L2364.0 1386.2 L2365.0 1376.0 L2366.0 1365.7 L2367.0 1355.5 L2368.0 1345.2 L2369.0 1335.0 L2370.0 1324.7 L2371.0 1319.8 L2372.0 1319.8 L2373.0 1319.8 L2374.0 1329.0 L2375.0 1354.0 L2376.0 1379.1 L2377.0 1404.2 L2378.0 1429.2 L2379.0 1454.3 L2380.0 1479.4 L2381.0 1504.4 L2382.0 1529.5 L2383.0 1554.6 L2384.0 1579.6 L2385.0 1604.7 L2386.0 1629.8 L2387.0 1654.8 L2388.0 1679.9 L2389.0 1705.0 L2390.0 1730.0 L2391.0 1741.3 L2392.0 1741.3 L2393.0 1741.3 L2394.0 1741.3 L2395.0 1741.3 L2396.0 1741.3 L2397.0 1730.1 L2398.0 1703.2 L2399.0 1672.6 L2400.0 1642.0 L2401.0 1611.4 L2402.0 1580.8 L2403.0 1550.2 L2404.0 1519.6 L2405.0 1516.2 L2406.0 1516.2 L2407.0 1506.6 L2408.0 1494.3 L2409.0 1482.1 L2410.0 1469.8 L2411.0 1457.6 L2412.0 1445.3 L2413.0 1433.1 L2414.0 1420.8 L2415.0 1408.6 L2416.0 1396.3 L2417.0 1384.1 L2418.0 1371.8 L2419.0 1359.6 L2420.0 1347.3 L2421.0 1335.1 L2422.0 1322.8 L2423.0 1310.6 L2424.0 1310.2 L2425.0 1310.2 L2426.0 1310.2 L2427.0 1331.1 L2428.0 1356.8 L2429.0 1382.4 L2430.0 1408.0 L2431.0 1433.7 L2432.0 1459.3 L2433.0 1484.9 L2434.0 1510.6 L2435.0 1536.2 L2436.0 1561.8 L2437.0 1587.5 L2438.0 1613.1 L2439.0 1638.8 L2440.0 1664.4 L2441.0 1690.0 L2442.0 1715.7 L2443.0 1741.3 L2444.0 1741.3 L2445.0 1741.3 L2446.0 1741.3 L2447.0 1741.3 L2448.0 1741.3 L2449.0 1738.3 L2450.0 1720.5 L2451.0 1690.6 L2452.0 1660.6 L2453.0 1630.7 L2454.0 1600.7 L2455.0 1570.8 L2456.0 1540.8 L2457.0 1521.0 L2458.0 1521.0 L2459.0 1518.3 L2460.0 1506.9 L2461.0 1495.5 L2462.0 1484.1 L2463.0 1472.7 L2464.0 1461.3 L2465.0 1449.9 L2466.0 1438.5 L2467.0 1427.1 L2468.0 1415.7 L2469.0 1404.3 L2470.0 1392.9 L2471.0 1381.6 L2472.0 1370.2 L2473.0 1358.8 L2474.0 1347.4 L2475.0 1336.0 L2476.0 1329.4 L2477.0 1329.4 L2478.0 1329.4 L2479.0 1335.9 L2480.0 1360.4 L2481.0 1384.9 L2482.0 1409.4 L2483.0 1433.9 L2484.0 1458.4 L2485.0 1482.9 L2486.0 1507.4 L2487.0 1531.9 L2488.0 1556.3 L2489.0 1580.8 L2490.0 1605.3 L2491.0 1629.8 L2492.0 1654.3 L2493.0 1678.8 L2494.0 1703.3 L2495.0 1727.8 L2496.0 1741.3 L2497.0 1741.3 L2498.0 1741.3 L2499.0 1741.3 L2500.0 1741.3 L2501.0 1741.3 L2502.0 1731.8 L2503.0 1707.0 L2504.0 1677.1 L2505.0 1647.1 L2506.0 1617.2 L2507.0 1587.2 L2508.0 1557.3 L2509.0 1527.3 L2510.0 1521.0 L2511.0 1521.0 L2512.0 1512.8 L2513.0 1500.8 L2514.0 1488.8 L2515.0 1476.9 L2516.0 1464.9 L2517.0 1452.9 L2518.0 1441.0 L2519.0 1429.0 L2520.0 1417.1 L2521.0 1405.1 L2522.0 1393.1 L2523.0 1381.2 L2524.0 1369.2 L2525.0 1357.2 L2526.0 1345.3 L2527.0 1333.3 L2528.0 1321.3 L2529.0 1319.8 L2530.0 1319.8 L2531.0 1319.8 L2532.0 1337.7 L2533.0 1362.8 L2534.0 1387.9 L2535.0 1412.9 L2536.0 1438.0 L2537.0 1463.1 L2538.0 1488.1 L2539.0 1513.2 L2540.0 1538.3 L2541.0 1563.3 L2542.0 1588.4 L2543.0 1613.5 L2544.0 1638.5 L2545.0 1663.6 L2546.0 1688.7 L2547.0 1713.7 L2548.0 1738.8 L2549.0 1741.3 L2550.0 1741.3 L2551.0 1741.3 L2552.0 1741.3 L2553.0 1741.3 L2554.0 1739.6 L2555.0 1721.2 L2556.0 1687.3 L2557.0 1653.5 L2558.0 1619.6 L2559.0 1585.8 L2560.0 1551.9 L2561.0 1518.1 L2562.0 1492.2 L2563.0 1492.2 L2564.0 1490.9 L2565.0 1481.2 L2566.0 1471.5 L2567.0 1461.9 L2568.0 1452.2 L2569.0 1442.5 L2570.0 1432.8 L2571.0 1423.1 L2572.0 1413.4 L2573.0 1403.7 L2574.0 1394.1 L2575.0 1384.4 L2576.0 1374.7 L2577.0 1365.0 L2578.0 1355.3 L2579.0 1345.6 L2580.0 1336.0 L2581.0 1329.4 L2582.0 1329.4 L2583.0 1329.4 L2584.0 1333.4 L2585.0 1357.9 L2586.0 1382.4 L2587.0 1406.9 L2588.0 1431.4 L2589.0 1455.9 L2590.0 1480.4 L2591.0 1504.9 L2592.0 1529.4 L2593.0 1553.9 L2594.0 1578.4 L2595.0 1602.9 L2596.0 1627.4 L2597.0 1651.9 L2598.0 1676.4 L2599.0 1700.9 L2600.0 1725.4 L2601.0 1741.3 L2602.0 1741.3 L2603.0 1741.3 L2604.0 1741.3 L2605.0 1741.3 L2606.0 1741.3 L2607.0 1733.2 L2608.0 1706.0 L2609.0 1672.1 L2610.0 1638.2 L2610 1700 L1674 1700 Z" fill="#eceeec" fill-opacity="0.7"/><path d="M1674.0 1446.2 L1675.0 1439.8 L1676.0 1422.5 L1677.0 1414.2 L1678.0 1394.2 L1679.0 1386.2 L1680.0 1373.0 L1681.0 1362.2 L1682.0 1348.5 L1683.0 1340.9 L1684.0 1316.1 L1685.0 1303.8 L1686.0 1290.4 L1687.0 1284.4 L1688.0 1286.5 L1689.0 1283.3 L1690.0 1287.0 L1691.0 1298.6 L1692.0 1323.0 L1693.0 1357.0 L1694.0 1378.6 L1695.0 1406.2 L1696.0 1432.5 L1697.0 1466.1 L1698.0 1490.8 L1699.0 1518.2 L1700.0 1539.8 L1701.0 1567.6 L1702.0 1601.0 L1703.0 1629.7 L1704.0 1654.1 L1705.0 1678.4 L1706.0 1705.8 L1707.0 1733.1 L1708.0 1741.3 L1709.0 1741.3 L1710.0 1741.3 L1711.0 1741.3 L1712.0 1741.3 L1713.0 1741.3 L1714.0 1727.4 L1715.0 1692.3 L1716.0 1650.3 L1717.0 1624.5 L1718.0 1585.0 L1719.0 1547.0 L1720.0 1519.1 L1721.0 1485.2 L1722.0 1477.8 L1723.0 1477.1 L1724.0 1464.2 L1725.0 1465.1 L1726.0 1450.3 L1727.0 1428.7 L1728.0 1428.2 L1729.0 1414.5 L1730.0 1392.6 L1731.0 1380.5 L1732.0 1378.9 L1733.0 1360.8 L1734.0 1352.0 L1735.0 1338.7 L1736.0 1331.8 L1737.0 1317.8 L1738.0 1299.1 L1739.0 1293.6 L1740.0 1287.4 L1741.0 1280.5 L1742.0 1280.0 L1743.0 1280.8 L1744.0 1305.1 L1745.0 1334.5 L1746.0 1355.6 L1747.0 1390.5 L1748.0 1414.1 L1749.0 1445.5 L1750.0 1475.1 L1751.0 1496.3 L1752.0 1521.7 L1753.0 1549.5 L1754.0 1582.7 L1755.0 1608.7 L1756.0 1634.0 L1757.0 1667.3 L1758.0 1690.7 L1759.0 1718.1 L1760.0 1741.3 L1761.0 1741.3 L1762.0 1741.3 L1763.0 1741.3 L1764.0 1741.3 L1765.0 1741.3 L1766.0 1741.3 L1767.0 1714.4 L1768.0 1682.5 L1769.0 1648.1 L1770.0 1615.4 L1771.0 1582.3 L1772.0 1561.4 L1773.0 1515.4 L1774.0 1506.9 L1775.0 1508.1 L1776.0 1502.7 L1777.0 1486.3 L1778.0 1479.9 L1779.0 1472.2 L1780.0 1458.4 L1781.0 1455.1 L1782.0 1436.9 L1783.0 1432.4 L1784.0 1420.9 L1785.0 1419.4 L1786.0 1398.9 L1787.0 1390.7 L1788.0 1385.3 L1789.0 1370.9 L1790.0 1370.2 L1791.0 1345.8 L1792.0 1340.5 L1793.0 1340.5 L1794.0 1335.1 L1795.0 1331.8 L1796.0 1350.0 L1797.0 1380.3 L1798.0 1400.4 L1799.0 1420.5 L1800.0 1444.3 L1801.0 1467.3 L1802.0 1491.3 L1803.0 1517.2 L1804.0 1542.0 L1805.0 1560.1 L1806.0 1586.8 L1807.0 1612.1 L1808.0 1638.4 L1809.0 1667.2 L1810.0 1683.9 L1811.0 1707.8 L1812.0 1731.7 L1813.0 1741.3 L1814.0 1741.3 L1815.0 1741.3 L1816.0 1741.3 L1817.0 1741.3 L1818.0 1741.3 L1819.0 1731.9 L1820.0 1700.0 L1821.0 1674.2 L1822.0 1637.5 L1823.0 1597.2 L1824.0 1578.3 L1825.0 1533.7 L1826.0 1514.1 L1827.0 1509.5 L1828.0 1507.3 L1829.0 1500.9 L1830.0 1484.4 L1831.0 1472.2 L1832.0 1460.6 L1833.0 1444.4 L1834.0 1437.9 L1835.0 1425.9 L1836.0 1405.9 L1837.0 1404.3 L1838.0 1380.8 L1839.0 1371.6 L1840.0 1358.9 L1841.0 1354.5 L1842.0 1329.7 L1843.0 1328.8 L1844.0 1317.6 L1845.0 1305.8 L1846.0 1299.7 L1847.0 1293.6 L1848.0 1304.7 L1849.0 1324.8 L1850.0 1354.4 L1851.0 1373.6 L1852.0 1403.0 L1853.0 1435.4 L1854.0 1452.6 L1855.0 1485.2 L1856.0 1505.3 L1857.0 1534.7 L1858.0 1556.0 L1859.0 1589.9 L1860.0 1607.7 L1861.0 1633.1 L1862.0 1670.7 L1863.0 1690.2 L1864.0 1716.4 L1865.0 1741.3 L1866.0 1741.3 L1867.0 1741.3 L1868.0 1741.3 L1869.0 1741.3 L1870.0 1741.3 L1871.0 1741.3 L1872.0 1718.5 L1873.0 1687.9 L1874.0 1663.4 L1875.0 1621.0 L1876.0 1600.9 L1877.0 1568.2 L1878.0 1535.6 L1879.0 1519.8 L1880.0 1510.6 L1881.0 1512.4 L1882.0 1499.0 L1883.0 1488.0 L1884.0 1476.1 L1885.0 1464.8 L1886.0 1456.8 L1887.0 1437.5 L1888.0 1429.3 L1889.0 1414.6 L1890.0 1404.6 L1891.0 1399.2 L1892.0 1382.6 L1893.0 1379.1 L1894.0 1366.6 L1895.0 1355.2 L1896.0 1340.6 L1897.0 1330.8 L1898.0 1316.8 L1899.0 1319.6 L1900.0 1321.0 L1901.0 1333.3 L1902.0 1354.6 L1903.0 1382.7 L1904.0 1400.8 L1905.0 1425.0 L1906.0 1450.8 L1907.0 1470.4 L1908.0 1502.3 L1909.0 1528.4 L1910.0 1558.8 L1911.0 1581.2 L1912.0 1604.2 L1913.0 1635.3 L1914.0 1655.7 L1915.0 1678.6 L1916.0 1703.7 L1917.0 1728.8 L1918.0 1741.3 L1919.0 1741.3 L1920.0 1741.3 L1921.0 1741.3 L1922.0 1741.3 L1923.0 1741.3 L1924.0 1734.7 L1925.0 1700.9 L1926.0 1674.5 L1927.0 1638.7 L1928.0 1594.5 L1929.0 1558.3 L1930.0 1531.5 L1931.0 1497.8 L1932.0 1489.4 L1933.0 1493.5 L1934.0 1477.8 L1935.0 1470.6 L1936.0 1464.3 L1937.0 1452.6 L1938.0 1428.9 L1939.0 1423.5 L1940.0 1411.3 L1941.0 1394.7 L1942.0 1387.8 L1943.0 1370.9 L1944.0 1354.0 L1945.0 1341.1 L1946.0 1331.8 L1947.0 1326.0 L1948.0 1313.5 L1949.0 1290.8 L1950.0 1277.5 L1951.0 1283.5 L1952.0 1276.5 L1953.0 1288.5 L1954.0 1299.1 L1955.0 1329.0 L1956.0 1349.6 L1957.0 1390.5 L1958.0 1406.7 L1959.0 1435.3 L1960.0 1469.6 L1961.0 1486.2 L1962.0 1521.9 L1963.0 1550.8 L1964.0 1571.0 L1965.0 1604.1 L1966.0 1623.0 L1967.0 1653.7 L1968.0 1685.2 L1969.0 1712.6 L1970.0 1739.9 L1971.0 1741.3 L1972.0 1741.3 L1973.0 1741.3 L1974.0 1741.3 L1975.0 1741.3 L1976.0 1741.3 L1977.0 1720.3 L1978.0 1687.8 L1979.0 1659.3 L1980.0 1617.9 L1981.0 1588.8 L1982.0 1559.9 L1983.0 1521.8 L1984.0 1499.8 L1985.0 1506.9 L1986.0 1504.8 L1987.0 1490.1 L1988.0 1476.4 L1989.0 1465.0 L1990.0 1446.9 L1991.0 1434.3 L1992.0 1416.6 L1993.0 1406.3 L1994.0 1386.8 L1995.0 1379.4 L1996.0 1366.1 L1997.0 1343.4 L1998.0 1327.8 L1999.0 1318.8 L2000.0 1314.1 L2001.0 1287.1 L2002.0 1276.1 L2003.0 1265.5 L2004.0 1264.3 L2005.0 1266.3 L2006.0 1283.6 L2007.0 1300.2 L2008.0 1337.6 L2009.0 1358.4 L2010.0 1384.5 L2011.0 1413.5 L2012.0 1442.7 L2013.0 1473.5 L2014.0 1500.0 L2015.0 1532.7 L2016.0 1558.4 L2017.0 1585.7 L2018.0 1610.8 L2019.0 1635.0 L2020.0 1675.0 L2021.0 1696.6 L2022.0 1724.6 L2023.0 1741.3 L2024.0 1741.3 L2025.0 1741.3 L2026.0 1741.3 L2027.0 1741.3 L2028.0 1741.3 L2029.0 1738.4 L2030.0 1707.8 L2031.0 1677.2 L2032.0 1646.4 L2033.0 1619.4 L2034.0 1578.7 L2035.0 1556.8 L2036.0 1517.3 L2037.0 1518.8 L2038.0 1523.8 L2039.0 1505.3 L2040.0 1495.4 L2041.0 1484.9 L2042.0 1478.5 L2043.0 1464.8 L2044.0 1459.0 L2045.0 1452.9 L2046.0 1435.2 L2047.0 1429.5 L2048.0 1415.7 L2049.0 1408.5 L2050.0 1397.1 L2051.0 1378.0 L2052.0 1375.0 L2053.0 1360.7 L2054.0 1350.4 L2055.0 1341.1 L2056.0 1341.3 L2057.0 1336.1 L2058.0 1345.9 L2059.0 1361.0 L2060.0 1374.5 L2061.0 1403.3 L2062.0 1432.4 L2063.0 1445.1 L2064.0 1475.4 L2065.0 1506.1 L2066.0 1515.3 L2067.0 1550.9 L2068.0 1567.3 L2069.0 1599.8 L2070.0 1615.8 L2071.0 1647.2 L2072.0 1659.3 L2073.0 1689.9 L2074.0 1713.8 L2075.0 1737.7 L2076.0 1741.3 L2077.0 1741.3 L2078.0 1741.3 L2079.0 1741.3 L2080.0 1741.3 L2081.0 1741.3 L2082.0 1722.9 L2083.0 1689.0 L2084.0 1658.6 L2085.0 1618.9 L2086.0 1591.3 L2087.0 1555.6 L2088.0 1513.6 L2089.0 1497.3 L2090.0 1493.8 L2091.0 1494.2 L2092.0 1476.8 L2093.0 1472.5 L2094.0 1454.7 L2095.0 1442.6 L2096.0 1441.9 L2097.0 1423.2 L2098.0 1417.1 L2099.0 1404.3 L2100.0 1385.9 L2101.0 1384.8 L2102.0 1362.9 L2103.0 1349.7 L2104.0 1335.6 L2105.0 1332.9 L2106.0 1326.0 L2107.0 1315.5 L2108.0 1302.4 L2109.0 1297.1 L2110.0 1306.7 L2111.0 1306.5 L2112.0 1324.0 L2113.0 1361.6 L2114.0 1378.1 L2115.0 1404.6 L2116.0 1440.3 L2117.0 1453.3 L2118.0 1492.6 L2119.0 1512.8 L2120.0 1547.0 L2121.0 1563.4 L2122.0 1592.8 L2123.0 1614.7 L2124.0 1642.4 L2125.0 1675.9 L2126.0 1696.7 L2127.0 1723.0 L2128.0 1741.3 L2129.0 1741.3 L2130.0 1741.3 L2131.0 1741.3 L2132.0 1741.3 L2133.0 1741.3 L2134.0 1741.3 L2135.0 1707.6 L2136.0 1675.1 L2137.0 1637.1 L2138.0 1600.6 L2139.0 1578.6 L2140.0 1544.5 L2141.0 1500.6 L2142.0 1490.8 L2143.0 1494.0 L2144.0 1478.4 L2145.0 1475.8 L2146.0 1466.0 L2147.0 1451.3 L2148.0 1441.8 L2149.0 1422.0 L2150.0 1408.8 L2151.0 1396.1 L2152.0 1381.0 L2153.0 1369.8 L2154.0 1354.8 L2155.0 1345.2 L2156.0 1338.2 L2157.0 1322.3 L2158.0 1309.9 L2159.0 1293.7 L2160.0 1288.1 L2161.0 1288.3 L2162.0 1275.4 L2163.0 1274.5 L2164.0 1297.0 L2165.0 1330.2 L2166.0 1351.6 L2167.0 1377.5 L2168.0 1405.9 L2169.0 1426.3 L2170.0 1453.5 L2171.0 1481.7 L2172.0 1521.3 L2173.0 1537.5 L2174.0 1569.3 L2175.0 1599.8 L2176.0 1622.3 L2177.0 1648.4 L2178.0 1679.8 L2179.0 1707.1 L2180.0 1734.5 L2181.0 1741.3 L2182.0 1741.3 L2183.0 1741.3 L2184.0 1741.3 L2185.0 1741.3 L2186.0 1741.3 L2187.0 1726.0 L2188.0 1691.5 L2189.0 1650.0 L2190.0 1618.3 L2191.0 1595.4 L2192.0 1560.1 L2193.0 1522.6 L2194.0 1494.5 L2195.0 1494.2 L2196.0 1483.0 L2197.0 1475.8 L2198.0 1462.3 L2199.0 1452.6 L2200.0 1442.2 L2201.0 1426.1 L2202.0 1423.9 L2203.0 1405.3 L2204.0 1392.4 L2205.0 1385.9 L2206.0 1373.7 L2207.0 1359.0 L2208.0 1352.0 L2209.0 1331.1 L2210.0 1323.5 L2211.0 1314.1 L2212.0 1298.7 L2213.0 1285.9 L2214.0 1288.3 L2215.0 1297.7 L2216.0 1288.4 L2217.0 1314.7 L2218.0 1339.7 L2219.0 1378.6 L2220.0 1404.9 L2221.0 1426.4 L2222.0 1452.8 L2223.0 1477.2 L2224.0 1508.6 L2225.0 1528.7 L2226.0 1555.5 L2227.0 1591.8 L2228.0 1609.6 L2229.0 1636.5 L2230.0 1671.5 L2231.0 1693.1 L2232.0 1719.9 L2233.0 1741.3 L2234.0 1741.3 L2235.0 1741.3 L2236.0 1741.3 L2237.0 1741.3 L2238.0 1741.3 L2239.0 1741.3 L2240.0 1712.2 L2241.0 1679.6 L2242.0 1640.1 L2243.0 1614.2 L2244.0 1577.6 L2245.0 1546.0 L2246.0 1522.0 L2247.0 1507.5 L2248.0 1497.5 L2249.0 1500.1 L2250.0 1478.7 L2251.0 1468.5 L2252.0 1467.9 L2253.0 1444.0 L2254.0 1440.3 L2255.0 1431.5 L2256.0 1409.6 L2257.0 1399.7 L2258.0 1395.4 L2259.0 1377.6 L2260.0 1367.1 L2261.0 1353.0 L2262.0 1340.0 L2263.0 1331.1 L2264.0 1320.9 L2265.0 1311.3 L2266.0 1299.5 L2267.0 1297.2 L2268.0 1304.8 L2269.0 1312.7 L2270.0 1346.0 L2271.0 1359.7 L2272.0 1395.4 L2273.0 1418.1 L2274.0 1445.7 L2275.0 1475.4 L2276.0 1489.7 L2277.0 1517.0 L2278.0 1547.9 L2279.0 1568.5 L2280.0 1597.4 L2281.0 1628.5 L2282.0 1656.2 L2283.0 1679.7 L2284.0 1705.9 L2285.0 1732.1 L2286.0 1741.3 L2287.0 1741.3 L2288.0 1741.3 L2289.0 1741.3 L2290.0 1741.3 L2291.0 1741.3 L2292.0 1729.7 L2293.0 1695.8 L2294.0 1663.2 L2295.0 1624.7 L2296.0 1597.7 L2297.0 1566.8 L2298.0 1528.5 L2299.0 1492.6 L2300.0 1486.1 L2301.0 1497.1 L2302.0 1476.5 L2303.0 1461.2 L2304.0 1449.1 L2305.0 1450.1 L2306.0 1431.5 L2307.0 1421.8 L2308.0 1400.6 L2309.0 1396.0 L2310.0 1380.0 L2311.0 1375.9 L2312.0 1360.4 L2313.0 1342.3 L2314.0 1333.7 L2315.0 1316.3 L2316.0 1306.2 L2317.0 1291.7 L2318.0 1281.6 L2319.0 1277.3 L2320.0 1286.1 L2321.0 1275.3 L2322.0 1302.5 L2323.0 1337.8 L2324.0 1368.8 L2325.0 1389.9 L2326.0 1420.0 L2327.0 1445.6 L2328.0 1465.4 L2329.0 1492.1 L2330.0 1518.4 L2331.0 1560.3 L2332.0 1577.6 L2333.0 1602.0 L2334.0 1631.2 L2335.0 1668.1 L2336.0 1689.3 L2337.0 1716.7 L2338.0 1741.3 L2339.0 1741.3 L2340.0 1741.3 L2341.0 1741.3 L2342.0 1741.3 L2343.0 1741.3 L2344.0 1741.3 L2345.0 1714.4 L2346.0 1680.6 L2347.0 1646.2 L2348.0 1616.9 L2349.0 1579.1 L2350.0 1551.9 L2351.0 1503.7 L2352.0 1489.0 L2353.0 1498.5 L2354.0 1482.3 L2355.0 1472.4 L2356.0 1468.0 L2357.0 1454.9 L2358.0 1449.7 L2359.0 1430.2 L2360.0 1433.6 L2361.0 1423.2 L2362.0 1412.4 L2363.0 1391.6 L2364.0 1392.8 L2365.0 1374.9 L2366.0 1366.7 L2367.0 1348.4 L2368.0 1349.3 L2369.0 1338.6 L2370.0 1327.5 L2371.0 1315.2 L2372.0 1316.7 L2373.0 1316.2 L2374.0 1331.7 L2375.0 1357.5 L2376.0 1385.6 L2377.0 1408.7 L2378.0 1424.9 L2379.0 1453.0 L2380.0 1484.6 L2381.0 1509.6 L2382.0 1530.0 L2383.0 1556.0 L2384.0 1579.1 L2385.0 1597.6 L2386.0 1634.2 L2387.0 1657.8 L2388.0 1679.9 L2389.0 1705.0 L2390.0 1730.0 L2391.0 1741.3 L2392.0 1741.3 L2393.0 1741.3 L2394.0 1741.3 L2395.0 1741.3 L2396.0 1741.3 L2397.0 1733.8 L2398.0 1703.2 L2399.0 1676.2 L2400.0 1647.9 L2401.0 1616.7 L2402.0 1578.0 L2403.0 1545.2 L2404.0 1516.6 L2405.0 1523.2 L2406.0 1511.0 L2407.0 1509.2 L2408.0 1500.6 L2409.0 1485.9 L2410.0 1472.0 L2411.0 1457.4 L2412.0 1442.6 L2413.0 1436.7 L2414.0 1413.3 L2415.0 1415.8 L2416.0 1397.8 L2417.0 1384.8 L2418.0 1368.0 L2419.0 1363.4 L2420.0 1347.9 L2421.0 1330.4 L2422.0 1328.3 L2423.0 1318.1 L2424.0 1305.1 L2425.0 1302.8 L2426.0 1315.9 L2427.0 1326.2 L2428.0 1358.7 L2429.0 1380.4 L2430.0 1405.8 L2431.0 1432.4 L2432.0 1463.0 L2433.0 1480.1 L2434.0 1517.9 L2435.0 1542.9 L2436.0 1555.7 L2437.0 1588.3 L2438.0 1618.8 L2439.0 1632.5 L2440.0 1659.3 L2441.0 1690.0 L2442.0 1715.7 L2443.0 1741.3 L2444.0 1741.3 L2445.0 1741.3 L2446.0 1741.3 L2447.0 1741.3 L2448.0 1741.3 L2449.0 1741.3 L2450.0 1720.5 L2451.0 1690.6 L2452.0 1663.2 L2453.0 1637.7 L2454.0 1601.3 L2455.0 1575.9 L2456.0 1539.7 L2457.0 1516.0 L2458.0 1522.6 L2459.0 1525.5 L2460.0 1504.1 L2461.0 1500.5 L2462.0 1488.5 L2463.0 1477.5 L2464.0 1464.7 L2465.0 1444.0 L2466.0 1445.7 L2467.0 1425.3 L2468.0 1419.6 L2469.0 1407.5 L2470.0 1394.3 L2471.0 1380.8 L2472.0 1376.9 L2473.0 1362.1 L2474.0 1352.9 L2475.0 1340.6 L2476.0 1323.5 L2477.0 1329.0 L2478.0 1327.4 L2479.0 1331.2 L2480.0 1355.9 L2481.0 1377.4 L2482.0 1405.0 L2483.0 1436.0 L2484.0 1457.7 L2485.0 1483.1 L2486.0 1501.0 L2487.0 1531.8 L2488.0 1558.1 L2489.0 1585.8 L2490.0 1608.1 L2491.0 1634.1 L2492.0 1648.3 L2493.0 1678.8 L2494.0 1703.3 L2495.0 1727.8 L2496.0 1741.3 L2497.0 1741.3 L2498.0 1741.3 L2499.0 1741.3 L2500.0 1741.3 L2501.0 1741.3 L2502.0 1737.0 L2503.0 1707.0 L2504.0 1677.1 L2505.0 1642.9 L2506.0 1624.0 L2507.0 1579.7 L2508.0 1556.8 L2509.0 1523.2 L2510.0 1513.3 L2511.0 1513.7 L2512.0 1518.9 L2513.0 1498.4 L2514.0 1492.4 L2515.0 1472.0 L2516.0 1458.5 L2517.0 1459.8 L2518.0 1433.4 L2519.0 1433.3 L2520.0 1411.7 L2521.0 1400.5 L2522.0 1395.4 L2523.0 1376.0 L2524.0 1363.9 L2525.0 1362.2 L2526.0 1343.9 L2527.0 1328.6 L2528.0 1318.3 L2529.0 1313.4 L2530.0 1327.0 L2531.0 1316.7 L2532.0 1330.9 L2533.0 1361.8 L2534.0 1386.9 L2535.0 1417.7 L2536.0 1430.5 L2537.0 1457.2 L2538.0 1488.2 L2539.0 1516.1 L2540.0 1538.4 L2541.0 1569.6 L2542.0 1592.5 L2543.0 1617.8 L2544.0 1638.1 L2545.0 1671.2 L2546.0 1688.7 L2547.0 1713.7 L2548.0 1738.8 L2549.0 1741.3 L2550.0 1741.3 L2551.0 1741.3 L2552.0 1741.3 L2553.0 1741.3 L2554.0 1741.3 L2555.0 1721.2 L2556.0 1687.3 L2557.0 1647.1 L2558.0 1624.2 L2559.0 1591.4 L2560.0 1548.6 L2561.0 1511.6 L2562.0 1486.9 L2563.0 1494.9 L2564.0 1498.2 L2565.0 1479.9 L2566.0 1465.1 L2567.0 1457.7 L2568.0 1446.9 L2569.0 1437.0 L2570.0 1425.7 L2571.0 1425.1 L2572.0 1406.7 L2573.0 1405.3 L2574.0 1400.2 L2575.0 1387.4 L2576.0 1380.3 L2577.0 1370.3 L2578.0 1348.4 L2579.0 1341.2 L2580.0 1328.9 L2581.0 1327.1 L2582.0 1334.4 L2583.0 1322.2 L2584.0 1330.5 L2585.0 1351.4 L2586.0 1378.0 L2587.0 1411.2 L2588.0 1430.1 L2589.0 1460.9 L2590.0 1483.4 L2591.0 1502.0 L2592.0 1535.1 L2593.0 1550.4 L2594.0 1571.5 L2595.0 1596.0 L2596.0 1629.1 L2597.0 1644.3 L2598.0 1676.4 L2599.0 1700.9 L2600.0 1725.4 L2601.0 1741.3 L2602.0 1741.3 L2603.0 1741.3 L2604.0 1741.3 L2605.0 1741.3 L2606.0 1741.3 L2607.0 1739.8 L2608.0 1706.0 L2609.0 1665.0 L2610.0 1645.4" fill="none" stroke="#b5d6f6" stroke-width="2.4" stroke-linejoin="round"/><path d="M1674.0 1529.3 L1675.0 1511.2 L1676.0 1495.2 L1677.0 1485.2 L1678.0 1466.9 L1679.0 1448.4 L1680.0 1438.8 L1681.0 1418.5 L1682.0 1406.7 L1683.0 1385.3 L1684.0 1375.9 L1685.0 1354.7 L1686.0 1345.1 L1687.0 1327.8 L1688.0 1328.3 L1689.0 1326.4 L1690.0 1329.8 L1691.0 1331.2 L1692.0 1343.4 L1693.0 1371.0 L1694.0 1395.6 L1695.0 1422.9 L1696.0 1449.9 L1697.0 1473.0 L1698.0 1496.5 L1699.0 1520.8 L1700.0 1547.6 L1701.0 1576.7 L1702.0 1603.7 L1703.0 1628.6 L1704.0 1658.1 L1705.0 1681.2 L1706.0 1707.3 L1707.0 1733.5 L1708.0 1741.3 L1709.0 1741.3 L1710.0 1741.3 L1711.0 1741.3 L1712.0 1741.3 L1713.0 1741.3 L1714.0 1726.9 L1715.0 1711.2 L1716.0 1695.5 L1717.0 1679.8 L1718.0 1664.3 L1719.0 1645.7 L1720.0 1631.7 L1721.0 1615.7 L1722.0 1604.0 L1723.0 1589.0 L1724.0 1567.5 L1725.0 1556.0 L1726.0 1540.1 L1727.0 1519.6 L1728.0 1510.7 L1729.0 1494.2 L1730.0 1477.0 L1731.0 1458.6 L1732.0 1444.3 L1733.0 1426.0 L1734.0 1416.4 L1735.0 1396.9 L1736.0 1381.1 L1737.0 1366.4 L1738.0 1354.2 L1739.0 1331.5 L1740.0 1331.9 L1741.0 1326.4 L1742.0 1332.0 L1743.0 1332.4 L1744.0 1331.6 L1745.0 1355.6 L1746.0 1377.9 L1747.0 1403.8 L1748.0 1429.9 L1749.0 1459.6 L1750.0 1485.6 L1751.0 1512.1 L1752.0 1539.6 L1753.0 1561.8 L1754.0 1585.8 L1755.0 1617.2 L1756.0 1641.8 L1757.0 1667.4 L1758.0 1693.0 L1759.0 1719.1 L1760.0 1741.3 L1761.0 1741.3 L1762.0 1741.3 L1763.0 1741.3 L1764.0 1741.3 L1765.0 1741.3 L1766.0 1736.3 L1767.0 1722.8 L1768.0 1709.3 L1769.0 1695.8 L1770.0 1682.4 L1771.0 1670.4 L1772.0 1654.1 L1773.0 1641.1 L1774.0 1630.7 L1775.0 1618.5 L1776.0 1603.9 L1777.0 1589.5 L1778.0 1577.6 L1779.0 1558.3 L1780.0 1548.9 L1781.0 1534.7 L1782.0 1520.6 L1783.0 1505.7 L1784.0 1496.6 L1785.0 1479.7 L1786.0 1468.9 L1787.0 1450.1 L1788.0 1440.5 L1789.0 1426.5 L1790.0 1414.4 L1791.0 1399.3 L1792.0 1388.9 L1793.0 1388.6 L1794.0 1390.2 L1795.0 1384.9 L1796.0 1385.6 L1797.0 1398.2 L1798.0 1418.7 L1799.0 1439.7 L1800.0 1458.9 L1801.0 1484.3 L1802.0 1507.1 L1803.0 1527.3 L1804.0 1550.0 L1805.0 1575.5 L1806.0 1597.1 L1807.0 1617.1 L1808.0 1642.6 L1809.0 1661.9 L1810.0 1687.3 L1811.0 1709.8 L1812.0 1732.3 L1813.0 1741.3 L1814.0 1741.3 L1815.0 1741.3 L1816.0 1741.3 L1817.0 1741.3 L1818.0 1741.3 L1819.0 1729.0 L1820.0 1714.1 L1821.0 1699.2 L1822.0 1684.2 L1823.0 1669.4 L1824.0 1657.5 L1825.0 1636.3 L1826.0 1622.8 L1827.0 1609.4 L1828.0 1591.4 L1829.0 1577.3 L1830.0 1563.3 L1831.0 1548.7 L1832.0 1537.6 L1833.0 1517.8 L1834.0 1507.3 L1835.0 1486.2 L1836.0 1471.3 L1837.0 1457.6 L1838.0 1447.9 L1839.0 1430.7 L1840.0 1411.4 L1841.0 1400.7 L1842.0 1381.4 L1843.0 1369.3 L1844.0 1352.8 L1845.0 1350.4 L1846.0 1345.4 L1847.0 1345.3 L1848.0 1351.8 L1849.0 1349.4 L1850.0 1369.6 L1851.0 1395.1 L1852.0 1420.4 L1853.0 1443.9 L1854.0 1465.6 L1855.0 1491.2 L1856.0 1517.4 L1857.0 1543.1 L1858.0 1568.8 L1859.0 1593.7 L1860.0 1620.7 L1861.0 1642.2 L1862.0 1665.8 L1863.0 1692.7 L1864.0 1717.6 L1865.0 1741.3 L1866.0 1741.3 L1867.0 1741.3 L1868.0 1741.3 L1869.0 1741.3 L1870.0 1741.3 L1871.0 1737.5 L1872.0 1723.2 L1873.0 1709.0 L1874.0 1694.8 L1875.0 1680.6 L1876.0 1663.0 L1877.0 1648.9 L1878.0 1637.5 L1879.0 1626.8 L1880.0 1611.1 L1881.0 1595.0 L1882.0 1582.2 L1883.0 1567.5 L1884.0 1553.5 L1885.0 1538.5 L1886.0 1523.3 L1887.0 1513.5 L1888.0 1497.5 L1889.0 1484.2 L1890.0 1466.5 L1891.0 1451.6 L1892.0 1442.4 L1893.0 1421.7 L1894.0 1411.7 L1895.0 1398.2 L1896.0 1380.1 L1897.0 1364.5 L1898.0 1364.6 L1899.0 1371.4 L1900.0 1365.2 L1901.0 1369.2 L1902.0 1375.6 L1903.0 1397.7 L1904.0 1419.9 L1905.0 1448.1 L1906.0 1465.9 L1907.0 1495.3 L1908.0 1512.5 L1909.0 1540.3 L1910.0 1561.1 L1911.0 1589.0 L1912.0 1611.6 L1913.0 1633.5 L1914.0 1660.7 L1915.0 1682.1 L1916.0 1705.8 L1917.0 1729.5 L1918.0 1741.3 L1919.0 1741.3 L1920.0 1741.3 L1921.0 1741.3 L1922.0 1741.3 L1923.0 1741.3 L1924.0 1730.0 L1925.0 1714.3 L1926.0 1698.7 L1927.0 1683.0 L1928.0 1669.5 L1929.0 1649.1 L1930.0 1634.1 L1931.0 1618.3 L1932.0 1601.8 L1933.0 1586.5 L1934.0 1573.1 L1935.0 1560.2 L1936.0 1543.3 L1937.0 1526.2 L1938.0 1513.3 L1939.0 1492.2 L1940.0 1476.3 L1941.0 1467.1 L1942.0 1450.2 L1943.0 1429.6 L1944.0 1413.9 L1945.0 1402.7 L1946.0 1385.4 L1947.0 1366.2 L1948.0 1352.2 L1949.0 1339.8 L1950.0 1326.9 L1951.0 1329.3 L1952.0 1328.3 L1953.0 1332.2 L1954.0 1333.0 L1955.0 1349.0 L1956.0 1373.5 L1957.0 1402.8 L1958.0 1423.6 L1959.0 1451.9 L1960.0 1479.8 L1961.0 1507.4 L1962.0 1527.9 L1963.0 1555.2 L1964.0 1581.8 L1965.0 1611.0 L1966.0 1636.3 L1967.0 1664.2 L1968.0 1687.7 L1969.0 1713.9 L1970.0 1740.0 L1971.0 1741.3 L1972.0 1741.3 L1973.0 1741.3 L1974.0 1741.3 L1975.0 1741.3 L1976.0 1738.6 L1977.0 1722.5 L1978.0 1706.5 L1979.0 1690.5 L1980.0 1674.4 L1981.0 1657.8 L1982.0 1638.8 L1983.0 1623.5 L1984.0 1609.1 L1985.0 1592.8 L1986.0 1579.9 L1987.0 1562.8 L1988.0 1549.7 L1989.0 1527.9 L1990.0 1511.9 L1991.0 1501.7 L1992.0 1478.7 L1993.0 1464.7 L1994.0 1449.0 L1995.0 1437.5 L1996.0 1419.6 L1997.0 1399.3 L1998.0 1387.1 L1999.0 1366.0 L2000.0 1352.5 L2001.0 1338.1 L2002.0 1322.4 L2003.0 1320.9 L2004.0 1321.7 L2005.0 1320.0 L2006.0 1318.4 L2007.0 1321.7 L2008.0 1351.7 L2009.0 1380.7 L2010.0 1404.3 L2011.0 1429.9 L2012.0 1455.2 L2013.0 1485.6 L2014.0 1510.2 L2015.0 1537.3 L2016.0 1566.4 L2017.0 1594.6 L2018.0 1621.6 L2019.0 1641.3 L2020.0 1670.7 L2021.0 1698.5 L2022.0 1725.3 L2023.0 1741.3 L2024.0 1741.3 L2025.0 1741.3 L2026.0 1741.3 L2027.0 1741.3 L2028.0 1741.3 L2029.0 1732.9 L2030.0 1719.5 L2031.0 1706.0 L2032.0 1692.5 L2033.0 1679.0 L2034.0 1662.7 L2035.0 1653.8 L2036.0 1636.9 L2037.0 1622.0 L2038.0 1613.1 L2039.0 1600.7 L2040.0 1582.5 L2041.0 1568.0 L2042.0 1555.2 L2043.0 1541.8 L2044.0 1529.8 L2045.0 1515.9 L2046.0 1502.2 L2047.0 1488.4 L2048.0 1475.4 L2049.0 1459.3 L2050.0 1451.5 L2051.0 1436.8 L2052.0 1423.5 L2053.0 1412.7 L2054.0 1394.1 L2055.0 1386.3 L2056.0 1389.2 L2057.0 1385.1 L2058.0 1389.0 L2059.0 1386.6 L2060.0 1398.5 L2061.0 1420.0 L2062.0 1444.3 L2063.0 1468.1 L2064.0 1488.0 L2065.0 1510.5 L2066.0 1532.7 L2067.0 1560.5 L2068.0 1583.6 L2069.0 1605.9 L2070.0 1627.4 L2071.0 1645.6 L2072.0 1668.5 L2073.0 1693.0 L2074.0 1715.4 L2075.0 1737.9 L2076.0 1741.3 L2077.0 1741.3 L2078.0 1741.3 L2079.0 1741.3 L2080.0 1741.3 L2081.0 1740.3 L2082.0 1725.3 L2083.0 1710.4 L2084.0 1695.4 L2085.0 1680.5 L2086.0 1667.9 L2087.0 1649.2 L2088.0 1636.9 L2089.0 1623.8 L2090.0 1606.8 L2091.0 1588.9 L2092.0 1577.3 L2093.0 1558.7 L2094.0 1547.2 L2095.0 1532.8 L2096.0 1517.6 L2097.0 1498.4 L2098.0 1486.4 L2099.0 1468.4 L2100.0 1455.6 L2101.0 1437.9 L2102.0 1429.6 L2103.0 1408.4 L2104.0 1396.4 L2105.0 1378.7 L2106.0 1367.4 L2107.0 1353.1 L2108.0 1351.9 L2109.0 1345.8 L2110.0 1351.3 L2111.0 1350.8 L2112.0 1350.8 L2113.0 1374.5 L2114.0 1396.9 L2115.0 1425.2 L2116.0 1451.2 L2117.0 1473.1 L2118.0 1497.5 L2119.0 1524.6 L2120.0 1548.5 L2121.0 1576.8 L2122.0 1598.3 L2123.0 1628.0 L2124.0 1650.9 L2125.0 1672.0 L2126.0 1698.9 L2127.0 1723.9 L2128.0 1741.3 L2129.0 1741.3 L2130.0 1741.3 L2131.0 1741.3 L2132.0 1741.3 L2133.0 1741.3 L2134.0 1733.2 L2135.0 1717.5 L2136.0 1701.8 L2137.0 1686.1 L2138.0 1673.0 L2139.0 1652.7 L2140.0 1639.2 L2141.0 1621.4 L2142.0 1610.9 L2143.0 1591.2 L2144.0 1575.4 L2145.0 1561.4 L2146.0 1541.5 L2147.0 1530.2 L2148.0 1517.2 L2149.0 1500.3 L2150.0 1483.3 L2151.0 1470.4 L2152.0 1452.3 L2153.0 1432.7 L2154.0 1422.0 L2155.0 1402.6 L2156.0 1387.3 L2157.0 1374.5 L2158.0 1355.4 L2159.0 1342.4 L2160.0 1332.2 L2161.0 1330.3 L2162.0 1328.7 L2163.0 1331.9 L2164.0 1326.9 L2165.0 1344.4 L2166.0 1370.6 L2167.0 1393.3 L2168.0 1420.5 L2169.0 1448.6 L2170.0 1470.5 L2171.0 1495.8 L2172.0 1526.9 L2173.0 1548.8 L2174.0 1579.1 L2175.0 1606.5 L2176.0 1626.8 L2177.0 1653.2 L2178.0 1682.5 L2179.0 1708.6 L2180.0 1734.8 L2181.0 1741.3 L2182.0 1741.3 L2183.0 1741.3 L2184.0 1741.3 L2185.0 1741.3 L2186.0 1741.3 L2187.0 1726.5 L2188.0 1711.1 L2189.0 1695.8 L2190.0 1680.5 L2191.0 1665.9 L2192.0 1652.0 L2193.0 1632.8 L2194.0 1622.1 L2195.0 1602.2 L2196.0 1587.9 L2197.0 1575.9 L2198.0 1559.0 L2199.0 1541.5 L2200.0 1530.9 L2201.0 1509.2 L2202.0 1498.6 L2203.0 1481.2 L2204.0 1469.6 L2205.0 1447.0 L2206.0 1434.3 L2207.0 1419.0 L2208.0 1408.6 L2209.0 1388.1 L2210.0 1374.9 L2211.0 1359.8 L2212.0 1343.3 L2213.0 1339.1 L2214.0 1341.6 L2215.0 1337.4 L2216.0 1337.9 L2217.0 1340.5 L2218.0 1362.3 L2219.0 1387.8 L2220.0 1416.4 L2221.0 1439.3 L2222.0 1468.4 L2223.0 1488.6 L2224.0 1519.7 L2225.0 1540.5 L2226.0 1570.7 L2227.0 1596.2 L2228.0 1621.8 L2229.0 1646.6 L2230.0 1672.1 L2231.0 1695.4 L2232.0 1720.9 L2233.0 1741.3 L2234.0 1741.3 L2235.0 1741.3 L2236.0 1741.3 L2237.0 1741.3 L2238.0 1741.3 L2239.0 1735.0 L2240.0 1720.1 L2241.0 1705.1 L2242.0 1690.2 L2243.0 1675.2 L2244.0 1662.1 L2245.0 1645.2 L2246.0 1632.7 L2247.0 1613.9 L2248.0 1602.1 L2249.0 1589.1 L2250.0 1570.6 L2251.0 1557.9 L2252.0 1537.4 L2253.0 1527.0 L2254.0 1514.6 L2255.0 1494.5 L2256.0 1477.8 L2257.0 1463.4 L2258.0 1449.7 L2259.0 1438.7 L2260.0 1424.2 L2261.0 1406.1 L2262.0 1389.5 L2263.0 1379.3 L2264.0 1363.2 L2265.0 1350.6 L2266.0 1344.8 L2267.0 1350.1 L2268.0 1348.8 L2269.0 1351.6 L2270.0 1361.4 L2271.0 1387.3 L2272.0 1410.3 L2273.0 1431.3 L2274.0 1460.0 L2275.0 1481.6 L2276.0 1511.5 L2277.0 1531.3 L2278.0 1561.7 L2279.0 1580.4 L2280.0 1606.8 L2281.0 1635.4 L2282.0 1658.9 L2283.0 1682.8 L2284.0 1707.7 L2285.0 1732.6 L2286.0 1741.3 L2287.0 1741.3 L2288.0 1741.3 L2289.0 1741.3 L2290.0 1741.3 L2291.0 1741.3 L2292.0 1727.7 L2293.0 1712.0 L2294.0 1696.3 L2295.0 1680.6 L2296.0 1665.4 L2297.0 1648.3 L2298.0 1630.7 L2299.0 1621.0 L2300.0 1599.8 L2301.0 1589.0 L2302.0 1571.6 L2303.0 1551.7 L2304.0 1541.3 L2305.0 1524.7 L2306.0 1505.5 L2307.0 1490.2 L2308.0 1475.7 L2309.0 1458.9 L2310.0 1448.4 L2311.0 1428.3 L2312.0 1417.5 L2313.0 1395.0 L2314.0 1385.4 L2315.0 1367.7 L2316.0 1350.7 L2317.0 1333.4 L2318.0 1328.0 L2319.0 1331.8 L2320.0 1330.3 L2321.0 1330.4 L2322.0 1333.0 L2323.0 1350.5 L2324.0 1375.5 L2325.0 1400.6 L2326.0 1433.2 L2327.0 1453.3 L2328.0 1485.6 L2329.0 1509.4 L2330.0 1538.4 L2331.0 1562.8 L2332.0 1588.6 L2333.0 1611.7 L2334.0 1638.0 L2335.0 1663.5 L2336.0 1691.7 L2337.0 1717.8 L2338.0 1741.3 L2339.0 1741.3 L2340.0 1741.3 L2341.0 1741.3 L2342.0 1741.3 L2343.0 1741.3 L2344.0 1736.8 L2345.0 1722.5 L2346.0 1708.3 L2347.0 1694.1 L2348.0 1679.9 L2349.0 1665.1 L2350.0 1650.9 L2351.0 1633.6 L2352.0 1621.7 L2353.0 1610.0 L2354.0 1594.4 L2355.0 1578.8 L2356.0 1569.2 L2357.0 1550.7 L2358.0 1539.6 L2359.0 1524.6 L2360.0 1507.9 L2361.0 1495.9 L2362.0 1478.2 L2363.0 1466.1 L2364.0 1448.6 L2365.0 1441.6 L2366.0 1422.8 L2367.0 1412.3 L2368.0 1392.8 L2369.0 1378.6 L2370.0 1364.8 L2371.0 1370.9 L2372.0 1367.7 L2373.0 1369.7 L2374.0 1364.1 L2375.0 1378.6 L2376.0 1401.0 L2377.0 1421.4 L2378.0 1447.0 L2379.0 1472.0 L2380.0 1494.0 L2381.0 1515.0 L2382.0 1541.4 L2383.0 1562.0 L2384.0 1588.8 L2385.0 1615.1 L2386.0 1635.9 L2387.0 1658.4 L2388.0 1683.2 L2389.0 1706.9 L2390.0 1730.6 L2391.0 1741.3 L2392.0 1741.3 L2393.0 1741.3 L2394.0 1741.3 L2395.0 1741.3 L2396.0 1741.3 L2397.0 1730.1 L2398.0 1715.5 L2399.0 1700.9 L2400.0 1686.3 L2401.0 1674.8 L2402.0 1657.8 L2403.0 1642.1 L2404.0 1631.8 L2405.0 1616.5 L2406.0 1598.0 L2407.0 1583.3 L2408.0 1571.1 L2409.0 1555.0 L2410.0 1542.7 L2411.0 1524.6 L2412.0 1507.9 L2413.0 1497.8 L2414.0 1485.6 L2415.0 1469.7 L2416.0 1453.3 L2417.0 1437.9 L2418.0 1422.9 L2419.0 1409.4 L2420.0 1393.4 L2421.0 1378.4 L2422.0 1368.4 L2423.0 1356.1 L2424.0 1360.2 L2425.0 1359.3 L2426.0 1355.6 L2427.0 1354.5 L2428.0 1378.3 L2429.0 1400.8 L2430.0 1423.8 L2431.0 1453.1 L2432.0 1476.5 L2433.0 1501.0 L2434.0 1520.9 L2435.0 1545.1 L2436.0 1574.2 L2437.0 1594.6 L2438.0 1622.2 L2439.0 1640.8 L2440.0 1669.2 L2441.0 1692.7 L2442.0 1717.0 L2443.0 1741.3 L2444.0 1741.3 L2445.0 1741.3 L2446.0 1741.3 L2447.0 1741.3 L2448.0 1741.3 L2449.0 1738.3 L2450.0 1724.4 L2451.0 1710.5 L2452.0 1696.7 L2453.0 1682.8 L2454.0 1669.3 L2455.0 1653.0 L2456.0 1639.6 L2457.0 1630.4 L2458.0 1614.2 L2459.0 1596.4 L2460.0 1583.3 L2461.0 1571.3 L2462.0 1556.1 L2463.0 1544.7 L2464.0 1529.2 L2465.0 1513.1 L2466.0 1505.5 L2467.0 1488.9 L2468.0 1474.8 L2469.0 1464.6 L2470.0 1444.0 L2471.0 1430.9 L2472.0 1419.7 L2473.0 1405.7 L2474.0 1388.7 L2475.0 1380.5 L2476.0 1376.7 L2477.0 1375.5 L2478.0 1380.1 L2479.0 1378.1 L2480.0 1381.5 L2481.0 1402.4 L2482.0 1428.4 L2483.0 1452.4 L2484.0 1470.9 L2485.0 1494.5 L2486.0 1518.8 L2487.0 1545.6 L2488.0 1563.4 L2489.0 1586.4 L2490.0 1613.5 L2491.0 1639.0 L2492.0 1660.0 L2493.0 1682.4 L2494.0 1705.5 L2495.0 1728.6 L2496.0 1741.3 L2497.0 1741.3 L2498.0 1741.3 L2499.0 1741.3 L2500.0 1741.3 L2501.0 1741.3 L2502.0 1731.8 L2503.0 1717.6 L2504.0 1703.3 L2505.0 1689.1 L2506.0 1674.9 L2507.0 1659.1 L2508.0 1644.6 L2509.0 1633.8 L2510.0 1616.5 L2511.0 1601.0 L2512.0 1588.0 L2513.0 1572.0 L2514.0 1560.1 L2515.0 1549.2 L2516.0 1531.8 L2517.0 1520.1 L2518.0 1505.5 L2519.0 1488.7 L2520.0 1472.1 L2521.0 1460.5 L2522.0 1443.9 L2523.0 1433.1 L2524.0 1417.5 L2525.0 1406.1 L2526.0 1393.5 L2527.0 1377.4 L2528.0 1367.8 L2529.0 1367.1 L2530.0 1366.4 L2531.0 1368.3 L2532.0 1365.8 L2533.0 1380.8 L2534.0 1408.8 L2535.0 1428.2 L2536.0 1452.2 L2537.0 1478.1 L2538.0 1505.6 L2539.0 1528.4 L2540.0 1548.0 L2541.0 1575.3 L2542.0 1594.8 L2543.0 1623.0 L2544.0 1645.8 L2545.0 1669.7 L2546.0 1691.5 L2547.0 1715.2 L2548.0 1738.9 L2549.0 1741.3 L2550.0 1741.3 L2551.0 1741.3 L2552.0 1741.3 L2553.0 1741.3 L2554.0 1739.6 L2555.0 1725.8 L2556.0 1711.9 L2557.0 1698.1 L2558.0 1684.2 L2559.0 1667.8 L2560.0 1655.1 L2561.0 1644.2 L2562.0 1626.9 L2563.0 1618.5 L2564.0 1598.7 L2565.0 1590.3 L2566.0 1570.6 L2567.0 1557.7 L2568.0 1542.9 L2569.0 1530.0 L2570.0 1517.5 L2571.0 1506.1 L2572.0 1488.1 L2573.0 1474.1 L2574.0 1464.2 L2575.0 1447.4 L2576.0 1431.6 L2577.0 1421.8 L2578.0 1403.6 L2579.0 1389.6 L2580.0 1380.9 L2581.0 1376.9 L2582.0 1381.0 L2583.0 1379.2 L2584.0 1376.3 L2585.0 1377.8 L2586.0 1400.2 L2587.0 1423.6 L2588.0 1446.0 L2589.0 1470.7 L2590.0 1494.2 L2591.0 1516.5 L2592.0 1541.2 L2593.0 1563.9 L2594.0 1585.6 L2595.0 1607.3 L2596.0 1635.5 L2597.0 1659.5 L2598.0 1680.1 L2599.0 1703.2 L2600.0 1726.3 L2601.0 1741.3 L2602.0 1741.3 L2603.0 1741.3 L2604.0 1741.3 L2605.0 1741.3 L2606.0 1741.3 L2607.0 1733.2 L2608.0 1719.0 L2609.0 1704.8 L2610.0 1690.5" fill="none" stroke="#2e8a0e" stroke-width="2.4" stroke-linejoin="round"/><path d="M1674.0 1498.3 L1675.0 1504.9 L1676.0 1502.2 L1677.0 1492.8 L1678.0 1492.5 L1679.0 1488.6 L1680.0 1483.2 L1681.0 1488.5 L1682.0 1476.8 L1683.0 1480.2 L1684.0 1475.9 L1685.0 1465.7 L1686.0 1464.7 L1687.0 1444.7 L1688.0 1421.4 L1689.0 1406.5 L1690.0 1369.6 L1691.0 1355.6 L1692.0 1334.7 L1693.0 1317.9 L1694.0 1307.1 L1695.0 1308.4 L1696.0 1297.5 L1697.0 1303.7 L1698.0 1302.8 L1699.0 1300.8 L1700.0 1300.2 L1701.0 1289.1 L1702.0 1288.1 L1703.0 1283.0 L1704.0 1288.8 L1705.0 1283.6 L1706.0 1280.9 L1707.0 1275.9 L1708.0 1741.3 L1709.0 1741.3 L1710.0 1741.3 L1711.0 1741.3 L1712.0 1741.3 L1713.0 1732.7 L1714.0 1713.3 L1715.0 1693.9 L1716.0 1674.5 L1717.0 1657.8 L1718.0 1641.1 L1719.0 1611.5 L1720.0 1596.3 L1721.0 1568.0 L1722.0 1551.9 L1723.0 1529.5 L1724.0 1528.7 L1725.0 1498.3 L1726.0 1499.6 L1727.0 1487.9 L1728.0 1490.6 L1729.0 1487.5 L1730.0 1478.1 L1731.0 1480.5 L1732.0 1484.5 L1733.0 1470.2 L1734.0 1466.7 L1735.0 1474.5 L1736.0 1468.7 L1737.0 1470.7 L1738.0 1455.7 L1739.0 1443.3 L1740.0 1437.3 L1741.0 1414.5 L1742.0 1406.8 L1743.0 1399.9 L1744.0 1369.0 L1745.0 1367.9 L1746.0 1348.0 L1747.0 1337.0 L1748.0 1349.2 L1749.0 1331.3 L1750.0 1336.6 L1751.0 1344.0 L1752.0 1340.1 L1753.0 1325.8 L1754.0 1321.1 L1755.0 1316.6 L1756.0 1322.2 L1757.0 1325.6 L1758.0 1314.6 L1759.0 1308.7 L1760.0 1741.3 L1761.0 1741.3 L1762.0 1741.3 L1763.0 1741.3 L1764.0 1741.3 L1765.0 1741.3 L1766.0 1725.7 L1767.0 1708.2 L1768.0 1690.8 L1769.0 1664.2 L1770.0 1650.6 L1771.0 1635.6 L1772.0 1612.5 L1773.0 1598.8 L1774.0 1592.7 L1775.0 1569.4 L1776.0 1554.4 L1777.0 1541.6 L1778.0 1532.7 L1779.0 1515.6 L1780.0 1517.2 L1781.0 1514.0 L1782.0 1517.7 L1783.0 1514.2 L1784.0 1508.8 L1785.0 1501.2 L1786.0 1502.1 L1787.0 1507.2 L1788.0 1491.7 L1789.0 1491.4 L1790.0 1486.4 L1791.0 1478.5 L1792.0 1459.4 L1793.0 1446.3 L1794.0 1427.7 L1795.0 1423.3 L1796.0 1390.5 L1797.0 1389.8 L1798.0 1360.4 L1799.0 1360.5 L1800.0 1361.8 L1801.0 1346.1 L1802.0 1349.6 L1803.0 1347.7 L1804.0 1339.8 L1805.0 1340.6 L1806.0 1336.7 L1807.0 1341.6 L1808.0 1334.0 L1809.0 1323.4 L1810.0 1325.5 L1811.0 1314.8 L1812.0 1327.7 L1813.0 1741.3 L1814.0 1741.3 L1815.0 1741.3 L1816.0 1741.3 L1817.0 1741.3 L1818.0 1735.3 L1819.0 1717.8 L1820.0 1700.4 L1821.0 1682.9 L1822.0 1662.1 L1823.0 1640.1 L1824.0 1624.9 L1825.0 1608.7 L1826.0 1598.1 L1827.0 1569.6 L1828.0 1559.7 L1829.0 1542.2 L1830.0 1533.0 L1831.0 1532.3 L1832.0 1518.1 L1833.0 1516.3 L1834.0 1505.5 L1835.0 1514.9 L1836.0 1503.5 L1837.0 1497.6 L1838.0 1505.4 L1839.0 1501.2 L1840.0 1493.8 L1841.0 1493.4 L1842.0 1497.3 L1843.0 1493.2 L1844.0 1465.9 L1845.0 1460.5 L1846.0 1443.2 L1847.0 1413.7 L1848.0 1395.1 L1849.0 1377.5 L1850.0 1358.3 L1851.0 1339.5 L1852.0 1346.6 L1853.0 1342.1 L1854.0 1344.3 L1855.0 1345.9 L1856.0 1342.5 L1857.0 1327.8 L1858.0 1329.6 L1859.0 1329.8 L1860.0 1330.9 L1861.0 1318.1 L1862.0 1326.0 L1863.0 1313.3 L1864.0 1305.1 L1865.0 1741.3 L1866.0 1741.3 L1867.0 1741.3 L1868.0 1741.3 L1869.0 1741.3 L1870.0 1741.3 L1871.0 1728.0 L1872.0 1711.4 L1873.0 1694.7 L1874.0 1678.0 L1875.0 1664.8 L1876.0 1645.6 L1877.0 1625.7 L1878.0 1615.0 L1879.0 1593.0 L1880.0 1576.7 L1881.0 1563.8 L1882.0 1548.1 L1883.0 1535.4 L1884.0 1540.6 L1885.0 1533.1 L1886.0 1530.6 L1887.0 1517.8 L1888.0 1520.7 L1889.0 1510.0 L1890.0 1520.6 L1891.0 1506.2 L1892.0 1500.5 L1893.0 1505.6 L1894.0 1504.7 L1895.0 1502.8 L1896.0 1491.1 L1897.0 1482.6 L1898.0 1458.5 L1899.0 1438.2 L1900.0 1422.1 L1901.0 1420.0 L1902.0 1396.6 L1903.0 1386.1 L1904.0 1363.9 L1905.0 1376.7 L1906.0 1373.9 L1907.0 1372.3 L1908.0 1360.2 L1909.0 1366.5 L1910.0 1353.2 L1911.0 1353.9 L1912.0 1347.6 L1913.0 1338.7 L1914.0 1342.8 L1915.0 1340.2 L1916.0 1328.7 L1917.0 1336.1 L1918.0 1741.3 L1919.0 1741.3 L1920.0 1741.3 L1921.0 1741.3 L1922.0 1741.3 L1923.0 1736.7 L1924.0 1718.1 L1925.0 1699.5 L1926.0 1680.9 L1927.0 1657.0 L1928.0 1646.2 L1929.0 1630.3 L1930.0 1601.2 L1931.0 1583.3 L1932.0 1573.2 L1933.0 1551.2 L1934.0 1531.7 L1935.0 1515.3 L1936.0 1508.7 L1937.0 1502.7 L1938.0 1496.3 L1939.0 1494.1 L1940.0 1494.9 L1941.0 1500.6 L1942.0 1491.0 L1943.0 1489.4 L1944.0 1491.6 L1945.0 1473.9 L1946.0 1476.5 L1947.0 1467.7 L1948.0 1469.2 L1949.0 1464.2 L1950.0 1454.4 L1951.0 1444.9 L1952.0 1427.6 L1953.0 1423.6 L1954.0 1405.6 L1955.0 1399.7 L1956.0 1384.4 L1957.0 1367.0 L1958.0 1374.8 L1959.0 1369.9 L1960.0 1367.5 L1961.0 1372.5 L1962.0 1351.9 L1963.0 1361.7 L1964.0 1351.7 L1965.0 1352.4 L1966.0 1343.8 L1967.0 1340.9 L1968.0 1349.1 L1969.0 1341.0 L1970.0 1345.3 L1971.0 1741.3 L1972.0 1741.3 L1973.0 1741.3 L1974.0 1741.3 L1975.0 1741.3 L1976.0 1728.9 L1977.0 1711.1 L1978.0 1693.2 L1979.0 1675.4 L1980.0 1654.6 L1981.0 1642.3 L1982.0 1618.9 L1983.0 1597.6 L1984.0 1585.8 L1985.0 1570.7 L1986.0 1542.7 L1987.0 1532.3 L1988.0 1522.8 L1989.0 1510.0 L1990.0 1514.4 L1991.0 1511.5 L1992.0 1506.3 L1993.0 1505.3 L1994.0 1509.4 L1995.0 1505.9 L1996.0 1504.7 L1997.0 1491.0 L1998.0 1496.3 L1999.0 1493.9 L2000.0 1487.6 L2001.0 1476.2 L2002.0 1476.7 L2003.0 1463.7 L2004.0 1441.6 L2005.0 1432.4 L2006.0 1426.0 L2007.0 1415.1 L2008.0 1409.3 L2009.0 1402.0 L2010.0 1386.4 L2011.0 1399.2 L2012.0 1396.0 L2013.0 1383.1 L2014.0 1388.3 L2015.0 1376.5 L2016.0 1385.1 L2017.0 1372.1 L2018.0 1379.3 L2019.0 1372.6 L2020.0 1371.4 L2021.0 1353.7 L2022.0 1357.8 L2023.0 1741.3 L2024.0 1741.3 L2025.0 1741.3 L2026.0 1741.3 L2027.0 1741.3 L2028.0 1738.9 L2029.0 1722.2 L2030.0 1705.5 L2031.0 1688.8 L2032.0 1670.9 L2033.0 1664.7 L2034.0 1634.6 L2035.0 1619.0 L2036.0 1609.6 L2037.0 1596.7 L2038.0 1573.1 L2039.0 1546.0 L2040.0 1531.7 L2041.0 1539.3 L2042.0 1523.8 L2043.0 1525.2 L2044.0 1518.6 L2045.0 1515.2 L2046.0 1524.5 L2047.0 1512.4 L2048.0 1517.1 L2049.0 1505.4 L2050.0 1509.8 L2051.0 1504.7 L2052.0 1499.2 L2053.0 1503.2 L2054.0 1486.8 L2055.0 1473.3 L2056.0 1452.6 L2057.0 1421.2 L2058.0 1409.2 L2059.0 1392.0 L2060.0 1378.3 L2061.0 1360.5 L2062.0 1346.8 L2063.0 1341.4 L2064.0 1349.7 L2065.0 1332.7 L2066.0 1335.3 L2067.0 1340.0 L2068.0 1330.2 L2069.0 1334.2 L2070.0 1322.4 L2071.0 1315.3 L2072.0 1311.3 L2073.0 1310.8 L2074.0 1310.5 L2075.0 1310.2 L2076.0 1741.3 L2077.0 1741.3 L2078.0 1741.3 L2079.0 1741.3 L2080.0 1741.3 L2081.0 1730.2 L2082.0 1711.6 L2083.0 1693.0 L2084.0 1674.4 L2085.0 1658.2 L2086.0 1645.9 L2087.0 1617.9 L2088.0 1605.1 L2089.0 1575.5 L2090.0 1557.1 L2091.0 1546.3 L2092.0 1523.7 L2093.0 1506.0 L2094.0 1502.7 L2095.0 1501.1 L2096.0 1509.6 L2097.0 1506.0 L2098.0 1496.5 L2099.0 1498.3 L2100.0 1483.4 L2101.0 1491.5 L2102.0 1477.2 L2103.0 1483.2 L2104.0 1484.5 L2105.0 1471.7 L2106.0 1466.1 L2107.0 1456.7 L2108.0 1452.2 L2109.0 1440.9 L2110.0 1415.2 L2111.0 1401.2 L2112.0 1394.9 L2113.0 1380.7 L2114.0 1373.7 L2115.0 1361.4 L2116.0 1366.3 L2117.0 1352.0 L2118.0 1357.5 L2119.0 1355.9 L2120.0 1354.8 L2121.0 1344.3 L2122.0 1340.2 L2123.0 1344.0 L2124.0 1334.1 L2125.0 1337.1 L2126.0 1336.5 L2127.0 1330.2 L2128.0 1741.3 L2129.0 1741.3 L2130.0 1741.3 L2131.0 1741.3 L2132.0 1741.3 L2133.0 1740.5 L2134.0 1721.8 L2135.0 1703.2 L2136.0 1684.6 L2137.0 1670.7 L2138.0 1651.1 L2139.0 1631.7 L2140.0 1606.2 L2141.0 1587.0 L2142.0 1566.1 L2143.0 1551.2 L2144.0 1530.9 L2145.0 1518.1 L2146.0 1505.5 L2147.0 1512.9 L2148.0 1509.0 L2149.0 1502.5 L2150.0 1500.8 L2151.0 1493.8 L2152.0 1488.1 L2153.0 1485.0 L2154.0 1492.5 L2155.0 1474.2 L2156.0 1489.7 L2157.0 1485.1 L2158.0 1481.1 L2159.0 1456.8 L2160.0 1451.6 L2161.0 1444.1 L2162.0 1426.5 L2163.0 1414.6 L2164.0 1400.9 L2165.0 1379.6 L2166.0 1353.5 L2167.0 1354.1 L2168.0 1353.1 L2169.0 1346.7 L2170.0 1346.1 L2171.0 1336.7 L2172.0 1336.3 L2173.0 1337.0 L2174.0 1338.1 L2175.0 1339.9 L2176.0 1328.5 L2177.0 1322.9 L2178.0 1330.1 L2179.0 1332.2 L2180.0 1318.6 L2181.0 1741.3 L2182.0 1741.3 L2183.0 1741.3 L2184.0 1741.3 L2185.0 1741.3 L2186.0 1731.9 L2187.0 1712.9 L2188.0 1693.9 L2189.0 1674.9 L2190.0 1655.6 L2191.0 1642.0 L2192.0 1624.2 L2193.0 1607.7 L2194.0 1584.8 L2195.0 1570.4 L2196.0 1548.4 L2197.0 1513.3 L2198.0 1500.8 L2199.0 1506.1 L2200.0 1502.3 L2201.0 1495.8 L2202.0 1494.2 L2203.0 1487.0 L2204.0 1496.9 L2205.0 1493.6 L2206.0 1487.0 L2207.0 1473.6 L2208.0 1469.0 L2209.0 1477.0 L2210.0 1462.3 L2211.0 1472.4 L2212.0 1453.4 L2213.0 1448.5 L2214.0 1421.6 L2215.0 1415.7 L2216.0 1408.9 L2217.0 1393.4 L2218.0 1386.4 L2219.0 1375.5 L2220.0 1368.5 L2221.0 1353.3 L2222.0 1353.3 L2223.0 1347.6 L2224.0 1346.4 L2225.0 1344.8 L2226.0 1346.6 L2227.0 1341.6 L2228.0 1333.6 L2229.0 1338.6 L2230.0 1331.9 L2231.0 1329.4 L2232.0 1322.7 L2233.0 1741.3 L2234.0 1741.3 L2235.0 1741.3 L2236.0 1741.3 L2237.0 1741.3 L2238.0 1741.3 L2239.0 1724.4 L2240.0 1706.6 L2241.0 1688.8 L2242.0 1671.7 L2243.0 1653.8 L2244.0 1633.6 L2245.0 1626.4 L2246.0 1606.9 L2247.0 1590.0 L2248.0 1561.3 L2249.0 1536.5 L2250.0 1524.8 L2251.0 1524.4 L2252.0 1519.8 L2253.0 1504.7 L2254.0 1510.2 L2255.0 1516.9 L2256.0 1498.3 L2257.0 1506.5 L2258.0 1506.6 L2259.0 1492.6 L2260.0 1486.8 L2261.0 1498.2 L2262.0 1478.9 L2263.0 1484.7 L2264.0 1477.1 L2265.0 1448.5 L2266.0 1442.2 L2267.0 1411.0 L2268.0 1397.9 L2269.0 1375.3 L2270.0 1364.9 L2271.0 1352.4 L2272.0 1332.8 L2273.0 1327.5 L2274.0 1337.5 L2275.0 1334.8 L2276.0 1331.1 L2277.0 1321.3 L2278.0 1327.4 L2279.0 1325.6 L2280.0 1307.3 L2281.0 1309.2 L2282.0 1306.7 L2283.0 1304.9 L2284.0 1299.3 L2285.0 1300.8 L2286.0 1741.3 L2287.0 1741.3 L2288.0 1741.3 L2289.0 1741.3 L2290.0 1741.3 L2291.0 1733.9 L2292.0 1715.3 L2293.0 1696.7 L2294.0 1678.1 L2295.0 1668.2 L2296.0 1641.2 L2297.0 1619.9 L2298.0 1603.8 L2299.0 1575.7 L2300.0 1558.8 L2301.0 1540.7 L2302.0 1529.3 L2303.0 1502.0 L2304.0 1500.4 L2305.0 1509.6 L2306.0 1507.8 L2307.0 1498.1 L2308.0 1505.2 L2309.0 1488.0 L2310.0 1491.2 L2311.0 1487.1 L2312.0 1484.9 L2313.0 1484.1 L2314.0 1475.6 L2315.0 1482.5 L2316.0 1464.2 L2317.0 1456.0 L2318.0 1446.0 L2319.0 1427.0 L2320.0 1425.4 L2321.0 1407.0 L2322.0 1385.3 L2323.0 1375.7 L2324.0 1355.9 L2325.0 1359.9 L2326.0 1351.6 L2327.0 1354.8 L2328.0 1347.6 L2329.0 1342.1 L2330.0 1344.1 L2331.0 1338.8 L2332.0 1341.6 L2333.0 1329.4 L2334.0 1333.0 L2335.0 1321.0 L2336.0 1329.2 L2337.0 1328.4 L2338.0 1741.3 L2339.0 1741.3 L2340.0 1741.3 L2341.0 1741.3 L2342.0 1741.3 L2343.0 1741.3 L2344.0 1725.6 L2345.0 1706.9 L2346.0 1688.3 L2347.0 1676.8 L2348.0 1649.6 L2349.0 1637.7 L2350.0 1621.5 L2351.0 1599.6 L2352.0 1581.7 L2353.0 1559.3 L2354.0 1541.7 L2355.0 1527.6 L2356.0 1501.1 L2357.0 1513.7 L2358.0 1498.2 L2359.0 1507.4 L2360.0 1498.3 L2361.0 1485.9 L2362.0 1485.7 L2363.0 1489.2 L2364.0 1482.4 L2365.0 1478.2 L2366.0 1484.6 L2367.0 1476.7 L2368.0 1473.6 L2369.0 1470.2 L2370.0 1451.3 L2371.0 1450.0 L2372.0 1422.2 L2373.0 1415.2 L2374.0 1398.9 L2375.0 1389.0 L2376.0 1377.9 L2377.0 1369.0 L2378.0 1362.5 L2379.0 1352.6 L2380.0 1362.8 L2381.0 1364.6 L2382.0 1359.9 L2383.0 1342.8 L2384.0 1338.2 L2385.0 1350.1 L2386.0 1340.2 L2387.0 1336.0 L2388.0 1342.3 L2389.0 1328.0 L2390.0 1333.4 L2391.0 1741.3 L2392.0 1741.3 L2393.0 1741.3 L2394.0 1741.3 L2395.0 1741.3 L2396.0 1736.4 L2397.0 1719.7 L2398.0 1703.0 L2399.0 1686.3 L2400.0 1666.3 L2401.0 1653.2 L2402.0 1631.8 L2403.0 1612.2 L2404.0 1605.2 L2405.0 1590.4 L2406.0 1567.1 L2407.0 1559.7 L2408.0 1542.6 L2409.0 1526.7 L2410.0 1532.8 L2411.0 1524.2 L2412.0 1522.4 L2413.0 1514.2 L2414.0 1526.2 L2415.0 1521.5 L2416.0 1517.4 L2417.0 1512.7 L2418.0 1510.3 L2419.0 1507.9 L2420.0 1497.7 L2421.0 1502.0 L2422.0 1484.8 L2423.0 1460.4 L2424.0 1453.6 L2425.0 1432.9 L2426.0 1409.2 L2427.0 1403.4 L2428.0 1391.4 L2429.0 1378.0 L2430.0 1360.8 L2431.0 1359.3 L2432.0 1351.2 L2433.0 1353.0 L2434.0 1362.2 L2435.0 1357.8 L2436.0 1356.2 L2437.0 1354.2 L2438.0 1335.9 L2439.0 1339.4 L2440.0 1346.7 L2441.0 1336.8 L2442.0 1327.0 L2443.0 1741.3 L2444.0 1741.3 L2445.0 1741.3 L2446.0 1741.3 L2447.0 1741.3 L2448.0 1741.3 L2449.0 1729.2 L2450.0 1712.9 L2451.0 1696.6 L2452.0 1680.3 L2453.0 1672.0 L2454.0 1652.3 L2455.0 1638.0 L2456.0 1612.2 L2457.0 1591.5 L2458.0 1586.2 L2459.0 1571.1 L2460.0 1554.1 L2461.0 1536.5 L2462.0 1543.1 L2463.0 1526.6 L2464.0 1539.2 L2465.0 1524.2 L2466.0 1517.5 L2467.0 1524.8 L2468.0 1519.0 L2469.0 1506.5 L2470.0 1511.9 L2471.0 1514.2 L2472.0 1507.9 L2473.0 1495.0 L2474.0 1493.0 L2475.0 1483.5 L2476.0 1456.0 L2477.0 1435.9 L2478.0 1416.4 L2479.0 1398.3 L2480.0 1379.7 L2481.0 1358.0 L2482.0 1351.1 L2483.0 1347.7 L2484.0 1341.2 L2485.0 1333.4 L2486.0 1337.6 L2487.0 1336.3 L2488.0 1335.6 L2489.0 1332.0 L2490.0 1335.1 L2491.0 1316.7 L2492.0 1313.3 L2493.0 1320.2 L2494.0 1315.1 L2495.0 1321.1 L2496.0 1741.3 L2497.0 1741.3 L2498.0 1741.3 L2499.0 1741.3 L2500.0 1741.3 L2501.0 1738.1 L2502.0 1721.8 L2503.0 1705.5 L2504.0 1689.3 L2505.0 1664.9 L2506.0 1648.1 L2507.0 1640.8 L2508.0 1633.5 L2509.0 1609.1 L2510.0 1595.5 L2511.0 1580.4 L2512.0 1568.4 L2513.0 1545.1 L2514.0 1539.3 L2515.0 1533.6 L2516.0 1533.8 L2517.0 1535.4 L2518.0 1521.4 L2519.0 1525.2 L2520.0 1522.5 L2521.0 1521.8 L2522.0 1515.8 L2523.0 1516.4 L2524.0 1503.4 L2525.0 1497.7 L2526.0 1496.8 L2527.0 1484.5 L2528.0 1472.7 L2529.0 1444.5 L2530.0 1423.8 L2531.0 1411.9 L2532.0 1384.0 L2533.0 1377.4 L2534.0 1355.9 L2535.0 1343.6 L2536.0 1341.2 L2537.0 1345.1 L2538.0 1335.6 L2539.0 1341.2 L2540.0 1341.7 L2541.0 1338.4 L2542.0 1326.3 L2543.0 1330.3 L2544.0 1329.1 L2545.0 1323.2 L2546.0 1311.9 L2547.0 1308.9 L2548.0 1315.6 L2549.0 1741.3 L2550.0 1741.3 L2551.0 1741.3 L2552.0 1741.3 L2553.0 1741.3 L2554.0 1729.3 L2555.0 1710.7 L2556.0 1692.1 L2557.0 1680.1 L2558.0 1654.9 L2559.0 1639.2 L2560.0 1621.2 L2561.0 1593.2 L2562.0 1570.8 L2563.0 1562.4 L2564.0 1537.5 L2565.0 1527.7 L2566.0 1503.9 L2567.0 1498.9 L2568.0 1513.2 L2569.0 1496.5 L2570.0 1507.1 L2571.0 1496.5 L2572.0 1498.9 L2573.0 1483.6 L2574.0 1481.1 L2575.0 1478.0 L2576.0 1488.6 L2577.0 1473.3 L2578.0 1480.3 L2579.0 1465.0 L2580.0 1453.0 L2581.0 1429.2 L2582.0 1424.4 L2583.0 1398.0 L2584.0 1373.8 L2585.0 1360.4 L2586.0 1333.3 L2587.0 1329.1 L2588.0 1322.4 L2589.0 1326.7 L2590.0 1323.7 L2591.0 1315.1 L2592.0 1323.6 L2593.0 1303.7 L2594.0 1308.9 L2595.0 1311.3 L2596.0 1301.2 L2597.0 1306.9 L2598.0 1290.9 L2599.0 1288.6 L2600.0 1298.2 L2601.0 1741.3 L2602.0 1741.3 L2603.0 1741.3 L2604.0 1741.3 L2605.0 1741.3 L2606.0 1739.5 L2607.0 1720.9 L2608.0 1702.3 L2609.0 1683.7 L2610.0 1672.5" fill="none" stroke="#55108a" stroke-width="2.8" stroke-linejoin="round"/><path d="M1674.0 1514.1 L1675.0 1518.9 L1676.0 1521.3 L1677.0 1519.6 L1678.0 1522.0 L1679.0 1511.7 L1680.0 1523.7 L1681.0 1523.2 L1682.0 1511.8 L1683.0 1516.5 L1684.0 1514.7 L1685.0 1518.1 L1686.0 1522.5 L1687.0 1513.2 L1688.0 1472.0 L1689.0 1421.6 L1690.0 1374.6 L1691.0 1331.3 L1692.0 1294.7 L1693.0 1291.7 L1694.0 1314.4 L1695.0 1345.2 L1696.0 1375.4 L1697.0 1417.3 L1698.0 1447.3 L1699.0 1467.5 L1700.0 1502.1 L1701.0 1534.2 L1702.0 1565.1 L1703.0 1602.4 L1704.0 1637.8 L1705.0 1661.8 L1706.0 1696.4 L1707.0 1688.8 L1708.0 1683.2 L1709.0 1695.9 L1710.0 1708.7 L1711.0 1721.5 L1712.0 1734.2 L1713.0 1726.9 L1714.0 1694.5 L1715.0 1664.2 L1716.0 1635.2 L1717.0 1591.1 L1718.0 1565.1 L1719.0 1533.4 L1720.0 1514.5 L1721.0 1508.4 L1722.0 1516.1 L1723.0 1516.2 L1724.0 1513.7 L1725.0 1507.8 L1726.0 1514.8 L1727.0 1506.3 L1728.0 1505.0 L1729.0 1510.5 L1730.0 1518.0 L1731.0 1516.7 L1732.0 1514.5 L1733.0 1515.0 L1734.0 1513.4 L1735.0 1519.0 L1736.0 1509.3 L1737.0 1513.2 L1738.0 1516.2 L1739.0 1518.8 L1740.0 1479.2 L1741.0 1439.0 L1742.0 1405.8 L1743.0 1357.0 L1744.0 1316.5 L1745.0 1276.9 L1746.0 1300.9 L1747.0 1330.5 L1748.0 1362.5 L1749.0 1393.4 L1750.0 1424.1 L1751.0 1460.2 L1752.0 1486.9 L1753.0 1526.7 L1754.0 1552.0 L1755.0 1590.7 L1756.0 1610.5 L1757.0 1653.0 L1758.0 1679.0 L1759.0 1710.6 L1760.0 1676.2 L1761.0 1688.9 L1762.0 1701.7 L1763.0 1714.4 L1764.0 1727.2 L1765.0 1740.0 L1766.0 1715.3 L1767.0 1686.3 L1768.0 1651.5 L1769.0 1632.8 L1770.0 1599.4 L1771.0 1576.3 L1772.0 1540.0 L1773.0 1530.2 L1774.0 1532.9 L1775.0 1534.9 L1776.0 1532.2 L1777.0 1539.1 L1778.0 1537.4 L1779.0 1533.7 L1780.0 1541.9 L1781.0 1528.7 L1782.0 1539.8 L1783.0 1535.5 L1784.0 1529.4 L1785.0 1541.8 L1786.0 1530.7 L1787.0 1542.1 L1788.0 1534.4 L1789.0 1528.6 L1790.0 1536.6 L1791.0 1537.3 L1792.0 1528.8 L1793.0 1491.4 L1794.0 1464.3 L1795.0 1432.1 L1796.0 1396.0 L1797.0 1356.8 L1798.0 1331.2 L1799.0 1358.5 L1800.0 1399.2 L1801.0 1417.1 L1802.0 1447.6 L1803.0 1480.3 L1804.0 1502.7 L1805.0 1534.5 L1806.0 1556.2 L1807.0 1590.6 L1808.0 1609.4 L1809.0 1642.0 L1810.0 1674.3 L1811.0 1695.7 L1812.0 1693.7 L1813.0 1681.9 L1814.0 1694.7 L1815.0 1707.4 L1816.0 1720.2 L1817.0 1732.9 L1818.0 1731.3 L1819.0 1702.3 L1820.0 1671.1 L1821.0 1646.4 L1822.0 1615.8 L1823.0 1583.6 L1824.0 1551.2 L1825.0 1540.4 L1826.0 1540.2 L1827.0 1536.8 L1828.0 1537.8 L1829.0 1540.6 L1830.0 1527.7 L1831.0 1536.2 L1832.0 1537.6 L1833.0 1538.2 L1834.0 1527.8 L1835.0 1538.0 L1836.0 1537.3 L1837.0 1531.3 L1838.0 1536.4 L1839.0 1531.9 L1840.0 1533.7 L1841.0 1534.4 L1842.0 1539.7 L1843.0 1531.3 L1844.0 1528.8 L1845.0 1516.1 L1846.0 1463.0 L1847.0 1428.6 L1848.0 1387.1 L1849.0 1339.8 L1850.0 1293.6 L1851.0 1312.7 L1852.0 1344.2 L1853.0 1367.1 L1854.0 1408.0 L1855.0 1438.3 L1856.0 1469.8 L1857.0 1490.3 L1858.0 1533.4 L1859.0 1551.4 L1860.0 1583.7 L1861.0 1620.3 L1862.0 1646.3 L1863.0 1677.4 L1864.0 1707.7 L1865.0 1674.9 L1866.0 1687.6 L1867.0 1700.4 L1868.0 1713.2 L1869.0 1725.9 L1870.0 1738.7 L1871.0 1719.3 L1872.0 1691.6 L1873.0 1663.1 L1874.0 1629.7 L1875.0 1613.9 L1876.0 1588.0 L1877.0 1555.4 L1878.0 1550.5 L1879.0 1546.9 L1880.0 1543.7 L1881.0 1549.0 L1882.0 1540.1 L1883.0 1551.2 L1884.0 1546.4 L1885.0 1538.5 L1886.0 1541.3 L1887.0 1541.5 L1888.0 1540.4 L1889.0 1549.9 L1890.0 1539.9 L1891.0 1542.0 L1892.0 1543.7 L1893.0 1538.7 L1894.0 1543.5 L1895.0 1548.0 L1896.0 1541.4 L1897.0 1543.7 L1898.0 1511.0 L1899.0 1470.7 L1900.0 1419.2 L1901.0 1385.0 L1902.0 1337.3 L1903.0 1317.7 L1904.0 1339.6 L1905.0 1368.5 L1906.0 1407.3 L1907.0 1429.6 L1908.0 1459.3 L1909.0 1497.2 L1910.0 1514.4 L1911.0 1549.3 L1912.0 1579.4 L1913.0 1612.3 L1914.0 1633.6 L1915.0 1668.5 L1916.0 1692.0 L1917.0 1698.5 L1918.0 1680.6 L1919.0 1693.4 L1920.0 1706.1 L1921.0 1718.9 L1922.0 1731.7 L1923.0 1733.7 L1924.0 1702.6 L1925.0 1671.5 L1926.0 1644.8 L1927.0 1616.3 L1928.0 1574.8 L1929.0 1549.0 L1930.0 1521.8 L1931.0 1519.5 L1932.0 1520.9 L1933.0 1525.2 L1934.0 1524.2 L1935.0 1522.6 L1936.0 1526.6 L1937.0 1527.4 L1938.0 1519.9 L1939.0 1527.9 L1940.0 1522.5 L1941.0 1527.3 L1942.0 1520.9 L1943.0 1516.8 L1944.0 1526.6 L1945.0 1526.6 L1946.0 1520.1 L1947.0 1521.1 L1948.0 1518.6 L1949.0 1525.6 L1950.0 1500.0 L1951.0 1455.1 L1952.0 1419.5 L1953.0 1379.1 L1954.0 1325.2 L1955.0 1289.1 L1956.0 1286.4 L1957.0 1330.8 L1958.0 1353.5 L1959.0 1389.0 L1960.0 1421.8 L1961.0 1453.9 L1962.0 1481.3 L1963.0 1521.7 L1964.0 1549.0 L1965.0 1570.2 L1966.0 1607.6 L1967.0 1633.5 L1968.0 1673.5 L1969.0 1704.3 L1970.0 1676.7 L1971.0 1686.4 L1972.0 1699.1 L1973.0 1711.9 L1974.0 1724.6 L1975.0 1737.4 L1976.0 1720.7 L1977.0 1690.9 L1978.0 1666.7 L1979.0 1638.5 L1980.0 1596.9 L1981.0 1576.7 L1982.0 1544.3 L1983.0 1526.6 L1984.0 1525.1 L1985.0 1536.5 L1986.0 1537.4 L1987.0 1523.7 L1988.0 1524.0 L1989.0 1524.9 L1990.0 1525.6 L1991.0 1538.0 L1992.0 1527.6 L1993.0 1536.5 L1994.0 1531.3 L1995.0 1537.9 L1996.0 1535.0 L1997.0 1530.0 L1998.0 1535.1 L1999.0 1530.2 L2000.0 1534.2 L2001.0 1530.8 L2002.0 1527.0 L2003.0 1494.5 L2004.0 1439.6 L2005.0 1403.6 L2006.0 1348.5 L2007.0 1300.9 L2008.0 1273.0 L2009.0 1303.4 L2010.0 1334.0 L2011.0 1358.6 L2012.0 1393.5 L2013.0 1434.5 L2014.0 1457.6 L2015.0 1499.9 L2016.0 1526.4 L2017.0 1560.5 L2018.0 1583.9 L2019.0 1619.2 L2020.0 1648.4 L2021.0 1686.3 L2022.0 1703.4 L2023.0 1679.3 L2024.0 1692.1 L2025.0 1704.9 L2026.0 1717.6 L2027.0 1730.4 L2028.0 1737.3 L2029.0 1709.6 L2030.0 1681.9 L2031.0 1661.6 L2032.0 1620.9 L2033.0 1596.6 L2034.0 1575.3 L2035.0 1546.7 L2036.0 1537.6 L2037.0 1551.0 L2038.0 1547.7 L2039.0 1539.3 L2040.0 1544.4 L2041.0 1549.7 L2042.0 1544.9 L2043.0 1545.6 L2044.0 1538.4 L2045.0 1552.2 L2046.0 1548.8 L2047.0 1544.5 L2048.0 1547.5 L2049.0 1546.5 L2050.0 1550.2 L2051.0 1547.3 L2052.0 1547.2 L2053.0 1543.0 L2054.0 1549.0 L2055.0 1524.7 L2056.0 1494.8 L2057.0 1452.7 L2058.0 1418.3 L2059.0 1377.1 L2060.0 1339.6 L2061.0 1340.1 L2062.0 1379.6 L2063.0 1399.1 L2064.0 1430.8 L2065.0 1460.3 L2066.0 1476.4 L2067.0 1507.6 L2068.0 1543.8 L2069.0 1566.8 L2070.0 1585.5 L2071.0 1618.3 L2072.0 1645.6 L2073.0 1675.1 L2074.0 1702.6 L2075.0 1681.5 L2076.0 1685.1 L2077.0 1697.8 L2078.0 1710.6 L2079.0 1723.4 L2080.0 1736.1 L2081.0 1722.8 L2082.0 1691.8 L2083.0 1664.9 L2084.0 1633.6 L2085.0 1603.9 L2086.0 1560.3 L2087.0 1530.2 L2088.0 1523.6 L2089.0 1520.3 L2090.0 1525.5 L2091.0 1526.5 L2092.0 1520.3 L2093.0 1516.4 L2094.0 1515.4 L2095.0 1523.9 L2096.0 1517.8 L2097.0 1520.6 L2098.0 1526.6 L2099.0 1513.4 L2100.0 1513.7 L2101.0 1526.4 L2102.0 1514.3 L2103.0 1514.6 L2104.0 1523.8 L2105.0 1520.1 L2106.0 1514.1 L2107.0 1526.8 L2108.0 1492.2 L2109.0 1443.8 L2110.0 1406.3 L2111.0 1366.0 L2112.0 1324.4 L2113.0 1292.8 L2114.0 1323.1 L2115.0 1352.9 L2116.0 1375.6 L2117.0 1406.5 L2118.0 1436.2 L2119.0 1476.5 L2120.0 1499.1 L2121.0 1539.6 L2122.0 1568.7 L2123.0 1590.1 L2124.0 1622.7 L2125.0 1658.3 L2126.0 1685.0 L2127.0 1708.3 L2128.0 1678.1 L2129.0 1690.8 L2130.0 1703.6 L2131.0 1716.4 L2132.0 1729.1 L2133.0 1739.9 L2134.0 1708.8 L2135.0 1677.8 L2136.0 1645.7 L2137.0 1619.8 L2138.0 1588.7 L2139.0 1550.7 L2140.0 1524.6 L2141.0 1518.1 L2142.0 1521.3 L2143.0 1520.9 L2144.0 1519.4 L2145.0 1517.7 L2146.0 1522.9 L2147.0 1515.6 L2148.0 1521.1 L2149.0 1526.5 L2150.0 1525.7 L2151.0 1528.1 L2152.0 1516.9 L2153.0 1528.4 L2154.0 1524.5 L2155.0 1522.3 L2156.0 1517.2 L2157.0 1513.5 L2158.0 1517.0 L2159.0 1527.6 L2160.0 1503.9 L2161.0 1459.9 L2162.0 1418.6 L2163.0 1381.3 L2164.0 1340.7 L2165.0 1295.6 L2166.0 1290.4 L2167.0 1319.7 L2168.0 1356.9 L2169.0 1377.9 L2170.0 1415.0 L2171.0 1447.7 L2172.0 1474.7 L2173.0 1504.4 L2174.0 1538.3 L2175.0 1571.0 L2176.0 1597.3 L2177.0 1630.3 L2178.0 1666.0 L2179.0 1697.9 L2180.0 1686.4 L2181.0 1683.8 L2182.0 1696.6 L2183.0 1709.3 L2184.0 1722.1 L2185.0 1734.9 L2186.0 1725.6 L2187.0 1693.9 L2188.0 1662.9 L2189.0 1625.4 L2190.0 1605.7 L2191.0 1559.3 L2192.0 1534.9 L2193.0 1517.8 L2194.0 1512.6 L2195.0 1515.3 L2196.0 1515.9 L2197.0 1514.2 L2198.0 1523.1 L2199.0 1519.4 L2200.0 1517.7 L2201.0 1519.2 L2202.0 1511.1 L2203.0 1516.8 L2204.0 1517.4 L2205.0 1514.4 L2206.0 1523.0 L2207.0 1515.9 L2208.0 1521.7 L2209.0 1511.1 L2210.0 1516.9 L2211.0 1512.8 L2212.0 1522.1 L2213.0 1483.7 L2214.0 1440.7 L2215.0 1403.8 L2216.0 1371.7 L2217.0 1326.9 L2218.0 1285.7 L2219.0 1314.7 L2220.0 1339.3 L2221.0 1368.4 L2222.0 1407.2 L2223.0 1434.3 L2224.0 1468.4 L2225.0 1492.6 L2226.0 1520.2 L2227.0 1552.9 L2228.0 1585.0 L2229.0 1625.1 L2230.0 1656.2 L2231.0 1681.2 L2232.0 1712.2 L2233.0 1676.8 L2234.0 1689.6 L2235.0 1702.3 L2236.0 1715.1 L2237.0 1727.8 L2238.0 1740.6 L2239.0 1713.2 L2240.0 1683.5 L2241.0 1654.6 L2242.0 1626.2 L2243.0 1594.0 L2244.0 1566.5 L2245.0 1530.5 L2246.0 1530.4 L2247.0 1523.6 L2248.0 1532.4 L2249.0 1532.4 L2250.0 1526.4 L2251.0 1524.2 L2252.0 1529.5 L2253.0 1528.1 L2254.0 1535.9 L2255.0 1524.9 L2256.0 1535.5 L2257.0 1527.3 L2258.0 1531.8 L2259.0 1533.5 L2260.0 1526.4 L2261.0 1531.4 L2262.0 1528.6 L2263.0 1536.4 L2264.0 1536.2 L2265.0 1529.1 L2266.0 1481.2 L2267.0 1445.5 L2268.0 1400.9 L2269.0 1353.4 L2270.0 1316.7 L2271.0 1309.6 L2272.0 1326.5 L2273.0 1366.6 L2274.0 1391.5 L2275.0 1423.5 L2276.0 1454.8 L2277.0 1490.1 L2278.0 1512.4 L2279.0 1548.1 L2280.0 1573.8 L2281.0 1602.9 L2282.0 1634.1 L2283.0 1660.3 L2284.0 1695.6 L2285.0 1691.3 L2286.0 1682.5 L2287.0 1695.3 L2288.0 1708.1 L2289.0 1720.8 L2290.0 1733.6 L2291.0 1729.0 L2292.0 1698.0 L2293.0 1673.8 L2294.0 1641.2 L2295.0 1602.4 L2296.0 1580.8 L2297.0 1537.3 L2298.0 1518.4 L2299.0 1515.8 L2300.0 1524.0 L2301.0 1514.5 L2302.0 1527.9 L2303.0 1522.2 L2304.0 1525.9 L2305.0 1518.3 L2306.0 1519.3 L2307.0 1518.0 L2308.0 1519.5 L2309.0 1516.6 L2310.0 1525.9 L2311.0 1521.6 L2312.0 1519.7 L2313.0 1514.3 L2314.0 1527.2 L2315.0 1524.0 L2316.0 1523.0 L2317.0 1522.8 L2318.0 1502.0 L2319.0 1453.4 L2320.0 1408.4 L2321.0 1369.2 L2322.0 1328.6 L2323.0 1276.9 L2324.0 1301.1 L2325.0 1328.9 L2326.0 1360.6 L2327.0 1389.6 L2328.0 1422.5 L2329.0 1461.9 L2330.0 1484.0 L2331.0 1517.2 L2332.0 1543.3 L2333.0 1582.7 L2334.0 1611.2 L2335.0 1639.1 L2336.0 1677.4 L2337.0 1709.0 L2338.0 1675.5 L2339.0 1688.3 L2340.0 1701.0 L2341.0 1713.8 L2342.0 1726.6 L2343.0 1739.3 L2344.0 1715.1 L2345.0 1684.0 L2346.0 1645.5 L2347.0 1625.1 L2348.0 1589.2 L2349.0 1562.6 L2350.0 1528.3 L2351.0 1513.4 L2352.0 1523.2 L2353.0 1526.6 L2354.0 1520.0 L2355.0 1520.7 L2356.0 1518.9 L2357.0 1521.1 L2358.0 1525.9 L2359.0 1519.3 L2360.0 1517.8 L2361.0 1513.6 L2362.0 1528.6 L2363.0 1528.3 L2364.0 1519.0 L2365.0 1526.8 L2366.0 1515.6 L2367.0 1516.4 L2368.0 1513.3 L2369.0 1522.3 L2370.0 1521.9 L2371.0 1482.0 L2372.0 1444.3 L2373.0 1417.4 L2374.0 1378.1 L2375.0 1340.4 L2376.0 1313.4 L2377.0 1349.7 L2378.0 1375.5 L2379.0 1407.2 L2380.0 1441.0 L2381.0 1459.4 L2382.0 1493.6 L2383.0 1516.6 L2384.0 1547.2 L2385.0 1585.1 L2386.0 1611.7 L2387.0 1638.3 L2388.0 1667.0 L2389.0 1693.4 L2390.0 1696.1 L2391.0 1681.3 L2392.0 1694.0 L2393.0 1706.8 L2394.0 1719.5 L2395.0 1732.3 L2396.0 1733.1 L2397.0 1705.5 L2398.0 1677.8 L2399.0 1647.4 L2400.0 1616.0 L2401.0 1590.2 L2402.0 1564.8 L2403.0 1545.2 L2404.0 1543.0 L2405.0 1538.9 L2406.0 1544.3 L2407.0 1547.4 L2408.0 1540.6 L2409.0 1546.2 L2410.0 1541.2 L2411.0 1539.8 L2412.0 1548.0 L2413.0 1541.5 L2414.0 1547.7 L2415.0 1544.4 L2416.0 1549.4 L2417.0 1542.1 L2418.0 1540.3 L2419.0 1539.0 L2420.0 1547.2 L2421.0 1537.7 L2422.0 1548.3 L2423.0 1531.2 L2424.0 1474.3 L2425.0 1437.6 L2426.0 1392.0 L2427.0 1353.9 L2428.0 1314.4 L2429.0 1320.3 L2430.0 1345.7 L2431.0 1377.0 L2432.0 1407.3 L2433.0 1442.9 L2434.0 1476.8 L2435.0 1500.5 L2436.0 1528.9 L2437.0 1562.4 L2438.0 1588.7 L2439.0 1610.6 L2440.0 1651.5 L2441.0 1676.7 L2442.0 1706.3 L2443.0 1674.2 L2444.0 1687.0 L2445.0 1699.8 L2446.0 1712.5 L2447.0 1725.3 L2448.0 1738.0 L2449.0 1721.2 L2450.0 1694.2 L2451.0 1670.2 L2452.0 1646.1 L2453.0 1608.8 L2454.0 1581.9 L2455.0 1552.8 L2456.0 1550.6 L2457.0 1557.0 L2458.0 1550.0 L2459.0 1549.7 L2460.0 1554.4 L2461.0 1543.2 L2462.0 1546.1 L2463.0 1549.3 L2464.0 1545.5 L2465.0 1555.2 L2466.0 1544.0 L2467.0 1544.8 L2468.0 1543.0 L2469.0 1547.0 L2470.0 1555.3 L2471.0 1546.3 L2472.0 1550.3 L2473.0 1546.4 L2474.0 1549.4 L2475.0 1557.3 L2476.0 1505.5 L2477.0 1469.5 L2478.0 1431.1 L2479.0 1399.1 L2480.0 1353.5 L2481.0 1331.4 L2482.0 1352.3 L2483.0 1378.4 L2484.0 1411.9 L2485.0 1436.0 L2486.0 1468.3 L2487.0 1487.6 L2488.0 1524.6 L2489.0 1554.8 L2490.0 1581.7 L2491.0 1609.2 L2492.0 1635.6 L2493.0 1668.7 L2494.0 1691.1 L2495.0 1701.0 L2496.0 1680.0 L2497.0 1692.7 L2498.0 1705.5 L2499.0 1718.3 L2500.0 1731.0 L2501.0 1736.0 L2502.0 1709.0 L2503.0 1682.0 L2504.0 1660.4 L2505.0 1631.5 L2506.0 1608.4 L2507.0 1572.1 L2508.0 1549.5 L2509.0 1554.2 L2510.0 1552.0 L2511.0 1552.5 L2512.0 1555.2 L2513.0 1546.6 L2514.0 1553.0 L2515.0 1553.6 L2516.0 1556.3 L2517.0 1548.0 L2518.0 1552.2 L2519.0 1550.6 L2520.0 1555.4 L2521.0 1550.1 L2522.0 1547.0 L2523.0 1555.7 L2524.0 1556.5 L2525.0 1550.8 L2526.0 1554.6 L2527.0 1548.2 L2528.0 1531.9 L2529.0 1486.8 L2530.0 1447.4 L2531.0 1407.3 L2532.0 1370.5 L2533.0 1321.3 L2534.0 1324.7 L2535.0 1354.2 L2536.0 1385.2 L2537.0 1407.4 L2538.0 1439.6 L2539.0 1472.9 L2540.0 1506.9 L2541.0 1525.4 L2542.0 1552.7 L2543.0 1588.5 L2544.0 1617.6 L2545.0 1642.9 L2546.0 1674.7 L2547.0 1703.6 L2548.0 1679.1 L2549.0 1685.7 L2550.0 1698.5 L2551.0 1711.2 L2552.0 1724.0 L2553.0 1736.8 L2554.0 1721.3 L2555.0 1690.2 L2556.0 1655.9 L2557.0 1628.6 L2558.0 1601.1 L2559.0 1570.2 L2560.0 1529.4 L2561.0 1519.2 L2562.0 1514.6 L2563.0 1522.6 L2564.0 1517.9 L2565.0 1518.4 L2566.0 1516.5 L2567.0 1515.1 L2568.0 1521.7 L2569.0 1528.2 L2570.0 1521.3 L2571.0 1523.2 L2572.0 1521.6 L2573.0 1526.0 L2574.0 1516.9 L2575.0 1519.4 L2576.0 1526.7 L2577.0 1527.0 L2578.0 1516.1 L2579.0 1516.4 L2580.0 1523.6 L2581.0 1489.3 L2582.0 1452.3 L2583.0 1421.5 L2584.0 1388.7 L2585.0 1353.7 L2586.0 1319.7 L2587.0 1349.1 L2588.0 1370.7 L2589.0 1408.0 L2590.0 1436.8 L2591.0 1457.8 L2592.0 1489.4 L2593.0 1514.7 L2594.0 1548.2 L2595.0 1571.0 L2596.0 1603.0 L2597.0 1635.9 L2598.0 1657.6 L2599.0 1688.3 L2600.0 1705.8 L2601.0 1678.7 L2602.0 1691.5 L2603.0 1704.2 L2604.0 1717.0 L2605.0 1729.8 L2606.0 1738.3 L2607.0 1707.3 L2608.0 1676.2 L2609.0 1651.6 L2610.0 1607.5" fill="none" stroke="#2e8a0e" stroke-width="2.6" stroke-linejoin="round"/><path d="M1707.3 1271.9 V1700" stroke="#55108a" stroke-width="2.8"/><path d="M1759.8 1310.2 V1700" stroke="#55108a" stroke-width="2.8"/><path d="M1812.4 1319.8 V1700" stroke="#55108a" stroke-width="2.8"/><path d="M1864.9 1310.2 V1700" stroke="#55108a" stroke-width="2.8"/><path d="M1917.5 1334.2 V1700" stroke="#55108a" stroke-width="2.8"/><path d="M1970.0 1338.9 V1700" stroke="#55108a" stroke-width="2.8"/><path d="M2022.6 1358.1 V1700" stroke="#55108a" stroke-width="2.8"/><path d="M2075.2 1310.2 V1700" stroke="#55108a" stroke-width="2.8"/><path d="M2127.7 1329.4 V1700" stroke="#55108a" stroke-width="2.8"/><path d="M2180.2 1319.8 V1700" stroke="#55108a" stroke-width="2.8"/><path d="M2232.8 1329.4 V1700" stroke="#55108a" stroke-width="2.8"/><path d="M2285.3 1300.6 V1700" stroke="#55108a" stroke-width="2.8"/><path d="M2337.9 1319.8 V1700" stroke="#55108a" stroke-width="2.8"/><path d="M2390.4 1329.4 V1700" stroke="#55108a" stroke-width="2.8"/><path d="M2443.0 1329.4 V1700" stroke="#55108a" stroke-width="2.8"/><path d="M2495.6 1310.2 V1700" stroke="#55108a" stroke-width="2.8"/><path d="M2548.1 1310.2 V1700" stroke="#55108a" stroke-width="2.8"/><path d="M2600.6 1291.0 V1700" stroke="#55108a" stroke-width="2.8"/></g><path d="M1674 1263 V1700" stroke="#a9cdf0" stroke-width="2.4"/><path d="M1662 1263.3 H1674" stroke="#a9cdf0" stroke-width="2"/><path d="M1662 1310.2 H1674" stroke="#a9cdf0" stroke-width="2"/><path d="M1662 1406.0 H1674" stroke="#a9cdf0" stroke-width="2"/><path d="M1662 1501.8 H1674" stroke="#a9cdf0" stroke-width="2"/><path d="M1662 1597.6 H1674" stroke="#a9cdf0" stroke-width="2"/></svg>
<div class="t" style="left:1514.5px;top:1192.9px;font-size:21.0px;color:#333;font-weight:400;font-family:'Liberation Sans', sans-serif;">44.9</div>
<div class="t" style="left:1532.0px;top:1239.9px;font-size:21.0px;color:#333;font-weight:400;font-family:'Liberation Sans', sans-serif;">40</div>
<div class="t" style="left:1532.0px;top:1335.7px;font-size:21.0px;color:#333;font-weight:400;font-family:'Liberation Sans', sans-serif;">30</div>
<div class="t" style="left:1532.0px;top:1431.5px;font-size:21.0px;color:#333;font-weight:400;font-family:'Liberation Sans', sans-serif;">20</div>
<div class="t" style="left:1532.0px;top:1527.3px;font-size:21.0px;color:#333;font-weight:400;font-family:'Liberation Sans', sans-serif;">10</div>
<div class="b" style="left:1786.0px;top:1202.7px;width:84.6px;height:30.3px;background:#e8a0c8;border-radius:3px;"></div>
<div class="t" style="left:1790.4px;top:1207.7px;font-size:21.0px;color:#fff;font-weight:400;font-family:'Liberation Sans', sans-serif;">ACTIVE</div>
<div class="b" style="left:1975.5px;top:1202.7px;width:53.5px;height:30.3px;background:#2e7d0a;border-radius:3px;"></div>
<div class="t" style="left:1981.8px;top:1207.7px;font-size:21.0px;color:#fff;font-weight:400;font-family:'Liberation Sans', sans-serif;">45.1</div>
<div class="b" style="left:2147.0px;top:1202.7px;width:54.0px;height:30.3px;background:#4a0a7a;border-radius:3px;"></div>
<div class="t" style="left:2153.6px;top:1207.7px;font-size:21.0px;color:#fff;font-weight:400;font-family:'Liberation Sans', sans-serif;">48.5</div>
<div class="b" style="left:2319.0px;top:1202.7px;width:54.0px;height:30.3px;background:#2e7d0a;border-radius:3px;"></div>
<div class="t" style="left:2325.6px;top:1207.7px;font-size:21.0px;color:#fff;font-weight:400;font-family:'Liberation Sans', sans-serif;">54.2</div>
<div class="b" style="left:944.0px;top:217.0px;width:683.0px;height:873.0px;background:#fff;border:2px solid #e2e2e2;border-radius:8px;box-sizing:border-box;box-shadow:0 4px 26px rgba(0,0,0,0.16);"></div>
<svg class="b" style="left:970.0px;top:202.0px;" width="42.0" height="20.0" viewBox="1070.0 262.0 42.0 20.0"><path d="M1077.5 278.5 L1090 265.5 L1102.5 278.5 Z" fill="#fff" stroke="#dedede" stroke-width="2.2"/><rect x="1079.5" y="277.6" width="21" height="3.5" fill="#fff"/></svg>
<svg class="b" style="left:934.0px;top:134.0px;" width="184.0" height="67.5" viewBox="1034.0 194.0 184.0 67.5"><path d="M1036.0 197.9 L1216.0 197.9" stroke="#7a12f2" stroke-width="3.8" stroke-dasharray="23.00 7.00" stroke-dashoffset="11.50"/><path d="M1036.0 257.6 L1216.0 257.6" stroke="#7a12f2" stroke-width="3.8" stroke-dasharray="23.00 7.00" stroke-dashoffset="11.50"/><path d="M1037.9 196.0 L1037.9 259.5" stroke="#7a12f2" stroke-width="3.8" stroke-dasharray="24.75 7.00" stroke-dashoffset="12.38"/><path d="M1214.1 196.0 L1214.1 259.5" stroke="#7a12f2" stroke-width="3.8" stroke-dasharray="24.75 7.00" stroke-dashoffset="12.38"/></svg>
<svg class="b" style="left:966.0px;top:248.0px;" width="646.0" height="183.6" viewBox="1066.0 308.0 646.0 183.6"><path d="M1068.0 311.9 L1710.0 311.9" stroke="#7a12f2" stroke-width="3.8" stroke-dasharray="23.57 7.00" stroke-dashoffset="11.79"/><path d="M1068.0 487.7 L1710.0 487.7" stroke="#7a12f2" stroke-width="3.8" stroke-dasharray="23.57 7.00" stroke-dashoffset="11.79"/><path d="M1069.9 310.0 L1069.9 489.6" stroke="#7a12f2" stroke-width="3.8" stroke-dasharray="22.93 7.00" stroke-dashoffset="11.47"/><path d="M1708.1 310.0 L1708.1 489.6" stroke="#7a12f2" stroke-width="3.8" stroke-dasharray="22.93 7.00" stroke-dashoffset="11.47"/></svg>
<svg class="b" style="left:966.0px;top:478.5px;" width="646.0" height="183.5" viewBox="1066.0 538.5 646.0 183.5"><path d="M1068.0 542.4 L1710.0 542.4" stroke="#7a12f2" stroke-width="3.8" stroke-dasharray="23.57 7.00" stroke-dashoffset="11.79"/><path d="M1068.0 718.1 L1710.0 718.1" stroke="#7a12f2" stroke-width="3.8" stroke-dasharray="23.57 7.00" stroke-dashoffset="11.79"/><path d="M1069.9 540.5 L1069.9 720.0" stroke="#7a12f2" stroke-width="3.8" stroke-dasharray="22.92 7.00" stroke-dashoffset="11.46"/><path d="M1708.1 540.5 L1708.1 720.0" stroke="#7a12f2" stroke-width="3.8" stroke-dasharray="22.92 7.00" stroke-dashoffset="11.46"/></svg>
<svg class="b" style="left:966.0px;top:708.6px;" width="646.0" height="238.4" viewBox="1066.0 768.6 646.0 238.4"><path d="M1068.0 772.5 L1710.0 772.5" stroke="#7a12f2" stroke-width="3.8" stroke-dasharray="23.57 7.00" stroke-dashoffset="11.79"/><path d="M1068.0 1003.1 L1710.0 1003.1" stroke="#7a12f2" stroke-width="3.8" stroke-dasharray="23.57 7.00" stroke-dashoffset="11.79"/><path d="M1069.9 770.6 L1069.9 1005.0" stroke="#7a12f2" stroke-width="3.8" stroke-dasharray="22.30 7.00" stroke-dashoffset="11.15"/><path d="M1708.1 770.6 L1708.1 1005.0" stroke="#7a12f2" stroke-width="3.8" stroke-dasharray="22.30 7.00" stroke-dashoffset="11.15"/></svg>
<svg class="b" style="left:977.0px;top:270.8px;" width="34.0" height="34.0" viewBox="1077.0 330.8 34.0 34.0"><circle cx="1094.0" cy="347.8" r="15.8" fill="#0a5cc0"/><circle cx="1094.0" cy="347.8" r="6.2" fill="#fff"/></svg>
<div class="t" style="left:1026.0px;top:271.7px;font-size:29.0px;color:#222;font-weight:400;font-family:'Liberation Sans', sans-serif;transform:scaleX(0.908);">Fixed range</div>
<div class="b" style="left:1024.8px;top:326.6px;width:568.6px;height:62.7px;background:#fff;border:2px solid #d9d9d9;border-radius:6px;box-sizing:border-box;"></div>
<div class="b" style="left:1026.8px;top:328.6px;width:98.6px;height:58.7px;background:#efefef;border-right:2px solid #d9d9d9;border-radius:5px 0 0 5px;"></div>
<div class="t" style="left:1050.6px;top:345.1px;font-size:29.0px;color:#222;font-weight:400;font-family:'Liberation Sans', sans-serif;transform:scaleX(0.883);">Last</div>
<div class="t" style="left:1149.0px;top:345.1px;font-size:29.0px;color:#222;font-weight:400;font-family:'Liberation Sans', sans-serif;transform:scaleX(0.939);">180d</div>
<div class="b" style="left:978.0px;top:452.0px;width:266.0px;height:2.0px;background:#dedede;"></div>
<div class="b" style="left:1326.0px;top:452.0px;width:268.5px;height:2.0px;background:#dedede;"></div>
<div class="t" style="left:1268.8px;top:441.2px;font-size:24.5px;color:#222;font-weight:700;font-family:'Liberation Sans', sans-serif;transform:scaleX(0.882);">OR</div>
<svg class="b" style="left:977.0px;top:507.0px;" width="34.0" height="34.0" viewBox="1077.0 567.0 34.0 34.0"><circle cx="1094.0" cy="584.0" r="14.6" fill="#fff" stroke="#c8c8c8" stroke-width="2.4"/></svg>
<div class="t" style="left:1026.0px;top:507.1px;font-size:29.0px;color:#222;font-weight:400;font-family:'Liberation Sans', sans-serif;transform:scaleX(0.953);">Fixed start time</div>
<div class="b" style="left:1024.8px;top:563.0px;width:280.5px;height:62.0px;background:#fff;border:2px solid #d9d9d9;border-radius:6px;box-sizing:border-box;"></div>
<div class="b" style="left:1315.0px;top:563.0px;width:278.5px;height:62.0px;background:#fff;border:2px solid #d9d9d9;border-radius:6px;box-sizing:border-box;"></div>
<div class="t" style="left:1050.6px;top:579.4px;font-size:29.0px;color:#222;font-weight:400;font-family:'Liberation Sans', sans-serif;transform:scaleX(1.038);">11/19/2024</div>
<div class="t" style="left:1340.0px;top:579.4px;font-size:29.0px;color:#222;font-weight:400;font-family:'Liberation Sans', sans-serif;transform:scaleX(0.958);">01:34:29 PM</div>
<svg class="b" style="left:1256.0px;top:576.0px;" width="34.0" height="34.0" viewBox="1356.0 636.0 34.0 34.0"><g fill="none" stroke="#999" stroke-width="1.9"><rect x="1360.6" y="641.2" width="24.9" height="24.6" rx="2"/><path d="M1360.6 648.9 H1385.5"/></g><rect x="1365.2" y="637.9" width="3.8" height="6" fill="#999"/><rect x="1377" y="637.9" width="3.8" height="6" fill="#999"/><rect x="1375.1" y="655.5" width="7.6" height="7.4" fill="#999"/></svg>
<svg class="b" style="left:1545.0px;top:578.0px;" width="33.0" height="32.0" viewBox="1645.0 638.0 33.0 32.0"><circle cx="1661" cy="653.3" r="12.5" fill="none" stroke="#999" stroke-width="1.9"/><path d="M1660 645.9 V654.4 H1668.5" fill="none" stroke="#999" stroke-width="2"/></svg>
<div class="b" style="left:978.0px;top:671.6px;width:266.0px;height:2.0px;background:#dedede;"></div>
<div class="b" style="left:1326.0px;top:671.6px;width:268.5px;height:2.0px;background:#dedede;"></div>
<div class="t" style="left:1268.8px;top:661.2px;font-size:24.5px;color:#222;font-weight:700;font-family:'Liberation Sans', sans-serif;transform:scaleX(0.882);">OR</div>
<svg class="b" style="left:976.8px;top:726.8px;" width="34.0" height="34.0" viewBox="1076.8 786.8 34.0 34.0"><circle cx="1093.8" cy="803.8" r="14.6" fill="#fff" stroke="#c8c8c8" stroke-width="2.4"/></svg>
<div class="t" style="left:1025.9px;top:727.4px;font-size:29.0px;color:#222;font-weight:400;font-family:'Liberation Sans', sans-serif;transform:scaleX(0.948);">Custom period</div>
<div class="b" style="left:1024.8px;top:783.0px;width:280.5px;height:62.3px;background:#fff;border:2px solid #d9d9d9;border-radius:6px;box-sizing:border-box;"></div>
<div class="b" style="left:1315.0px;top:783.0px;width:278.5px;height:62.3px;background:#fff;border:2px solid #d9d9d9;border-radius:6px;box-sizing:border-box;"></div>
<div class="t" style="left:1050.6px;top:799.4px;font-size:29.0px;color:#222;font-weight:400;font-family:'Liberation Sans', sans-serif;transform:scaleX(1.038);">11/19/2024</div>
<div class="t" style="left:1340.0px;top:799.4px;font-size:29.0px;color:#222;font-weight:400;font-family:'Liberation Sans', sans-serif;transform:scaleX(0.958);">01:34:29 PM</div>
<svg class="b" style="left:1256.0px;top:796.1px;" width="34.0" height="34.0" viewBox="1356.0 856.1 34.0 34.0"><g fill="none" stroke="#999" stroke-width="1.9"><rect x="1360.6" y="861.4" width="24.9" height="24.6" rx="2"/><path d="M1360.6 869.0 H1385.5"/></g><rect x="1365.2" y="858.0" width="3.8" height="6" fill="#999"/><rect x="1377" y="858.0" width="3.8" height="6" fill="#999"/><rect x="1375.1" y="875.6" width="7.6" height="7.4" fill="#999"/></svg>
<svg class="b" style="left:1545.0px;top:798.1px;" width="33.0" height="32.0" viewBox="1645.0 858.1 33.0 32.0"><circle cx="1661" cy="873.4" r="12.5" fill="none" stroke="#999" stroke-width="1.9"/><path d="M1660 866.0 V874.5 H1668.5" fill="none" stroke="#999" stroke-width="2"/></svg>
<div class="b" style="left:1024.8px;top:863.0px;width:280.5px;height:62.3px;background:#fff;border:2px solid #d9d9d9;border-radius:6px;box-sizing:border-box;"></div>
<div class="b" style="left:1315.0px;top:863.0px;width:278.5px;height:62.3px;background:#fff;border:2px solid #d9d9d9;border-radius:6px;box-sizing:border-box;"></div>
<div class="t" style="left:1050.6px;top:879.4px;font-size:29.0px;color:#222;font-weight:400;font-family:'Liberation Sans', sans-serif;transform:scaleX(1.019);">5/19/2025</div>
<div class="t" style="left:1340.0px;top:879.4px;font-size:29.0px;color:#222;font-weight:400;font-family:'Liberation Sans', sans-serif;transform:scaleX(0.958);">01:34:29 PM</div>
<svg class="b" style="left:1256.0px;top:876.1px;" width="34.0" height="34.0" viewBox="1356.0 936.1 34.0 34.0"><g fill="none" stroke="#999" stroke-width="1.9"><rect x="1360.6" y="941.4" width="24.9" height="24.6" rx="2"/><path d="M1360.6 949.0 H1385.5"/></g><rect x="1365.2" y="938.0" width="3.8" height="6" fill="#999"/><rect x="1377" y="938.0" width="3.8" height="6" fill="#999"/><rect x="1375.1" y="955.6" width="7.6" height="7.4" fill="#999"/></svg>
<svg class="b" style="left:1545.0px;top:878.1px;" width="33.0" height="32.0" viewBox="1645.0 938.1 33.0 32.0"><circle cx="1661" cy="953.4" r="12.5" fill="none" stroke="#999" stroke-width="1.9"/><path d="M1660 946.0 V954.5 H1668.5" fill="none" stroke="#999" stroke-width="2"/></svg>
<div class="b" style="left:946.0px;top:957.5px;width:679.0px;height:2.0px;background:#e0e0e0;"></div>
<div class="b" style="left:0.0px;top:0.0px;width:1.8px;height:1600.0px;background:#dedede;"></div>
<div class="b" style="left:978.0px;top:992.0px;width:615.5px;height:63.6px;background:#005cb9;border-radius:6px;"></div>
<div class="t" style="left:1250.3px;top:1009.3px;font-size:29.0px;color:#fff;font-weight:400;font-family:'Liberation Sans', sans-serif;transform:scaleX(0.961);">Apply</div>
</div>
</body></html>
